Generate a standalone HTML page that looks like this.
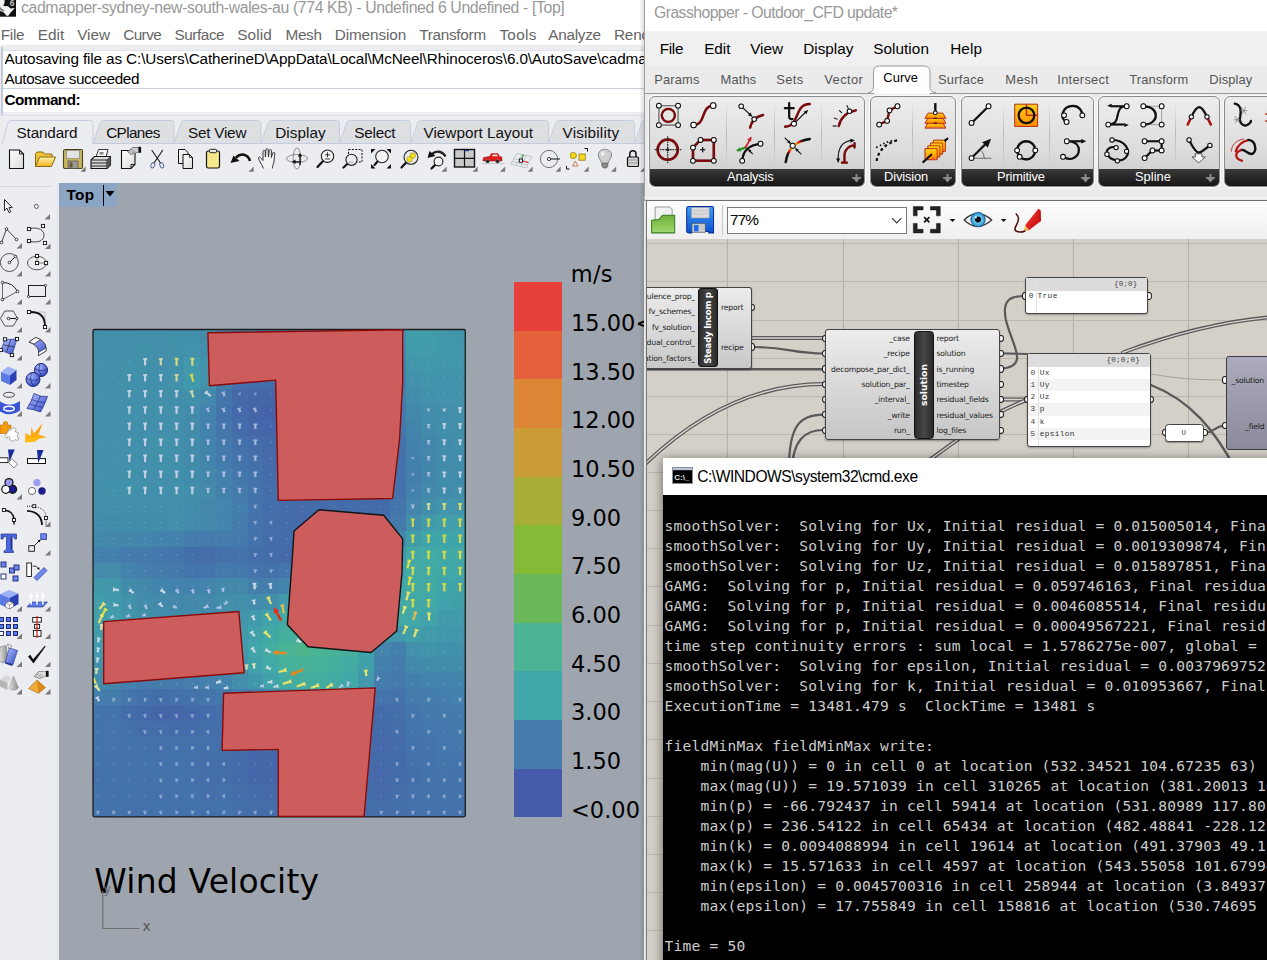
<!DOCTYPE html>
<html><head><meta charset="utf-8"><title>Rhino CFD</title>
<style>
html,body{margin:0;padding:0;}
body{width:1267px;height:960px;overflow:hidden;position:relative;background:#9fa5ae;}
.t{position:absolute;white-space:pre;}
.b{position:absolute;box-sizing:border-box;}
svg{position:absolute;overflow:visible;}
</style></head><body>
<div class="b" style="left:0px;top:0px;width:645px;height:45px;background:#fff;"></div>
<div class="b" style="left:0px;top:45px;width:645px;height:138px;background:#ecedf1;"></div>
<div class="b" style="left:0px;top:183px;width:59px;height:777px;background:#ecedf1;"></div>
<svg width="17" height="17" style="left:0;top:0" viewBox="0 0 17 17"><rect x="0" y="0" width="16" height="16.7" fill="#111"/><path d="M0 0 L4.6 0 Q5.2 3.5 3.2 5.6 L5 6.2 Q8 5.5 10.5 8.4 L14.8 8 L10 13.2 L8.6 15.6 L6.8 15.9 L3.8 12.6 L0 11 Z" fill="#f4f4f4"/><path d="M0 7 L4.5 10.5 L3 12 L0 10 Z" fill="#8a8a8a"/><text x="9.8" y="6.4" font-family="'Liberation Sans',sans-serif" font-size="8.6" font-weight="bold" fill="#bdbdbd">6</text></svg>
<div class="t" style="left:21.00px;top:-0.37px;font:15.8px/1 'Liberation Sans', sans-serif;color:#999;letter-spacing:-0.372px;">cadmapper-sydney-new-south-wales-au (774 KB) - Undefined 6 Undefined - [Top]</div>
<div class="t" style="left:0.70px;top:27.35px;font:15.3px/1 'Liberation Sans', sans-serif;color:#666;letter-spacing:-0.238px;">File</div>
<div class="t" style="left:37.70px;top:27.35px;font:15.3px/1 'Liberation Sans', sans-serif;color:#666;letter-spacing:0.084px;">Edit</div>
<div class="t" style="left:77.20px;top:27.35px;font:15.3px/1 'Liberation Sans', sans-serif;color:#666;letter-spacing:-0.047px;">View</div>
<div class="t" style="left:123.20px;top:27.35px;font:15.3px/1 'Liberation Sans', sans-serif;color:#666;letter-spacing:-0.563px;">Curve</div>
<div class="t" style="left:174.50px;top:27.35px;font:15.3px/1 'Liberation Sans', sans-serif;color:#666;letter-spacing:-0.433px;">Surface</div>
<div class="t" style="left:237.20px;top:27.35px;font:15.3px/1 'Liberation Sans', sans-serif;color:#666;letter-spacing:0.116px;">Solid</div>
<div class="t" style="left:285.50px;top:27.35px;font:15.3px/1 'Liberation Sans', sans-serif;color:#666;letter-spacing:-0.328px;">Mesh</div>
<div class="t" style="left:334.70px;top:27.35px;font:15.3px/1 'Liberation Sans', sans-serif;color:#666;letter-spacing:-0.087px;">Dimension</div>
<div class="t" style="left:419.20px;top:27.35px;font:15.3px/1 'Liberation Sans', sans-serif;color:#666;letter-spacing:-0.271px;">Transform</div>
<div class="t" style="left:499.40px;top:27.35px;font:15.3px/1 'Liberation Sans', sans-serif;color:#666;letter-spacing:0.296px;">Tools</div>
<div class="t" style="left:548.20px;top:27.35px;font:15.3px/1 'Liberation Sans', sans-serif;color:#666;letter-spacing:-0.247px;">Analyze</div>
<div class="t" style="left:613.90px;top:27.35px;font:15.3px/1 'Liberation Sans', sans-serif;color:#666;letter-spacing:-0.114px;">Render</div>
<div class="b" style="left:1px;top:47px;width:2px;height:68px;background:#c3c9dc;"></div>
<div class="b" style="left:3px;top:50px;width:642px;height:62px;background:#fff;border-top:1px solid #dfe2ea;"></div>
<div class="b" style="left:3px;top:88px;width:642px;height:1px;background:#c9cfde;"></div>
<div class="b" style="left:0px;top:115px;width:645px;height:1px;background:#dde0ea;"></div>
<div class="t" style="left:4.50px;top:51.25px;font:15.3px/1 'Liberation Sans', sans-serif;color:#000;letter-spacing:-0.133px;width:640px;overflow:hidden;">Autosaving file as C:\Users\CatherineD\AppData\Local\McNeel\Rhinoceros\6.0\AutoSave\cadmapper</div>
<div class="t" style="left:4.50px;top:71.05px;font:15.3px/1 'Liberation Sans', sans-serif;color:#000;letter-spacing:-0.419px;">Autosave succeeded</div>
<div class="t" style="left:4.50px;top:92.15px;font:15.3px/1 'Liberation Sans', sans-serif;font-weight:bold;color:#000;letter-spacing:-0.550px;">Command:</div>
<svg width="645" height="70" style="left:0;top:116px" viewBox="0 116 645 70"><path d="M2 144 L8 123 Q9 120.5 12 120.5 L90 120.5 Q93 120.5 93 123 L93 144" fill="#ecedf1" stroke="#c4cde0" stroke-width="1"/><path d="M93 143.5 L100 123 Q101 120.5 104 120.5 L171 120.5 Q174 120.5 174 123 L174 143.5 Z" fill="#dedfe2" stroke="#c4cde0" stroke-width="1"/><path d="M174 143.5 L181 123 Q182 120.5 185 120.5 L258 120.5 Q261 120.5 261 123 L261 143.5 Z" fill="#dedfe2" stroke="#c4cde0" stroke-width="1"/><path d="M261 143.5 L268 123 Q269 120.5 272 120.5 L336.5 120.5 Q339.5 120.5 339.5 123 L339.5 143.5 Z" fill="#dedfe2" stroke="#c4cde0" stroke-width="1"/><path d="M339.5 143.5 L346.5 123 Q347.5 120.5 350.5 120.5 L407.6 120.5 Q410.6 120.5 410.6 123 L410.6 143.5 Z" fill="#dedfe2" stroke="#c4cde0" stroke-width="1"/><path d="M410.6 143.5 L417.6 123 Q418.6 120.5 421.6 120.5 L545.6 120.5 Q548.6 120.5 548.6 123 L548.6 143.5 Z" fill="#dedfe2" stroke="#c4cde0" stroke-width="1"/><path d="M548.6 143.5 L555.6 123 Q556.6 120.5 559.6 120.5 L631.6 120.5 Q634.6 120.5 634.6 123 L634.6 143.5 Z" fill="#dedfe2" stroke="#c4cde0" stroke-width="1"/><path d="M634.6 143.5 L641.6 123 Q642.6 120.5 645.6 120.5 L697 120.5 Q700 120.5 700 123 L700 143.5 Z" fill="#dedfe2" stroke="#c4cde0" stroke-width="1"/><path d="M93 143.5 L645 143.5" stroke="#c4cde0" stroke-width="1"/></svg>
<div class="t" style="left:16.50px;top:124.85px;font:15.3px/1 'Liberation Sans', sans-serif;color:#111;letter-spacing:-0.150px;">Standard</div>
<div class="t" style="left:106.20px;top:124.85px;font:15.3px/1 'Liberation Sans', sans-serif;color:#111;letter-spacing:-0.619px;">CPlanes</div>
<div class="t" style="left:188.00px;top:124.85px;font:15.3px/1 'Liberation Sans', sans-serif;color:#111;letter-spacing:-0.238px;">Set View</div>
<div class="t" style="left:275.20px;top:124.85px;font:15.3px/1 'Liberation Sans', sans-serif;color:#111;letter-spacing:0.048px;">Display</div>
<div class="t" style="left:354.20px;top:124.85px;font:15.3px/1 'Liberation Sans', sans-serif;color:#111;letter-spacing:-0.221px;">Select</div>
<div class="t" style="left:423.50px;top:124.85px;font:15.3px/1 'Liberation Sans', sans-serif;color:#111;letter-spacing:0.004px;">Viewport Layout</div>
<div class="t" style="left:562.60px;top:124.85px;font:15.3px/1 'Liberation Sans', sans-serif;color:#111;letter-spacing:0.162px;">Visibility</div>
<div class="b" style="left:0px;top:186px;width:52px;height:1px;background:#d5dae8;"></div>
<div class="b" style="left:59px;top:183px;width:58px;height:24px;background:#8ba5c4;border-radius:0 0 4px 0;"></div>
<div class="t" style="left:66.50px;top:187.25px;font:15.3px/1 'Liberation Sans', sans-serif;font-weight:bold;color:#000;letter-spacing:0.366px;">Top</div>
<div class="b" style="left:103px;top:185px;width:1px;height:21px;background:#000;"></div>
<svg width="12" height="8" style="left:105px;top:190px"><path d="M0.5 1 L9.5 1 L5 6.5 Z" fill="#000"/></svg>
<svg width="645" height="34" style="left:0;top:144px" viewBox="0 144 645 34"><defs><linearGradient id="pgw" x1="0" y1="0" x2="1" y2="1"><stop offset="0" stop-color="#fff"/><stop offset="1" stop-color="#d9d9d9"/></linearGradient><linearGradient id="fy" x1="0" y1="0" x2="0" y2="1"><stop offset="0" stop-color="#fff2a8"/><stop offset="1" stop-color="#f0b521"/></linearGradient></defs><path d="M9.5 150 L19.5 150 L23.5 154 L23.5 168.5 L9.5 168.5 Z" fill="url(#pgw)" stroke="#111" stroke-width="1.1"/><path d="M19.5 150 L19.5 154 L23.5 154" fill="none" stroke="#111" stroke-width="0.9"/><path d="M35.5 166.5 L35.5 153.5 L37 152 L43 152 L44.5 154 L52 154 L52 157" fill="#f3c33a" stroke="#8a6a10" stroke-width="1"/><path d="M35.5 166.5 L39.5 157 L55.5 157 L51.5 166.5 Z" fill="url(#fy)" stroke="#8a6a10" stroke-width="1"/><rect x="63.5" y="149.5" width="19" height="19" rx="1.5" fill="#c8b560" stroke="#4a4420" stroke-width="1.1"/><rect x="66.5" y="150.5" width="13" height="8" fill="#e4e4e4" stroke="#777" stroke-width="0.6"/><rect x="68" y="161" width="10" height="7.5" fill="#9b9b9b" stroke="#444" stroke-width="0.6"/><rect x="69.5" y="162.5" width="3" height="5" fill="#6b5a1e"/><path d="M80.5 171.7 L85.7 166.5 L85.7 171.7 Z" fill="#7a7a7a"/><path d="M96 157 L98.5 149.5 L108 149.5 L106 157 Z" fill="#f6f6f6" stroke="#222" stroke-width="0.9"/><rect x="99.5" y="152" width="4" height="2.6" fill="#888"/><path d="M91 160 L94.5 156.5 L110.5 156.5 L110.5 165 L107 168.5 L91 168.5 Z" fill="#d9d9d9" stroke="#111" stroke-width="1.1"/><path d="M91 160 L107 160 L110.5 156.5 M107 160 L107 168.5 M91 163 L107 163 M91 166 L107 166" fill="none" stroke="#111" stroke-width="0.9"/><path d="M107 160 L110.5 156.5 L110.5 165 L107 168.5 Z" fill="#555"/><path d="M121.5 150.5 L135 150.5 L135 164.5 L131 168.5 L121.5 168.5 Z" fill="url(#pgw)" stroke="#111" stroke-width="1.1"/><path d="M135 164.5 L131 164.5 L131 168.5" fill="none" stroke="#111" stroke-width="0.9"/><path d="M127.5 151.5 L133 147.5 L139 147.5 L139 152 L134 153.5 L130.5 154.5 Z" fill="#cfcfcf" stroke="#555" stroke-width="0.7"/><rect x="138.5" y="146.8" width="2.6" height="6" fill="#111"/><path d="M128.5 152 L132 149 M130 153 L134 150 M132 153.5 L135.5 151" stroke="#777" stroke-width="0.6"/><path d="M152 150.5 L160.5 163 M162.5 150.5 L154 163" stroke="#222" stroke-width="1.2" stroke-linecap="round"/><ellipse cx="152.8" cy="165.2" rx="1.8" ry="2.8" transform="rotate(25 152.8 165.2)" fill="none" stroke="#5a6a9a" stroke-width="0.9"/><ellipse cx="161.7" cy="165.2" rx="1.8" ry="2.8" transform="rotate(-25 161.7 165.2)" fill="none" stroke="#5a6a9a" stroke-width="0.9"/><path d="M178.5 149.5 L185 149.5 L188 152.5 L188 163.5 L178.5 163.5 Z" fill="url(#pgw)" stroke="#111" stroke-width="1"/><path d="M183 154.5 L189.5 154.5 L192.5 157.5 L192.5 168.5 L183 168.5 Z" fill="url(#pgw)" stroke="#111" stroke-width="1"/><path d="M189.5 154.5 L189.5 157.5 L192.5 157.5" fill="none" stroke="#111" stroke-width="0.8"/><rect x="206.5" y="151" width="13" height="17" rx="1.8" fill="#f6e98c" stroke="#111" stroke-width="1.2"/><rect x="209.5" y="149.3" width="7" height="3.4" rx="1" fill="#e8e8e8" stroke="#111" stroke-width="0.9"/><path d="M250 161 C248 154 241 152.5 236 157.5" fill="none" stroke="#111" stroke-width="2.6"/><path d="M230.5 163 L233.5 155.5 L239.5 161 Z" fill="#111"/><path d="M248.5 171.7 L253.7 166.5 L253.7 171.7 Z" fill="#7a7a7a"/><path d="M263.5 168.5 C262 165 259.5 161 258.5 158.5 C258 157 259.5 156.5 260.5 157.5 L263 160.5 L263 151.5 C263 150 265.2 150 265.2 151.5 L265.4 157 L266 149.8 C266 148.3 268.2 148.3 268.2 149.8 L268.4 157 L269.4 150.5 C269.6 149 271.6 149.2 271.5 150.8 L271.3 157.5 L272.8 153 C273.3 151.7 275 152.2 274.8 153.6 C274.2 157.5 274.5 160.5 273.5 163.5 C272.8 165.5 272.3 167 272.3 168.5" fill="#f2f2f2" stroke="#222" stroke-width="0.9" stroke-linejoin="round"/><ellipse cx="297" cy="158.5" rx="10.5" ry="4" fill="none" stroke="#666" stroke-width="0.7"/><ellipse cx="297" cy="158.5" rx="3.8" ry="10.5" fill="none" stroke="#666" stroke-width="0.7"/><path d="M292.5 161.8 L301 161.8 M300 155 L300 165" stroke="#111" stroke-width="1.3"/><path d="M292 161.8 L295.5 159.6 L295.5 164 Z M300 153 L297.8 156.5 L302.2 156.5 Z" fill="#111"/><path d="M323.3 160.7 L317.5 167" stroke="#111" stroke-width="2.2" stroke-linecap="round"/><circle cx="327.5" cy="156.2" r="6.2" fill="#f4f4f4" stroke="#222" stroke-width="1.1"/><path d="M325 154.8 L330 154.8 M327.5 152.3 L327.5 157.3 M325 159 L330 159" stroke="#111" stroke-width="0.8"/><rect x="348.5" y="149.5" width="13.5" height="12.5" fill="none" stroke="#111" stroke-width="1" stroke-dasharray="2 1.4"/><path d="M347.5 163.7 L343.5 167.5" stroke="#111" stroke-width="2.2" stroke-linecap="round"/><circle cx="351.5" cy="159.8" r="5.6" fill="#ececf0" stroke="#222" stroke-width="1.1"/><path d="M349 162.2 L354 162.2" stroke="#555" stroke-width="0.7" stroke-dasharray="1.3 1"/><path d="M377.8 161.2 L374.5 165" stroke="#111" stroke-width="2.2" stroke-linecap="round"/><circle cx="382" cy="156.5" r="6.3" fill="#f4f4f4" stroke="#222" stroke-width="1.1"/><path d="M371 149 L375.5 149 L371 153.5 Z M391 149 L386.5 149 L391 153.5 Z M371 168.5 L375.5 168.5 L371 164 Z M391 168.5 L386.5 168.5 L391 164 Z" fill="#111"/><path d="M406.2 162.4 L401.5 167.5" stroke="#111" stroke-width="2.2" stroke-linecap="round"/><circle cx="411" cy="157.3" r="7" fill="#e9e9e9" stroke="#222" stroke-width="1.1"/><circle cx="412.8" cy="155.5" r="2.7" fill="#f2e21c" stroke="#8a7a00" stroke-width="0.5"/><circle cx="409.5" cy="159.3" r="2.7" fill="#f2e21c" stroke="#8a7a00" stroke-width="0.5"/><path d="M445.5 156.5 C442 150.5 436 150.5 432 154" fill="none" stroke="#222" stroke-width="2.4"/><path d="M427.5 158 L429.5 151 L435.5 156 Z" fill="#111"/><path d="M435.4 164.6 L431.5 168.5" stroke="#111" stroke-width="2.2" stroke-linecap="round"/><circle cx="438.5" cy="161.5" r="4.4" fill="#f4f4f4" stroke="#222" stroke-width="1.1"/><path d="M441.5 171.7 L446.7 166.5 L446.7 171.7 Z" fill="#7a7a7a"/><rect x="454.5" y="149.5" width="20" height="17.5" fill="#c9c9c9" stroke="#111" stroke-width="1.4"/><path d="M464.5 149.5 L464.5 167 M454.5 158.3 L474.5 158.3" stroke="#111" stroke-width="1.2"/><rect x="465.5" y="150" width="3.5" height="1.2" fill="#1a3aa8"/><path d="M472.5 171.7 L477.7 166.5 L477.7 171.7 Z" fill="#7a7a7a"/><path d="M483 160.5 L483.5 157.5 L489.5 156.5 L491.5 153.6 L498 153.6 L499.5 156.5 L501.8 157 L502 161 L483 161 Z" fill="#e01919" stroke="#8a0e0e" stroke-width="0.5"/><path d="M492 156.3 L493 154.5 L497.2 154.5 L498 156.3 Z" fill="#f6dede"/><circle cx="487.6" cy="161.3" r="1.9" fill="#222" stroke="#999" stroke-width="0.5"/><circle cx="497.5" cy="161.3" r="1.9" fill="#222" stroke="#999" stroke-width="0.5"/><path d="M482 163.6 L504 163.6" stroke="#bdbdbd" stroke-width="0.8"/><path d="M500 171.7 L505.2 166.5 L505.2 171.7 Z" fill="#7a7a7a"/><path d="M510.5 164 L517 153.5 L531.5 156.5 L526.5 168 Z M513.8 158.7 L529 162.2 M516 166 L521.5 154.5 M520.5 167 L526 155.5 M512 161.5 L528 165.2" fill="none" stroke="#b5b5b5" stroke-width="0.7"/><path d="M521 160.5 L523.5 154.5" stroke="#1a9a2a" stroke-width="1.1"/><path d="M521 160.5 L528 162.5" stroke="#e02020" stroke-width="1.1"/><rect x="519.3" y="159" width="3.2" height="3.2" fill="#fff" stroke="#111" stroke-width="0.9"/><path d="M527.5 171.7 L532.7 166.5 L532.7 171.7 Z" fill="#7a7a7a"/><circle cx="549" cy="159" r="8.6" fill="none" stroke="#666" stroke-width="0.9"/><path d="M549 159 L560 159" stroke="#111" stroke-width="1"/><circle cx="549" cy="159" r="1.6" fill="#fff" stroke="#111" stroke-width="0.8"/><path d="M555.5 171.7 L560.7 166.5 L560.7 171.7 Z" fill="#7a7a7a"/><circle cx="573.3" cy="155.5" r="3.1" fill="#f5d91c" stroke="#8a6a00" stroke-width="0.7"/><rect x="579" y="154" width="6.2" height="6.2" fill="#f5d91c" stroke="#8a6a00" stroke-width="0.7"/><path d="M572.5 166 L575.3 161.2 L578 166 Z" fill="none" stroke="#b9622a" stroke-width="0.8"/><path d="M584.5 148.5 L587.5 148.5 L587.5 151.5 M566.5 166 L566.5 169 L569.5 169" fill="none" stroke="#111" stroke-width="1"/><path d="M583.5 171.7 L588.7 166.5 L588.7 171.7 Z" fill="#7a7a7a"/><path d="M601.5 163 C601.5 160.5 598.3 158.5 598.3 155 C598.3 151.7 601 149.3 604.9 149.3 C608.8 149.3 611.5 151.7 611.5 155 C611.5 158.5 608.3 160.5 608.3 163 Z" fill="#cfcfcf" stroke="#7d7d7d" stroke-width="0.9"/><path d="M601.8 163.5 L608 163.5 L608 166 L606.5 168 L603.3 168 L601.8 166 Z" fill="#8a8a8a" stroke="#555" stroke-width="0.6"/><ellipse cx="602.6" cy="153.6" rx="1.6" ry="2.4" fill="#f2f2f2"/><path d="M611 171.7 L616.2 166.5 L616.2 171.7 Z" fill="#7a7a7a"/><path d="M629.8 157 L629.8 154 C629.8 149.8 636 149.8 636 154 L636 157" fill="none" stroke="#111" stroke-width="1.5"/><rect x="627.5" y="157" width="11" height="9.5" rx="1" fill="#d2d2d2" stroke="#111" stroke-width="1.2"/><path d="M628.5 160 L637.5 160 M628.5 163 L637.5 163" stroke="#888" stroke-width="0.7"/><path d="M640 171.7 L645.2 166.5 L645.2 171.7 Z" fill="#7a7a7a"/></svg>
<svg width="59" height="520" style="left:0;top:190px" viewBox="0 190 59 520"><defs><linearGradient id="bl1" x1="0" y1="0" x2="1" y2="1"><stop offset="0" stop-color="#b9c6ff"/><stop offset="1" stop-color="#3048c8"/></linearGradient><radialGradient id="sp" cx="0.35" cy="0.3" r="0.8"><stop offset="0" stop-color="#a8b8ff"/><stop offset="1" stop-color="#2a3cb8"/></radialGradient><linearGradient id="org" x1="0" y1="0" x2="0" y2="1"><stop offset="0" stop-color="#ff8a00"/><stop offset="1" stop-color="#ffc21a"/></linearGradient><linearGradient id="gry" x1="0" y1="0" x2="1" y2="0"><stop offset="0" stop-color="#e4e4e4"/><stop offset="1" stop-color="#8a8a8a"/></linearGradient></defs><rect x="57.3" y="183" width="1" height="777" fill="#dfe3ee"/><path d="M4.5 199.5 L4.5 210.5 L7 208.2 L9 212.6 L10.8 211.8 L8.9 207.6 L12.2 207.4 Z" fill="#fff" stroke="#111" stroke-width="0.9" stroke-linejoin="round"/><circle cx="36.4" cy="206.4" r="2" fill="#fff" stroke="#333" stroke-width="0.8"/><path d="M44.5 219.5 L50.0 214 L50.0 219.5 Z" fill="#7a7a7a"/><path d="M1.5 242.5 L6.5 229 L16.5 239.5" fill="none" stroke="#333" stroke-width="0.9"/><circle cx="1.5" cy="242.5" r="1.3" fill="#fff" stroke="#111" stroke-width="0.8"/><circle cx="6.5" cy="229" r="1.3" fill="#fff" stroke="#111" stroke-width="0.8"/><circle cx="16.5" cy="239.5" r="1.3" fill="#fff" stroke="#111" stroke-width="0.8"/><path d="M16.5 248.5 L22.0 243 L22.0 248.5 Z" fill="#7a7a7a"/><path d="M29 229 C48 223 50 247 29 241" fill="none" stroke="#333" stroke-width="0.9"/><rect x="27.4" y="227.4" width="3.2" height="3.2" fill="#fff" stroke="#111" stroke-width="0.9"/><rect x="41.4" y="224.4" width="3.2" height="3.2" fill="#fff" stroke="#111" stroke-width="0.9"/><rect x="27.4" y="239.4" width="3.2" height="3.2" fill="#fff" stroke="#111" stroke-width="0.9"/><rect x="43.4" y="241.4" width="3.2" height="3.2" fill="#fff" stroke="#111" stroke-width="0.9"/><path d="M45 249.0 L50.5 243.5 L50.5 249.0 Z" fill="#7a7a7a"/><circle cx="9.4" cy="262.5" r="9" fill="none" stroke="#444" stroke-width="0.9"/><path d="M9.4 262.5 L15.5 256.5" stroke="#111" stroke-width="1"/><circle cx="9.4" cy="262.5" r="1.3" fill="#fff" stroke="#111" stroke-width="0.8"/><circle cx="15.5" cy="256.5" r="1.3" fill="#fff" stroke="#111" stroke-width="0.8"/><path d="M16.5 276.5 L22.0 271 L22.0 276.5 Z" fill="#7a7a7a"/><ellipse cx="37" cy="263" rx="9.5" ry="6.8" fill="none" stroke="#444" stroke-width="0.9"/><path d="M37 256 L37 263 L46 263" fill="none" stroke="#555" stroke-width="0.7"/><rect x="35.4" y="254.4" width="3.2" height="3.2" fill="#fff" stroke="#111" stroke-width="0.9"/><rect x="35.4" y="261.4" width="3.2" height="3.2" fill="#fff" stroke="#111" stroke-width="0.9"/><rect x="44.4" y="261.4" width="3.2" height="3.2" fill="#fff" stroke="#111" stroke-width="0.9"/><path d="M45 276.5 L50.5 271 L50.5 276.5 Z" fill="#7a7a7a"/><path d="M2.5 282.5 L2.5 299.5 L17.5 291.5" fill="none" stroke="#444" stroke-width="0.8"/><path d="M2.5 282.5 Q13 282.5 17.5 291.5" fill="none" stroke="#222" stroke-width="1"/><circle cx="2.5" cy="282.5" r="1.3" fill="#fff" stroke="#111" stroke-width="0.8"/><circle cx="17.5" cy="291.5" r="1.3" fill="#fff" stroke="#111" stroke-width="0.8"/><circle cx="2.5" cy="299.5" r="1.3" fill="#fff" stroke="#111" stroke-width="0.8"/><path d="M16.5 304.5 L22.0 299 L22.0 304.5 Z" fill="#7a7a7a"/><rect x="28.5" y="285.5" width="17" height="11" fill="none" stroke="#222" stroke-width="1"/><circle cx="45.5" cy="285.5" r="1.1" fill="#fff" stroke="#111" stroke-width="0.8"/><circle cx="28.5" cy="296.5" r="1.1" fill="#fff" stroke="#111" stroke-width="0.8"/><path d="M45 304.5 L50.5 299 L50.5 304.5 Z" fill="#7a7a7a"/><path d="M0.5 318.5 L4.8 311 L13.3 311 L17.6 318.5 L13.3 326 L4.8 326 Z" fill="none" stroke="#444" stroke-width="0.9"/><path d="M8.5 318.5 L16.8 318.5" stroke="#111" stroke-width="1"/><circle cx="8.5" cy="318.5" r="1.3" fill="#fff" stroke="#111" stroke-width="0.8"/><circle cx="16.8" cy="318.5" r="1.1" fill="#fff" stroke="#111" stroke-width="0.8"/><path d="M16.5 332.5 L22.0 327 L22.0 332.5 Z" fill="#7a7a7a"/><path d="M30 312 L45 312 L45 326" fill="none" stroke="#aaa" stroke-width="0.7"/><path d="M30.5 312 Q45 312 45 326" fill="none" stroke="#111" stroke-width="1.8"/><rect x="27.4" y="310.4" width="3.2" height="3.2" fill="#fff" stroke="#111" stroke-width="0.9"/><rect x="43.4" y="325.4" width="3.2" height="3.2" fill="#fff" stroke="#111" stroke-width="0.9"/><path d="M45 332.5 L50.5 327 L50.5 332.5 Z" fill="#7a7a7a"/><path d="M5 339.5 L17 339 L12 355 L1 350 Z" fill="url(#bl1)" stroke="#2a3a9a" stroke-width="0.7"/><path d="M11 339.3 L6.3 352.5 M3 344.8 L14.6 347" stroke="#223" stroke-width="0.7"/><rect x="3.4" y="337.7" width="3.2" height="3.2" fill="#fff" stroke="#111" stroke-width="0.9"/><rect x="15.4" y="337.4" width="3.2" height="3.2" fill="#fff" stroke="#111" stroke-width="0.9"/><rect x="10.4" y="353.4" width="3.2" height="3.2" fill="#fff" stroke="#111" stroke-width="0.9"/><rect x="-0.8" y="348.4" width="3.2" height="3.2" fill="#fff" stroke="#111" stroke-width="0.9"/><path d="M16.5 360.5 L22.0 355 L22.0 360.5 Z" fill="#7a7a7a"/><path d="M29 342 L35.5 337.5 Q45 340.5 46 347 L46 351 L38.5 355.5 L38.5 350.5 Q37 345 29 342 Z" fill="url(#bl1)" stroke="#222" stroke-width="0.8"/><path d="M29 342 L35.5 337.5 Q38.5 338.3 40.5 339.5 L34 344 Q31.5 342.8 29 342 Z" fill="#fff" stroke="#222" stroke-width="0.7"/><path d="M38.5 355.5 L46 351 L46 348 L38.5 352.5 Z" fill="#fff" stroke="#222" stroke-width="0.6"/><path d="M45 360.5 L50.5 355 L50.5 360.5 Z" fill="#7a7a7a"/><path d="M1 372 L8 366.5 L16.5 370 L10 375.5 Z" fill="#9db2f6"/><path d="M1 372 L10 375.5 L10 385 L1 381 Z" fill="#5b7ae6"/><path d="M10 375.5 L16.5 370 L16.5 380 L10 385 Z" fill="#2b3fb2"/><path d="M16.5 388.5 L22.0 383 L22.0 388.5 Z" fill="#7a7a7a"/><circle cx="41" cy="370" r="6.6" fill="url(#sp)" stroke="#1a2470" stroke-width="0.9"/><path d="M35 368.5 Q41 372.5 47.3 369 M39.5 363.8 Q37.5 370 41.5 376.4" fill="none" stroke="#1a2470" stroke-width="0.7"/><circle cx="33" cy="379.5" r="7" fill="url(#sp)" stroke="#1a2470" stroke-width="0.9"/><path d="M26.3 378 Q33 382.5 39.8 378.5 M31.5 372.8 Q29 380 33.5 386.4" fill="none" stroke="#1a2470" stroke-width="0.7"/><path d="M45 388.5 L50.5 383 L50.5 388.5 Z" fill="#7a7a7a"/><ellipse cx="9" cy="394.8" rx="5.6" ry="2.5" fill="none" stroke="#222" stroke-width="0.8"/><path d="M0 401.5 Q10 408 20 401 L20 410.5 Q10 417.5 0 411.5 Z" fill="#3a55d6"/><ellipse cx="9" cy="408.6" rx="5.2" ry="2.4" fill="none" stroke="#fff" stroke-width="1.5"/><path d="M16.5 416.5 L22.0 411 L22.0 416.5 Z" fill="#7a7a7a"/><path d="M34 393.5 Q41 397.5 47.5 396.5 Q45 404 40.5 412 Q33 409 27 408.5 Q32 401 34 393.5 Z" fill="url(#bl1)" stroke="#26328a" stroke-width="0.8"/><path d="M40.5 396 Q37.5 403 33.5 409.5 M31.5 399.5 Q38 402.5 45 402.5 M29.5 404 Q36 406.5 43 407.5" fill="none" stroke="#26328a" stroke-width="0.7"/><path d="M45 416.5 L50.5 411 L50.5 416.5 Z" fill="#7a7a7a"/><path d="M0 425 L3.5 425 Q2.5 421.5 5.5 421.5 Q8.5 421.5 7.5 425 L11 425 L11 428.5 Q8 428 8 430.5 Q8 433 11 432.5 L7.5 433.5 L0 433.5 Z" fill="#f59a0c" stroke="#a86200" stroke-width="0.5"/><path d="M8 431 L11.5 429.5 Q12.5 426.5 15 428 Q17 429.5 15 431.5 L18.5 433 L17 436.5 Q19.5 437 18.5 439.5 Q17 441.5 15 439.5 L13 441.5 L9.5 439.5 Q10.5 437 8.5 436.5 Q6.5 436.5 7 438.5 L5 436.5 Z" fill="#fff" stroke="#777" stroke-width="0.6"/><path d="M25.5 433 L25 442.5 L34.5 442 L39.5 438.5 L47 437.5 L38.5 434.5 L42.5 423.5 L34 433.5 L31.5 427.5 L30.5 436 Z" fill="url(#org)"/><path d="M8 449.5 L14.8 449.5 L9.5 461.5 Z" fill="#1c2c9c"/><rect x="-1" y="457.8" width="9" height="4.8" fill="#fff" stroke="#111" stroke-width="0.9"/><path d="M8.5 462.5 L12 458.8 L17.5 464 L14 468 Z" fill="#fff" stroke="#555" stroke-width="0.7"/><rect x="27.5" y="458.6" width="18" height="4.9" fill="#fff" stroke="#111" stroke-width="1"/><path d="M37 450 L43.6 450 L38.2 463.3 Z" fill="#1c2c9c"/><circle cx="9" cy="482.6" r="4.6" fill="#111"/><circle cx="5.8" cy="489.3" r="4.6" fill="#111"/><circle cx="12.6" cy="489.3" r="4.6" fill="#111"/><circle cx="9" cy="482.6" r="3.4" fill="#9d9df2"/><circle cx="12.6" cy="489.3" r="3.4" fill="#1c1c8c"/><circle cx="5.8" cy="489.3" r="3.4" fill="#fff"/><path d="M16.5 499.5 L22.0 494 L22.0 499.5 Z" fill="#7a7a7a"/><circle cx="37" cy="482.6" r="3.7" fill="#9d9df2"/><circle cx="42" cy="491" r="3.7" fill="#1c1c8c"/><circle cx="32" cy="491" r="3.6" fill="#fff" stroke="#333" stroke-width="0.7"/><path d="M4 510 Q14 511 14 520 L14 524.5" fill="none" stroke="#111" stroke-width="1.5"/><rect x="2.5" y="508.5" width="3.0" height="3.0" fill="#fff" stroke="#111" stroke-width="0.9"/><rect x="12.5" y="518.5" width="3.0" height="3.0" fill="#fff" stroke="#111" stroke-width="0.9"/><path d="M27 510.8 Q41.5 511.5 42 525" fill="none" stroke="#111" stroke-width="1.8"/><path d="M27 506.2 L32.5 506.2 M46 520.5 L46 526" stroke="#111" stroke-width="1" stroke-dasharray="1 1"/><path d="M34 506.5 Q45.5 508 46 516.5" fill="none" stroke="#111" stroke-width="0.8" stroke-dasharray="1 1"/><rect x="32.7" y="504.7" width="3.0" height="3.0" fill="#fff" stroke="#111" stroke-width="0.9"/><rect x="44.5" y="516.5" width="3.0" height="3.0" fill="#fff" stroke="#111" stroke-width="0.9"/><path d="M45 527.0 L50.5 521.5 L50.5 527.0 Z" fill="#7a7a7a"/><path d="M1 534 L16.5 534 L16.5 539 L14.5 539 L13.5 536.5 L11 536.5 L11 549.5 L13.5 551 L13.5 552.5 L4 552.5 L4 551 L6.5 549.5 L6.5 536.5 L4 536.5 L3 539 L1 539 Z" fill="#4a66e0" stroke="#22308a" stroke-width="0.7"/><path d="M11 536.5 L12.5 537.5 L12.5 550 L11 549.5 Z" fill="#22308a"/><rect x="28.8" y="545.7" width="5.6" height="5.6" fill="#eee" stroke="#111" stroke-width="0.9"/><rect x="40.8" y="533.8" width="5.6" height="5.6" fill="#6d86f2" stroke="#22308a" stroke-width="0.8"/><path d="M34.5 545.5 L40 540" stroke="#111" stroke-width="0.9"/><path d="M40.6 539.4 L37.6 540.2 L39.8 542.4 Z" fill="#111"/><path d="M45 555.5 L50.5 550 L50.5 555.5 Z" fill="#7a7a7a"/><rect x="1" y="562" width="5" height="5" fill="#6d86f2" stroke="#1c2470" stroke-width="0.9"/><rect x="1" y="574" width="5" height="5" fill="#fff" stroke="#1c2470" stroke-width="0.9"/><rect x="9.5" y="568" width="5" height="5" fill="#6d86f2" stroke="#1c2470" stroke-width="0.9"/><rect x="14" y="565" width="5" height="5" fill="#6d86f2" stroke="#1c2470" stroke-width="0.9"/><rect x="13" y="576" width="5" height="5" fill="#6d86f2" stroke="#1c2470" stroke-width="0.9"/><rect x="26.8" y="563" width="4.6" height="13.5" fill="#fff" stroke="#111" stroke-width="0.9"/><path d="M32.5 566 Q37 565.5 38.5 568.5" fill="none" stroke="#111" stroke-width="0.8"/><path d="M39.3 570 L36.8 568.6 L39.6 567.2 Z" fill="#111"/><path d="M34 577.5 L44 567.5 L47 570.5 L37 580.5 Z" fill="#6d86f2" stroke="#22308a" stroke-width="0.7"/><path d="M0 594 L9 590 L18.5 593.5 L9.5 598 Z" fill="#9db2f6"/><path d="M0 594 L9.5 598 L9.5 609 L0 604.5 Z" fill="#5b7ae6"/><path d="M9.5 598 L18.5 593.5 L18.5 604 L9.5 609 Z" fill="#2b3fb2"/><path d="M5.5 603 L9.5 601.5 L13.5 603 L13.5 606.6 L9.5 609 L5.5 607 Z" fill="#fff" stroke="#555" stroke-width="0.5"/><path d="M9.5 605 L9.5 609 M5.5 603 L9.5 605 L13.5 603" fill="none" stroke="#555" stroke-width="0.5"/><path d="M16.5 611.5 L22.0 606 L22.0 611.5 Z" fill="#7a7a7a"/><path d="M27 607 L31.5 602 L47.5 602 L43 607 Z" fill="#5b7ae6" stroke="#22308a" stroke-width="0.6"/><path d="M31.2 604.5 L31.2 596" stroke="#fff" stroke-width="1.5"/><path d="M29.0 597 L31.2 592.6 L33.4 597 Z" fill="#fff"/><path d="M37 604.5 L37 596" stroke="#fff" stroke-width="1.5"/><path d="M34.8 597 L37 592.6 L39.2 597 Z" fill="#fff"/><path d="M42.8 604.5 L42.8 596" stroke="#fff" stroke-width="1.5"/><path d="M40.599999999999994 597 L42.8 592.6 L45.0 597 Z" fill="#fff"/><path d="M45 611.5 L50.5 606 L50.5 611.5 Z" fill="#7a7a7a"/><rect x="-0.5" y="617.5" width="4" height="4" fill="#4f7af2" stroke="#141c60" stroke-width="0.9"/><rect x="-0.5" y="624.5" width="4" height="4" fill="#4f7af2" stroke="#141c60" stroke-width="0.9"/><rect x="-0.5" y="631.5" width="4" height="4" fill="#fff" stroke="#141c60" stroke-width="0.9"/><rect x="6.5" y="617.5" width="4" height="4" fill="#4f7af2" stroke="#141c60" stroke-width="0.9"/><rect x="6.5" y="624.5" width="4" height="4" fill="#4f7af2" stroke="#141c60" stroke-width="0.9"/><rect x="6.5" y="631.5" width="4" height="4" fill="#4f7af2" stroke="#141c60" stroke-width="0.9"/><rect x="13.5" y="617.5" width="4" height="4" fill="#4f7af2" stroke="#141c60" stroke-width="0.9"/><rect x="13.5" y="624.5" width="4" height="4" fill="#4f7af2" stroke="#141c60" stroke-width="0.9"/><rect x="13.5" y="631.5" width="4" height="4" fill="#4f7af2" stroke="#141c60" stroke-width="0.9"/><path d="M16.5 639.0 L22.0 633.5 L22.0 639.0 Z" fill="#7a7a7a"/><rect x="32.7" y="617.5" width="8.6" height="4.6" fill="#fff" stroke="#111" stroke-width="0.9"/><rect x="34.6" y="624.5" width="5" height="3.8" fill="#fff" stroke="#111" stroke-width="0.9"/><rect x="33.4" y="630.5" width="7.6" height="5.8" fill="#fff" stroke="#111" stroke-width="0.9"/><path d="M37 616 L37 638" stroke="#d01818" stroke-width="1.2"/><path d="M45 639.0 L50.5 633.5 L50.5 639.0 Z" fill="#7a7a7a"/><path d="M0 647 L6 645.5 L8 657.5 L3 663 L-1 661 Z" fill="url(#gry)" stroke="#666" stroke-width="0.5"/><path d="M7.5 644 L12 646 L9 649 Z" fill="#fff" stroke="#444" stroke-width="0.5"/><path d="M9.5 648 L17.5 650.5 L13 664.5 L5 662 Z" fill="url(#bl1)" stroke="#22308a" stroke-width="0.6"/><path d="M5 662 L13 664.5 L12 666 L4.5 663.3 Z" fill="#22308a"/><path d="M16.5 667.0 L22.0 661.5 L22.0 667.0 Z" fill="#7a7a7a"/><path d="M28 656.5 L30.2 654.8 L33.2 659.3 L44.8 645.8 L45.6 646.4 L33.5 663.5 Z" fill="#111"/><path d="M45 667.0 L50.5 661.5 L50.5 667.0 Z" fill="#7a7a7a"/><path d="M0 679.5 L6 675 L12 677.5 L7.5 683 Z" fill="#d8d8d8"/><path d="M0 679.5 L7.5 683 L7.5 690 L0 686.5 Z" fill="#b5b5b5"/><path d="M13.5 676 L18.5 688 Q14.5 692 9 688.5 Z" fill="url(#gry)" stroke="#777" stroke-width="0.4"/><path d="M16.5 694.5 L22.0 689 L22.0 694.5 Z" fill="#7a7a7a"/><path d="M37 680 L45.5 687.5 L38.5 693.5 L28.5 688.5 Z" fill="#f2aa3c" stroke="#8a5a10" stroke-width="0.5"/><path d="M37 680 L38.5 693.5 L45.5 687.5 Z" fill="#d98a1c"/><path d="M34 676.5 L38.5 671.5 L46 671.5 L46 676 L40 678.5 Z" fill="#ddd" stroke="#666" stroke-width="0.6"/><rect x="46" y="670.8" width="2.6" height="6" fill="#111"/><path d="M35.5 676.5 L39 673 M37.5 677.3 L41 674 M39.5 678 L43 674.8" stroke="#666" stroke-width="0.6"/><path d="M45 694.5 L50.5 689 L50.5 694.5 Z" fill="#7a7a7a"/></svg>
<svg width="400" height="520" style="left:80px;top:310px" viewBox="80 310 400 520"><defs><clipPath id="mc"><rect x="93" y="329.5" width="372.3" height="487.29999999999995"/></clipPath></defs><g clip-path="url(#mc)" shape-rendering="crispEdges"><rect x="93" y="329.5" width="372.3" height="487.29999999999995" fill="#4384ac"/><rect x="89.5" y="325.5" width="16.1" height="16.1" fill="#428fab"/><rect x="89.5" y="341.3" width="16.1" height="16.1" fill="#428fab"/><rect x="89.5" y="357.1" width="16.1" height="16.1" fill="#4290ab"/><rect x="89.5" y="372.9" width="16.1" height="16.1" fill="#428eab"/><rect x="89.5" y="388.7" width="16.1" height="16.1" fill="#4290ab"/><rect x="89.5" y="404.5" width="16.1" height="16.1" fill="#428fab"/><rect x="89.5" y="420.3" width="16.1" height="16.1" fill="#428eab"/><rect x="89.5" y="436.1" width="16.1" height="16.1" fill="#4290ab"/><rect x="89.5" y="451.9" width="16.1" height="16.1" fill="#428eab"/><rect x="89.5" y="467.7" width="16.1" height="16.1" fill="#4290ab"/><rect x="89.5" y="483.5" width="16.1" height="16.1" fill="#428eab"/><rect x="89.5" y="499.3" width="16.1" height="16.1" fill="#428eab"/><rect x="89.5" y="515.1" width="16.1" height="16.1" fill="#428dab"/><rect x="89.5" y="530.9" width="16.1" height="16.1" fill="#4389ab"/><rect x="89.5" y="546.7" width="16.1" height="16.1" fill="#4480ac"/><rect x="89.5" y="562.5" width="16.1" height="16.1" fill="#438aab"/><rect x="89.5" y="578.3" width="16.1" height="16.1" fill="#4198ab"/><rect x="89.5" y="594.1" width="16.1" height="16.1" fill="#419eaa"/><rect x="89.5" y="609.9" width="16.1" height="16.1" fill="#41a0aa"/><rect x="89.5" y="625.7" width="16.1" height="16.1" fill="#419caa"/><rect x="89.5" y="641.5" width="16.1" height="16.1" fill="#419bab"/><rect x="89.5" y="657.3" width="16.1" height="16.1" fill="#4291ab"/><rect x="89.5" y="673.1" width="16.1" height="16.1" fill="#428dab"/><rect x="89.5" y="688.9" width="16.1" height="16.1" fill="#447eac"/><rect x="89.5" y="704.7" width="16.1" height="16.1" fill="#4474ab"/><rect x="89.5" y="720.5" width="16.1" height="16.1" fill="#4473ab"/><rect x="89.5" y="736.3" width="16.1" height="16.1" fill="#4473ab"/><rect x="89.5" y="752.1" width="16.1" height="16.1" fill="#4473ab"/><rect x="89.5" y="767.9" width="16.1" height="16.1" fill="#4471ab"/><rect x="89.5" y="783.7" width="16.1" height="16.1" fill="#4472ab"/><rect x="89.5" y="799.5" width="16.1" height="16.1" fill="#4472ab"/><rect x="89.5" y="815.3" width="16.1" height="16.1" fill="#4471ab"/><rect x="105.3" y="325.5" width="16.1" height="16.1" fill="#4290ab"/><rect x="105.3" y="341.3" width="16.1" height="16.1" fill="#428eab"/><rect x="105.3" y="357.1" width="16.1" height="16.1" fill="#428eab"/><rect x="105.3" y="372.9" width="16.1" height="16.1" fill="#428fab"/><rect x="105.3" y="388.7" width="16.1" height="16.1" fill="#4290ab"/><rect x="105.3" y="404.5" width="16.1" height="16.1" fill="#4290ab"/><rect x="105.3" y="420.3" width="16.1" height="16.1" fill="#428fab"/><rect x="105.3" y="436.1" width="16.1" height="16.1" fill="#4290ab"/><rect x="105.3" y="451.9" width="16.1" height="16.1" fill="#4290ab"/><rect x="105.3" y="467.7" width="16.1" height="16.1" fill="#428fab"/><rect x="105.3" y="483.5" width="16.1" height="16.1" fill="#4291ab"/><rect x="105.3" y="499.3" width="16.1" height="16.1" fill="#428fab"/><rect x="105.3" y="515.1" width="16.1" height="16.1" fill="#428cab"/><rect x="105.3" y="530.9" width="16.1" height="16.1" fill="#4388ab"/><rect x="105.3" y="546.7" width="16.1" height="16.1" fill="#4480ac"/><rect x="105.3" y="562.5" width="16.1" height="16.1" fill="#438aab"/><rect x="105.3" y="578.3" width="16.1" height="16.1" fill="#4296ab"/><rect x="105.3" y="594.1" width="16.1" height="16.1" fill="#4199ab"/><rect x="105.3" y="609.9" width="16.1" height="16.1" fill="#419faa"/><rect x="105.3" y="625.7" width="16.1" height="16.1" fill="#4199ab"/><rect x="105.3" y="641.5" width="16.1" height="16.1" fill="#4197ab"/><rect x="105.3" y="657.3" width="16.1" height="16.1" fill="#4291ab"/><rect x="105.3" y="673.1" width="16.1" height="16.1" fill="#4388ab"/><rect x="105.3" y="688.9" width="16.1" height="16.1" fill="#447cac"/><rect x="105.3" y="704.7" width="16.1" height="16.1" fill="#4472ab"/><rect x="105.3" y="720.5" width="16.1" height="16.1" fill="#4474ab"/><rect x="105.3" y="736.3" width="16.1" height="16.1" fill="#4474ab"/><rect x="105.3" y="752.1" width="16.1" height="16.1" fill="#4473ab"/><rect x="105.3" y="767.9" width="16.1" height="16.1" fill="#4473ab"/><rect x="105.3" y="783.7" width="16.1" height="16.1" fill="#4471ab"/><rect x="105.3" y="799.5" width="16.1" height="16.1" fill="#4472ab"/><rect x="105.3" y="815.3" width="16.1" height="16.1" fill="#4472ab"/><rect x="121.1" y="325.5" width="16.1" height="16.1" fill="#4290ab"/><rect x="121.1" y="341.3" width="16.1" height="16.1" fill="#4290ab"/><rect x="121.1" y="357.1" width="16.1" height="16.1" fill="#4291ab"/><rect x="121.1" y="372.9" width="16.1" height="16.1" fill="#4291ab"/><rect x="121.1" y="388.7" width="16.1" height="16.1" fill="#4290ab"/><rect x="121.1" y="404.5" width="16.1" height="16.1" fill="#4290ab"/><rect x="121.1" y="420.3" width="16.1" height="16.1" fill="#428eab"/><rect x="121.1" y="436.1" width="16.1" height="16.1" fill="#4290ab"/><rect x="121.1" y="451.9" width="16.1" height="16.1" fill="#4290ab"/><rect x="121.1" y="467.7" width="16.1" height="16.1" fill="#4291ab"/><rect x="121.1" y="483.5" width="16.1" height="16.1" fill="#4291ab"/><rect x="121.1" y="499.3" width="16.1" height="16.1" fill="#428fab"/><rect x="121.1" y="515.1" width="16.1" height="16.1" fill="#428dab"/><rect x="121.1" y="530.9" width="16.1" height="16.1" fill="#4386ac"/><rect x="121.1" y="546.7" width="16.1" height="16.1" fill="#447bac"/><rect x="121.1" y="562.5" width="16.1" height="16.1" fill="#4383ac"/><rect x="121.1" y="578.3" width="16.1" height="16.1" fill="#428cab"/><rect x="121.1" y="594.1" width="16.1" height="16.1" fill="#4291ab"/><rect x="121.1" y="609.9" width="16.1" height="16.1" fill="#4294ab"/><rect x="121.1" y="625.7" width="16.1" height="16.1" fill="#4294ab"/><rect x="121.1" y="641.5" width="16.1" height="16.1" fill="#4290ab"/><rect x="121.1" y="657.3" width="16.1" height="16.1" fill="#4388ab"/><rect x="121.1" y="673.1" width="16.1" height="16.1" fill="#4480ac"/><rect x="121.1" y="688.9" width="16.1" height="16.1" fill="#4476ab"/><rect x="121.1" y="704.7" width="16.1" height="16.1" fill="#446caa"/><rect x="121.1" y="720.5" width="16.1" height="16.1" fill="#4470ab"/><rect x="121.1" y="736.3" width="16.1" height="16.1" fill="#4472ab"/><rect x="121.1" y="752.1" width="16.1" height="16.1" fill="#4473ab"/><rect x="121.1" y="767.9" width="16.1" height="16.1" fill="#4473ab"/><rect x="121.1" y="783.7" width="16.1" height="16.1" fill="#4473ab"/><rect x="121.1" y="799.5" width="16.1" height="16.1" fill="#4471ab"/><rect x="121.1" y="815.3" width="16.1" height="16.1" fill="#4472ab"/><rect x="136.9" y="325.5" width="16.1" height="16.1" fill="#428fab"/><rect x="136.9" y="341.3" width="16.1" height="16.1" fill="#4291ab"/><rect x="136.9" y="357.1" width="16.1" height="16.1" fill="#4291ab"/><rect x="136.9" y="372.9" width="16.1" height="16.1" fill="#428fab"/><rect x="136.9" y="388.7" width="16.1" height="16.1" fill="#428fab"/><rect x="136.9" y="404.5" width="16.1" height="16.1" fill="#428fab"/><rect x="136.9" y="420.3" width="16.1" height="16.1" fill="#428fab"/><rect x="136.9" y="436.1" width="16.1" height="16.1" fill="#4290ab"/><rect x="136.9" y="451.9" width="16.1" height="16.1" fill="#4290ab"/><rect x="136.9" y="467.7" width="16.1" height="16.1" fill="#4290ab"/><rect x="136.9" y="483.5" width="16.1" height="16.1" fill="#428fab"/><rect x="136.9" y="499.3" width="16.1" height="16.1" fill="#428fab"/><rect x="136.9" y="515.1" width="16.1" height="16.1" fill="#428dab"/><rect x="136.9" y="530.9" width="16.1" height="16.1" fill="#4385ac"/><rect x="136.9" y="546.7" width="16.1" height="16.1" fill="#447bac"/><rect x="136.9" y="562.5" width="16.1" height="16.1" fill="#447eac"/><rect x="136.9" y="578.3" width="16.1" height="16.1" fill="#4387ab"/><rect x="136.9" y="594.1" width="16.1" height="16.1" fill="#428cab"/><rect x="136.9" y="609.9" width="16.1" height="16.1" fill="#4291ab"/><rect x="136.9" y="625.7" width="16.1" height="16.1" fill="#428dab"/><rect x="136.9" y="641.5" width="16.1" height="16.1" fill="#428dab"/><rect x="136.9" y="657.3" width="16.1" height="16.1" fill="#4384ac"/><rect x="136.9" y="673.1" width="16.1" height="16.1" fill="#447cac"/><rect x="136.9" y="688.9" width="16.1" height="16.1" fill="#4471ab"/><rect x="136.9" y="704.7" width="16.1" height="16.1" fill="#4568aa"/><rect x="136.9" y="720.5" width="16.1" height="16.1" fill="#446daa"/><rect x="136.9" y="736.3" width="16.1" height="16.1" fill="#4471ab"/><rect x="136.9" y="752.1" width="16.1" height="16.1" fill="#4472ab"/><rect x="136.9" y="767.9" width="16.1" height="16.1" fill="#4471ab"/><rect x="136.9" y="783.7" width="16.1" height="16.1" fill="#4471ab"/><rect x="136.9" y="799.5" width="16.1" height="16.1" fill="#4471ab"/><rect x="136.9" y="815.3" width="16.1" height="16.1" fill="#4471ab"/><rect x="152.7" y="325.5" width="16.1" height="16.1" fill="#428fab"/><rect x="152.7" y="341.3" width="16.1" height="16.1" fill="#428eab"/><rect x="152.7" y="357.1" width="16.1" height="16.1" fill="#428eab"/><rect x="152.7" y="372.9" width="16.1" height="16.1" fill="#428fab"/><rect x="152.7" y="388.7" width="16.1" height="16.1" fill="#428fab"/><rect x="152.7" y="404.5" width="16.1" height="16.1" fill="#4290ab"/><rect x="152.7" y="420.3" width="16.1" height="16.1" fill="#428fab"/><rect x="152.7" y="436.1" width="16.1" height="16.1" fill="#4292ab"/><rect x="152.7" y="451.9" width="16.1" height="16.1" fill="#4291ab"/><rect x="152.7" y="467.7" width="16.1" height="16.1" fill="#4290ab"/><rect x="152.7" y="483.5" width="16.1" height="16.1" fill="#4290ab"/><rect x="152.7" y="499.3" width="16.1" height="16.1" fill="#428fab"/><rect x="152.7" y="515.1" width="16.1" height="16.1" fill="#428dab"/><rect x="152.7" y="530.9" width="16.1" height="16.1" fill="#4382ac"/><rect x="152.7" y="546.7" width="16.1" height="16.1" fill="#4478ac"/><rect x="152.7" y="562.5" width="16.1" height="16.1" fill="#447dac"/><rect x="152.7" y="578.3" width="16.1" height="16.1" fill="#4384ac"/><rect x="152.7" y="594.1" width="16.1" height="16.1" fill="#4389ab"/><rect x="152.7" y="609.9" width="16.1" height="16.1" fill="#428dab"/><rect x="152.7" y="625.7" width="16.1" height="16.1" fill="#438bab"/><rect x="152.7" y="641.5" width="16.1" height="16.1" fill="#4389ab"/><rect x="152.7" y="657.3" width="16.1" height="16.1" fill="#4382ac"/><rect x="152.7" y="673.1" width="16.1" height="16.1" fill="#447cac"/><rect x="152.7" y="688.9" width="16.1" height="16.1" fill="#446eaa"/><rect x="152.7" y="704.7" width="16.1" height="16.1" fill="#4565a9"/><rect x="152.7" y="720.5" width="16.1" height="16.1" fill="#446daa"/><rect x="152.7" y="736.3" width="16.1" height="16.1" fill="#4471ab"/><rect x="152.7" y="752.1" width="16.1" height="16.1" fill="#4471ab"/><rect x="152.7" y="767.9" width="16.1" height="16.1" fill="#4472ab"/><rect x="152.7" y="783.7" width="16.1" height="16.1" fill="#4471ab"/><rect x="152.7" y="799.5" width="16.1" height="16.1" fill="#4472ab"/><rect x="152.7" y="815.3" width="16.1" height="16.1" fill="#4473ab"/><rect x="168.5" y="325.5" width="16.1" height="16.1" fill="#4291ab"/><rect x="168.5" y="341.3" width="16.1" height="16.1" fill="#4291ab"/><rect x="168.5" y="357.1" width="16.1" height="16.1" fill="#4291ab"/><rect x="168.5" y="372.9" width="16.1" height="16.1" fill="#4292ab"/><rect x="168.5" y="388.7" width="16.1" height="16.1" fill="#428fab"/><rect x="168.5" y="404.5" width="16.1" height="16.1" fill="#4290ab"/><rect x="168.5" y="420.3" width="16.1" height="16.1" fill="#428fab"/><rect x="168.5" y="436.1" width="16.1" height="16.1" fill="#4290ab"/><rect x="168.5" y="451.9" width="16.1" height="16.1" fill="#428fab"/><rect x="168.5" y="467.7" width="16.1" height="16.1" fill="#428fab"/><rect x="168.5" y="483.5" width="16.1" height="16.1" fill="#4291ab"/><rect x="168.5" y="499.3" width="16.1" height="16.1" fill="#4290ab"/><rect x="168.5" y="515.1" width="16.1" height="16.1" fill="#428eab"/><rect x="168.5" y="530.9" width="16.1" height="16.1" fill="#4382ac"/><rect x="168.5" y="546.7" width="16.1" height="16.1" fill="#4475ab"/><rect x="168.5" y="562.5" width="16.1" height="16.1" fill="#4479ac"/><rect x="168.5" y="578.3" width="16.1" height="16.1" fill="#4382ac"/><rect x="168.5" y="594.1" width="16.1" height="16.1" fill="#4388ab"/><rect x="168.5" y="609.9" width="16.1" height="16.1" fill="#428cab"/><rect x="168.5" y="625.7" width="16.1" height="16.1" fill="#4389ab"/><rect x="168.5" y="641.5" width="16.1" height="16.1" fill="#4387ab"/><rect x="168.5" y="657.3" width="16.1" height="16.1" fill="#4382ac"/><rect x="168.5" y="673.1" width="16.1" height="16.1" fill="#447bac"/><rect x="168.5" y="688.9" width="16.1" height="16.1" fill="#4470ab"/><rect x="168.5" y="704.7" width="16.1" height="16.1" fill="#4567aa"/><rect x="168.5" y="720.5" width="16.1" height="16.1" fill="#446caa"/><rect x="168.5" y="736.3" width="16.1" height="16.1" fill="#4471ab"/><rect x="168.5" y="752.1" width="16.1" height="16.1" fill="#4472ab"/><rect x="168.5" y="767.9" width="16.1" height="16.1" fill="#4473ab"/><rect x="168.5" y="783.7" width="16.1" height="16.1" fill="#4471ab"/><rect x="168.5" y="799.5" width="16.1" height="16.1" fill="#4471ab"/><rect x="168.5" y="815.3" width="16.1" height="16.1" fill="#4471ab"/><rect x="184.3" y="325.5" width="16.1" height="16.1" fill="#4290ab"/><rect x="184.3" y="341.3" width="16.1" height="16.1" fill="#4292ab"/><rect x="184.3" y="357.1" width="16.1" height="16.1" fill="#4199ab"/><rect x="184.3" y="372.9" width="16.1" height="16.1" fill="#419aab"/><rect x="184.3" y="388.7" width="16.1" height="16.1" fill="#4291ab"/><rect x="184.3" y="404.5" width="16.1" height="16.1" fill="#438bab"/><rect x="184.3" y="420.3" width="16.1" height="16.1" fill="#438aab"/><rect x="184.3" y="436.1" width="16.1" height="16.1" fill="#438bab"/><rect x="184.3" y="451.9" width="16.1" height="16.1" fill="#438aab"/><rect x="184.3" y="467.7" width="16.1" height="16.1" fill="#428cab"/><rect x="184.3" y="483.5" width="16.1" height="16.1" fill="#428fab"/><rect x="184.3" y="499.3" width="16.1" height="16.1" fill="#428dab"/><rect x="184.3" y="515.1" width="16.1" height="16.1" fill="#438bab"/><rect x="184.3" y="530.9" width="16.1" height="16.1" fill="#447dac"/><rect x="184.3" y="546.7" width="16.1" height="16.1" fill="#446eaa"/><rect x="184.3" y="562.5" width="16.1" height="16.1" fill="#4476ab"/><rect x="184.3" y="578.3" width="16.1" height="16.1" fill="#4382ac"/><rect x="184.3" y="594.1" width="16.1" height="16.1" fill="#4389ab"/><rect x="184.3" y="609.9" width="16.1" height="16.1" fill="#428eab"/><rect x="184.3" y="625.7" width="16.1" height="16.1" fill="#438aab"/><rect x="184.3" y="641.5" width="16.1" height="16.1" fill="#4388ab"/><rect x="184.3" y="657.3" width="16.1" height="16.1" fill="#4385ac"/><rect x="184.3" y="673.1" width="16.1" height="16.1" fill="#447fac"/><rect x="184.3" y="688.9" width="16.1" height="16.1" fill="#4472ab"/><rect x="184.3" y="704.7" width="16.1" height="16.1" fill="#4569aa"/><rect x="184.3" y="720.5" width="16.1" height="16.1" fill="#446caa"/><rect x="184.3" y="736.3" width="16.1" height="16.1" fill="#4471ab"/><rect x="184.3" y="752.1" width="16.1" height="16.1" fill="#4471ab"/><rect x="184.3" y="767.9" width="16.1" height="16.1" fill="#4470ab"/><rect x="184.3" y="783.7" width="16.1" height="16.1" fill="#4472ab"/><rect x="184.3" y="799.5" width="16.1" height="16.1" fill="#4473ab"/><rect x="184.3" y="815.3" width="16.1" height="16.1" fill="#4472ab"/><rect x="200.1" y="325.5" width="16.1" height="16.1" fill="#428cab"/><rect x="200.1" y="341.3" width="16.1" height="16.1" fill="#428fab"/><rect x="200.1" y="357.1" width="16.1" height="16.1" fill="#4293ab"/><rect x="200.1" y="372.9" width="16.1" height="16.1" fill="#4292ab"/><rect x="200.1" y="388.7" width="16.1" height="16.1" fill="#4389ab"/><rect x="200.1" y="404.5" width="16.1" height="16.1" fill="#4382ac"/><rect x="200.1" y="420.3" width="16.1" height="16.1" fill="#4382ac"/><rect x="200.1" y="436.1" width="16.1" height="16.1" fill="#4384ac"/><rect x="200.1" y="451.9" width="16.1" height="16.1" fill="#4384ac"/><rect x="200.1" y="467.7" width="16.1" height="16.1" fill="#4388ab"/><rect x="200.1" y="483.5" width="16.1" height="16.1" fill="#438aab"/><rect x="200.1" y="499.3" width="16.1" height="16.1" fill="#4388ab"/><rect x="200.1" y="515.1" width="16.1" height="16.1" fill="#4387ab"/><rect x="200.1" y="530.9" width="16.1" height="16.1" fill="#447bac"/><rect x="200.1" y="546.7" width="16.1" height="16.1" fill="#446daa"/><rect x="200.1" y="562.5" width="16.1" height="16.1" fill="#4476ab"/><rect x="200.1" y="578.3" width="16.1" height="16.1" fill="#4383ac"/><rect x="200.1" y="594.1" width="16.1" height="16.1" fill="#4389ab"/><rect x="200.1" y="609.9" width="16.1" height="16.1" fill="#428cab"/><rect x="200.1" y="625.7" width="16.1" height="16.1" fill="#428eab"/><rect x="200.1" y="641.5" width="16.1" height="16.1" fill="#438bab"/><rect x="200.1" y="657.3" width="16.1" height="16.1" fill="#4386ac"/><rect x="200.1" y="673.1" width="16.1" height="16.1" fill="#4481ac"/><rect x="200.1" y="688.9" width="16.1" height="16.1" fill="#4476ab"/><rect x="200.1" y="704.7" width="16.1" height="16.1" fill="#446caa"/><rect x="200.1" y="720.5" width="16.1" height="16.1" fill="#446fab"/><rect x="200.1" y="736.3" width="16.1" height="16.1" fill="#4470ab"/><rect x="200.1" y="752.1" width="16.1" height="16.1" fill="#446fab"/><rect x="200.1" y="767.9" width="16.1" height="16.1" fill="#446fab"/><rect x="200.1" y="783.7" width="16.1" height="16.1" fill="#446fab"/><rect x="200.1" y="799.5" width="16.1" height="16.1" fill="#4471ab"/><rect x="200.1" y="815.3" width="16.1" height="16.1" fill="#4471ab"/><rect x="215.9" y="325.5" width="16.1" height="16.1" fill="#4480ac"/><rect x="215.9" y="341.3" width="16.1" height="16.1" fill="#4383ac"/><rect x="215.9" y="357.1" width="16.1" height="16.1" fill="#4480ac"/><rect x="215.9" y="372.9" width="16.1" height="16.1" fill="#447dac"/><rect x="215.9" y="388.7" width="16.1" height="16.1" fill="#4476ab"/><rect x="215.9" y="404.5" width="16.1" height="16.1" fill="#4473ab"/><rect x="215.9" y="420.3" width="16.1" height="16.1" fill="#4475ab"/><rect x="215.9" y="436.1" width="16.1" height="16.1" fill="#4479ac"/><rect x="215.9" y="451.9" width="16.1" height="16.1" fill="#447bac"/><rect x="215.9" y="467.7" width="16.1" height="16.1" fill="#4480ac"/><rect x="215.9" y="483.5" width="16.1" height="16.1" fill="#4381ac"/><rect x="215.9" y="499.3" width="16.1" height="16.1" fill="#4385ac"/><rect x="215.9" y="515.1" width="16.1" height="16.1" fill="#4385ac"/><rect x="215.9" y="530.9" width="16.1" height="16.1" fill="#447cac"/><rect x="215.9" y="546.7" width="16.1" height="16.1" fill="#4472ab"/><rect x="215.9" y="562.5" width="16.1" height="16.1" fill="#447aac"/><rect x="215.9" y="578.3" width="16.1" height="16.1" fill="#4389ab"/><rect x="215.9" y="594.1" width="16.1" height="16.1" fill="#428eab"/><rect x="215.9" y="609.9" width="16.1" height="16.1" fill="#4291ab"/><rect x="215.9" y="625.7" width="16.1" height="16.1" fill="#4291ab"/><rect x="215.9" y="641.5" width="16.1" height="16.1" fill="#4292ab"/><rect x="215.9" y="657.3" width="16.1" height="16.1" fill="#438cab"/><rect x="215.9" y="673.1" width="16.1" height="16.1" fill="#4385ac"/><rect x="215.9" y="688.9" width="16.1" height="16.1" fill="#4479ac"/><rect x="215.9" y="704.7" width="16.1" height="16.1" fill="#4470ab"/><rect x="215.9" y="720.5" width="16.1" height="16.1" fill="#446fab"/><rect x="215.9" y="736.3" width="16.1" height="16.1" fill="#446faa"/><rect x="215.9" y="752.1" width="16.1" height="16.1" fill="#446eaa"/><rect x="215.9" y="767.9" width="16.1" height="16.1" fill="#446eaa"/><rect x="215.9" y="783.7" width="16.1" height="16.1" fill="#4470ab"/><rect x="215.9" y="799.5" width="16.1" height="16.1" fill="#4472ab"/><rect x="215.9" y="815.3" width="16.1" height="16.1" fill="#4470ab"/><rect x="231.7" y="325.5" width="16.1" height="16.1" fill="#447cac"/><rect x="231.7" y="341.3" width="16.1" height="16.1" fill="#447cac"/><rect x="231.7" y="357.1" width="16.1" height="16.1" fill="#4477ab"/><rect x="231.7" y="372.9" width="16.1" height="16.1" fill="#4470ab"/><rect x="231.7" y="388.7" width="16.1" height="16.1" fill="#456aaa"/><rect x="231.7" y="404.5" width="16.1" height="16.1" fill="#4569aa"/><rect x="231.7" y="420.3" width="16.1" height="16.1" fill="#446caa"/><rect x="231.7" y="436.1" width="16.1" height="16.1" fill="#4471ab"/><rect x="231.7" y="451.9" width="16.1" height="16.1" fill="#4474ab"/><rect x="231.7" y="467.7" width="16.1" height="16.1" fill="#4478ac"/><rect x="231.7" y="483.5" width="16.1" height="16.1" fill="#447cac"/><rect x="231.7" y="499.3" width="16.1" height="16.1" fill="#447eac"/><rect x="231.7" y="515.1" width="16.1" height="16.1" fill="#447dac"/><rect x="231.7" y="530.9" width="16.1" height="16.1" fill="#447aac"/><rect x="231.7" y="546.7" width="16.1" height="16.1" fill="#4472ab"/><rect x="231.7" y="562.5" width="16.1" height="16.1" fill="#4479ac"/><rect x="231.7" y="578.3" width="16.1" height="16.1" fill="#4388ab"/><rect x="231.7" y="594.1" width="16.1" height="16.1" fill="#428fab"/><rect x="231.7" y="609.9" width="16.1" height="16.1" fill="#4293ab"/><rect x="231.7" y="625.7" width="16.1" height="16.1" fill="#4199ab"/><rect x="231.7" y="641.5" width="16.1" height="16.1" fill="#419bab"/><rect x="231.7" y="657.3" width="16.1" height="16.1" fill="#4294ab"/><rect x="231.7" y="673.1" width="16.1" height="16.1" fill="#428eab"/><rect x="231.7" y="688.9" width="16.1" height="16.1" fill="#447eac"/><rect x="231.7" y="704.7" width="16.1" height="16.1" fill="#4471ab"/><rect x="231.7" y="720.5" width="16.1" height="16.1" fill="#446faa"/><rect x="231.7" y="736.3" width="16.1" height="16.1" fill="#446daa"/><rect x="231.7" y="752.1" width="16.1" height="16.1" fill="#456baa"/><rect x="231.7" y="767.9" width="16.1" height="16.1" fill="#456aaa"/><rect x="231.7" y="783.7" width="16.1" height="16.1" fill="#446daa"/><rect x="231.7" y="799.5" width="16.1" height="16.1" fill="#446fab"/><rect x="231.7" y="815.3" width="16.1" height="16.1" fill="#446eaa"/><rect x="247.5" y="325.5" width="16.1" height="16.1" fill="#447cac"/><rect x="247.5" y="341.3" width="16.1" height="16.1" fill="#447aac"/><rect x="247.5" y="357.1" width="16.1" height="16.1" fill="#4473ab"/><rect x="247.5" y="372.9" width="16.1" height="16.1" fill="#446daa"/><rect x="247.5" y="388.7" width="16.1" height="16.1" fill="#4567aa"/><rect x="247.5" y="404.5" width="16.1" height="16.1" fill="#4565a9"/><rect x="247.5" y="420.3" width="16.1" height="16.1" fill="#4567aa"/><rect x="247.5" y="436.1" width="16.1" height="16.1" fill="#446daa"/><rect x="247.5" y="451.9" width="16.1" height="16.1" fill="#446fab"/><rect x="247.5" y="467.7" width="16.1" height="16.1" fill="#4473ab"/><rect x="247.5" y="483.5" width="16.1" height="16.1" fill="#4473ab"/><rect x="247.5" y="499.3" width="16.1" height="16.1" fill="#4474ab"/><rect x="247.5" y="515.1" width="16.1" height="16.1" fill="#4473ab"/><rect x="247.5" y="530.9" width="16.1" height="16.1" fill="#4472ab"/><rect x="247.5" y="546.7" width="16.1" height="16.1" fill="#446eaa"/><rect x="247.5" y="562.5" width="16.1" height="16.1" fill="#4474ab"/><rect x="247.5" y="578.3" width="16.1" height="16.1" fill="#447fac"/><rect x="247.5" y="594.1" width="16.1" height="16.1" fill="#428dab"/><rect x="247.5" y="609.9" width="16.1" height="16.1" fill="#419aab"/><rect x="247.5" y="625.7" width="16.1" height="16.1" fill="#41a0aa"/><rect x="247.5" y="641.5" width="16.1" height="16.1" fill="#40a6aa"/><rect x="247.5" y="657.3" width="16.1" height="16.1" fill="#40a1aa"/><rect x="247.5" y="673.1" width="16.1" height="16.1" fill="#4197ab"/><rect x="247.5" y="688.9" width="16.1" height="16.1" fill="#4382ac"/><rect x="247.5" y="704.7" width="16.1" height="16.1" fill="#4470ab"/><rect x="247.5" y="720.5" width="16.1" height="16.1" fill="#446daa"/><rect x="247.5" y="736.3" width="16.1" height="16.1" fill="#446caa"/><rect x="247.5" y="752.1" width="16.1" height="16.1" fill="#4568aa"/><rect x="247.5" y="767.9" width="16.1" height="16.1" fill="#4566a9"/><rect x="247.5" y="783.7" width="16.1" height="16.1" fill="#446baa"/><rect x="247.5" y="799.5" width="16.1" height="16.1" fill="#446daa"/><rect x="247.5" y="815.3" width="16.1" height="16.1" fill="#446daa"/><rect x="263.3" y="325.5" width="16.1" height="16.1" fill="#447bac"/><rect x="263.3" y="341.3" width="16.1" height="16.1" fill="#447bac"/><rect x="263.3" y="357.1" width="16.1" height="16.1" fill="#4472ab"/><rect x="263.3" y="372.9" width="16.1" height="16.1" fill="#446daa"/><rect x="263.3" y="388.7" width="16.1" height="16.1" fill="#4566a9"/><rect x="263.3" y="404.5" width="16.1" height="16.1" fill="#4563a9"/><rect x="263.3" y="420.3" width="16.1" height="16.1" fill="#4566a9"/><rect x="263.3" y="436.1" width="16.1" height="16.1" fill="#456aaa"/><rect x="263.3" y="451.9" width="16.1" height="16.1" fill="#456baa"/><rect x="263.3" y="467.7" width="16.1" height="16.1" fill="#446caa"/><rect x="263.3" y="483.5" width="16.1" height="16.1" fill="#446faa"/><rect x="263.3" y="499.3" width="16.1" height="16.1" fill="#446eaa"/><rect x="263.3" y="515.1" width="16.1" height="16.1" fill="#446daa"/><rect x="263.3" y="530.9" width="16.1" height="16.1" fill="#446caa"/><rect x="263.3" y="546.7" width="16.1" height="16.1" fill="#446baa"/><rect x="263.3" y="562.5" width="16.1" height="16.1" fill="#4473ab"/><rect x="263.3" y="578.3" width="16.1" height="16.1" fill="#447eac"/><rect x="263.3" y="594.1" width="16.1" height="16.1" fill="#4290ab"/><rect x="263.3" y="609.9" width="16.1" height="16.1" fill="#40a4aa"/><rect x="263.3" y="625.7" width="16.1" height="16.1" fill="#42a8a6"/><rect x="263.3" y="641.5" width="16.1" height="16.1" fill="#44aca0"/><rect x="263.3" y="657.3" width="16.1" height="16.1" fill="#42a9a6"/><rect x="263.3" y="673.1" width="16.1" height="16.1" fill="#40a3aa"/><rect x="263.3" y="688.9" width="16.1" height="16.1" fill="#4386ac"/><rect x="263.3" y="704.7" width="16.1" height="16.1" fill="#4471ab"/><rect x="263.3" y="720.5" width="16.1" height="16.1" fill="#446daa"/><rect x="263.3" y="736.3" width="16.1" height="16.1" fill="#446caa"/><rect x="263.3" y="752.1" width="16.1" height="16.1" fill="#4568aa"/><rect x="263.3" y="767.9" width="16.1" height="16.1" fill="#4566a9"/><rect x="263.3" y="783.7" width="16.1" height="16.1" fill="#456aaa"/><rect x="263.3" y="799.5" width="16.1" height="16.1" fill="#446daa"/><rect x="263.3" y="815.3" width="16.1" height="16.1" fill="#456baa"/><rect x="279.1" y="325.5" width="16.1" height="16.1" fill="#447dac"/><rect x="279.1" y="341.3" width="16.1" height="16.1" fill="#447aac"/><rect x="279.1" y="357.1" width="16.1" height="16.1" fill="#4473ab"/><rect x="279.1" y="372.9" width="16.1" height="16.1" fill="#446eaa"/><rect x="279.1" y="388.7" width="16.1" height="16.1" fill="#4568aa"/><rect x="279.1" y="404.5" width="16.1" height="16.1" fill="#4566a9"/><rect x="279.1" y="420.3" width="16.1" height="16.1" fill="#4568aa"/><rect x="279.1" y="436.1" width="16.1" height="16.1" fill="#456aaa"/><rect x="279.1" y="451.9" width="16.1" height="16.1" fill="#456aaa"/><rect x="279.1" y="467.7" width="16.1" height="16.1" fill="#446caa"/><rect x="279.1" y="483.5" width="16.1" height="16.1" fill="#446caa"/><rect x="279.1" y="499.3" width="16.1" height="16.1" fill="#446caa"/><rect x="279.1" y="515.1" width="16.1" height="16.1" fill="#446caa"/><rect x="279.1" y="530.9" width="16.1" height="16.1" fill="#446baa"/><rect x="279.1" y="546.7" width="16.1" height="16.1" fill="#456aaa"/><rect x="279.1" y="562.5" width="16.1" height="16.1" fill="#4476ab"/><rect x="279.1" y="578.3" width="16.1" height="16.1" fill="#4385ac"/><rect x="279.1" y="594.1" width="16.1" height="16.1" fill="#419bab"/><rect x="279.1" y="609.9" width="16.1" height="16.1" fill="#42a9a5"/><rect x="279.1" y="625.7" width="16.1" height="16.1" fill="#46ae9d"/><rect x="279.1" y="641.5" width="16.1" height="16.1" fill="#49b396"/><rect x="279.1" y="657.3" width="16.1" height="16.1" fill="#47b09b"/><rect x="279.1" y="673.1" width="16.1" height="16.1" fill="#44aba2"/><rect x="279.1" y="688.9" width="16.1" height="16.1" fill="#4290ab"/><rect x="279.1" y="704.7" width="16.1" height="16.1" fill="#4471ab"/><rect x="279.1" y="720.5" width="16.1" height="16.1" fill="#446faa"/><rect x="279.1" y="736.3" width="16.1" height="16.1" fill="#446daa"/><rect x="279.1" y="752.1" width="16.1" height="16.1" fill="#456baa"/><rect x="279.1" y="767.9" width="16.1" height="16.1" fill="#4569aa"/><rect x="279.1" y="783.7" width="16.1" height="16.1" fill="#446caa"/><rect x="279.1" y="799.5" width="16.1" height="16.1" fill="#446daa"/><rect x="279.1" y="815.3" width="16.1" height="16.1" fill="#446faa"/><rect x="294.9" y="325.5" width="16.1" height="16.1" fill="#447dac"/><rect x="294.9" y="341.3" width="16.1" height="16.1" fill="#447aac"/><rect x="294.9" y="357.1" width="16.1" height="16.1" fill="#4472ab"/><rect x="294.9" y="372.9" width="16.1" height="16.1" fill="#446faa"/><rect x="294.9" y="388.7" width="16.1" height="16.1" fill="#456aaa"/><rect x="294.9" y="404.5" width="16.1" height="16.1" fill="#4569aa"/><rect x="294.9" y="420.3" width="16.1" height="16.1" fill="#4568aa"/><rect x="294.9" y="436.1" width="16.1" height="16.1" fill="#456aaa"/><rect x="294.9" y="451.9" width="16.1" height="16.1" fill="#446baa"/><rect x="294.9" y="467.7" width="16.1" height="16.1" fill="#446baa"/><rect x="294.9" y="483.5" width="16.1" height="16.1" fill="#4569aa"/><rect x="294.9" y="499.3" width="16.1" height="16.1" fill="#456baa"/><rect x="294.9" y="515.1" width="16.1" height="16.1" fill="#456aaa"/><rect x="294.9" y="530.9" width="16.1" height="16.1" fill="#446caa"/><rect x="294.9" y="546.7" width="16.1" height="16.1" fill="#446daa"/><rect x="294.9" y="562.5" width="16.1" height="16.1" fill="#4479ac"/><rect x="294.9" y="578.3" width="16.1" height="16.1" fill="#438aab"/><rect x="294.9" y="594.1" width="16.1" height="16.1" fill="#419faa"/><rect x="294.9" y="609.9" width="16.1" height="16.1" fill="#44aba2"/><rect x="294.9" y="625.7" width="16.1" height="16.1" fill="#47b09a"/><rect x="294.9" y="641.5" width="16.1" height="16.1" fill="#4eb48d"/><rect x="294.9" y="657.3" width="16.1" height="16.1" fill="#48b298"/><rect x="294.9" y="673.1" width="16.1" height="16.1" fill="#45ad9f"/><rect x="294.9" y="688.9" width="16.1" height="16.1" fill="#4293ab"/><rect x="294.9" y="704.7" width="16.1" height="16.1" fill="#4472ab"/><rect x="294.9" y="720.5" width="16.1" height="16.1" fill="#4471ab"/><rect x="294.9" y="736.3" width="16.1" height="16.1" fill="#446eaa"/><rect x="294.9" y="752.1" width="16.1" height="16.1" fill="#446caa"/><rect x="294.9" y="767.9" width="16.1" height="16.1" fill="#446daa"/><rect x="294.9" y="783.7" width="16.1" height="16.1" fill="#446caa"/><rect x="294.9" y="799.5" width="16.1" height="16.1" fill="#446faa"/><rect x="294.9" y="815.3" width="16.1" height="16.1" fill="#446faa"/><rect x="310.7" y="325.5" width="16.1" height="16.1" fill="#447bac"/><rect x="310.7" y="341.3" width="16.1" height="16.1" fill="#447bac"/><rect x="310.7" y="357.1" width="16.1" height="16.1" fill="#4474ab"/><rect x="310.7" y="372.9" width="16.1" height="16.1" fill="#446eaa"/><rect x="310.7" y="388.7" width="16.1" height="16.1" fill="#446eaa"/><rect x="310.7" y="404.5" width="16.1" height="16.1" fill="#446eaa"/><rect x="310.7" y="420.3" width="16.1" height="16.1" fill="#446caa"/><rect x="310.7" y="436.1" width="16.1" height="16.1" fill="#446daa"/><rect x="310.7" y="451.9" width="16.1" height="16.1" fill="#446daa"/><rect x="310.7" y="467.7" width="16.1" height="16.1" fill="#446eaa"/><rect x="310.7" y="483.5" width="16.1" height="16.1" fill="#446caa"/><rect x="310.7" y="499.3" width="16.1" height="16.1" fill="#446caa"/><rect x="310.7" y="515.1" width="16.1" height="16.1" fill="#446daa"/><rect x="310.7" y="530.9" width="16.1" height="16.1" fill="#4471ab"/><rect x="310.7" y="546.7" width="16.1" height="16.1" fill="#4473ab"/><rect x="310.7" y="562.5" width="16.1" height="16.1" fill="#447eac"/><rect x="310.7" y="578.3" width="16.1" height="16.1" fill="#428dab"/><rect x="310.7" y="594.1" width="16.1" height="16.1" fill="#40a2aa"/><rect x="310.7" y="609.9" width="16.1" height="16.1" fill="#44aca1"/><rect x="310.7" y="625.7" width="16.1" height="16.1" fill="#47b09a"/><rect x="310.7" y="641.5" width="16.1" height="16.1" fill="#49b395"/><rect x="310.7" y="657.3" width="16.1" height="16.1" fill="#48b199"/><rect x="310.7" y="673.1" width="16.1" height="16.1" fill="#45aca0"/><rect x="310.7" y="688.9" width="16.1" height="16.1" fill="#4292ab"/><rect x="310.7" y="704.7" width="16.1" height="16.1" fill="#4472ab"/><rect x="310.7" y="720.5" width="16.1" height="16.1" fill="#4470ab"/><rect x="310.7" y="736.3" width="16.1" height="16.1" fill="#446eaa"/><rect x="310.7" y="752.1" width="16.1" height="16.1" fill="#446baa"/><rect x="310.7" y="767.9" width="16.1" height="16.1" fill="#446caa"/><rect x="310.7" y="783.7" width="16.1" height="16.1" fill="#446eaa"/><rect x="310.7" y="799.5" width="16.1" height="16.1" fill="#446eaa"/><rect x="310.7" y="815.3" width="16.1" height="16.1" fill="#446eaa"/><rect x="326.5" y="325.5" width="16.1" height="16.1" fill="#447cac"/><rect x="326.5" y="341.3" width="16.1" height="16.1" fill="#4479ac"/><rect x="326.5" y="357.1" width="16.1" height="16.1" fill="#4473ab"/><rect x="326.5" y="372.9" width="16.1" height="16.1" fill="#446eaa"/><rect x="326.5" y="388.7" width="16.1" height="16.1" fill="#446daa"/><rect x="326.5" y="404.5" width="16.1" height="16.1" fill="#446eaa"/><rect x="326.5" y="420.3" width="16.1" height="16.1" fill="#446faa"/><rect x="326.5" y="436.1" width="16.1" height="16.1" fill="#446eaa"/><rect x="326.5" y="451.9" width="16.1" height="16.1" fill="#446faa"/><rect x="326.5" y="467.7" width="16.1" height="16.1" fill="#446eaa"/><rect x="326.5" y="483.5" width="16.1" height="16.1" fill="#446caa"/><rect x="326.5" y="499.3" width="16.1" height="16.1" fill="#446caa"/><rect x="326.5" y="515.1" width="16.1" height="16.1" fill="#446eaa"/><rect x="326.5" y="530.9" width="16.1" height="16.1" fill="#4472ab"/><rect x="326.5" y="546.7" width="16.1" height="16.1" fill="#4477ab"/><rect x="326.5" y="562.5" width="16.1" height="16.1" fill="#4382ac"/><rect x="326.5" y="578.3" width="16.1" height="16.1" fill="#4290ab"/><rect x="326.5" y="594.1" width="16.1" height="16.1" fill="#40a2aa"/><rect x="326.5" y="609.9" width="16.1" height="16.1" fill="#44aba1"/><rect x="326.5" y="625.7" width="16.1" height="16.1" fill="#46ae9d"/><rect x="326.5" y="641.5" width="16.1" height="16.1" fill="#48b198"/><rect x="326.5" y="657.3" width="16.1" height="16.1" fill="#46ae9e"/><rect x="326.5" y="673.1" width="16.1" height="16.1" fill="#43aaa3"/><rect x="326.5" y="688.9" width="16.1" height="16.1" fill="#428dab"/><rect x="326.5" y="704.7" width="16.1" height="16.1" fill="#4470ab"/><rect x="326.5" y="720.5" width="16.1" height="16.1" fill="#446faa"/><rect x="326.5" y="736.3" width="16.1" height="16.1" fill="#446eaa"/><rect x="326.5" y="752.1" width="16.1" height="16.1" fill="#446daa"/><rect x="326.5" y="767.9" width="16.1" height="16.1" fill="#446caa"/><rect x="326.5" y="783.7" width="16.1" height="16.1" fill="#446daa"/><rect x="326.5" y="799.5" width="16.1" height="16.1" fill="#446eaa"/><rect x="326.5" y="815.3" width="16.1" height="16.1" fill="#446eaa"/><rect x="342.3" y="325.5" width="16.1" height="16.1" fill="#447cac"/><rect x="342.3" y="341.3" width="16.1" height="16.1" fill="#4479ac"/><rect x="342.3" y="357.1" width="16.1" height="16.1" fill="#4474ab"/><rect x="342.3" y="372.9" width="16.1" height="16.1" fill="#446eaa"/><rect x="342.3" y="388.7" width="16.1" height="16.1" fill="#4470ab"/><rect x="342.3" y="404.5" width="16.1" height="16.1" fill="#446fab"/><rect x="342.3" y="420.3" width="16.1" height="16.1" fill="#446daa"/><rect x="342.3" y="436.1" width="16.1" height="16.1" fill="#446eaa"/><rect x="342.3" y="451.9" width="16.1" height="16.1" fill="#446faa"/><rect x="342.3" y="467.7" width="16.1" height="16.1" fill="#446eaa"/><rect x="342.3" y="483.5" width="16.1" height="16.1" fill="#446baa"/><rect x="342.3" y="499.3" width="16.1" height="16.1" fill="#446caa"/><rect x="342.3" y="515.1" width="16.1" height="16.1" fill="#446daa"/><rect x="342.3" y="530.9" width="16.1" height="16.1" fill="#4474ab"/><rect x="342.3" y="546.7" width="16.1" height="16.1" fill="#4479ac"/><rect x="342.3" y="562.5" width="16.1" height="16.1" fill="#4384ac"/><rect x="342.3" y="578.3" width="16.1" height="16.1" fill="#428eab"/><rect x="342.3" y="594.1" width="16.1" height="16.1" fill="#40a1aa"/><rect x="342.3" y="609.9" width="16.1" height="16.1" fill="#43aba2"/><rect x="342.3" y="625.7" width="16.1" height="16.1" fill="#44aca0"/><rect x="342.3" y="641.5" width="16.1" height="16.1" fill="#46ae9d"/><rect x="342.3" y="657.3" width="16.1" height="16.1" fill="#44aba2"/><rect x="342.3" y="673.1" width="16.1" height="16.1" fill="#41a8a7"/><rect x="342.3" y="688.9" width="16.1" height="16.1" fill="#438bab"/><rect x="342.3" y="704.7" width="16.1" height="16.1" fill="#4471ab"/><rect x="342.3" y="720.5" width="16.1" height="16.1" fill="#4471ab"/><rect x="342.3" y="736.3" width="16.1" height="16.1" fill="#446eaa"/><rect x="342.3" y="752.1" width="16.1" height="16.1" fill="#446baa"/><rect x="342.3" y="767.9" width="16.1" height="16.1" fill="#456aaa"/><rect x="342.3" y="783.7" width="16.1" height="16.1" fill="#446daa"/><rect x="342.3" y="799.5" width="16.1" height="16.1" fill="#446eaa"/><rect x="342.3" y="815.3" width="16.1" height="16.1" fill="#446eaa"/><rect x="358.1" y="325.5" width="16.1" height="16.1" fill="#447eac"/><rect x="358.1" y="341.3" width="16.1" height="16.1" fill="#447cac"/><rect x="358.1" y="357.1" width="16.1" height="16.1" fill="#4476ab"/><rect x="358.1" y="372.9" width="16.1" height="16.1" fill="#4473ab"/><rect x="358.1" y="388.7" width="16.1" height="16.1" fill="#4470ab"/><rect x="358.1" y="404.5" width="16.1" height="16.1" fill="#4471ab"/><rect x="358.1" y="420.3" width="16.1" height="16.1" fill="#4470ab"/><rect x="358.1" y="436.1" width="16.1" height="16.1" fill="#446daa"/><rect x="358.1" y="451.9" width="16.1" height="16.1" fill="#446faa"/><rect x="358.1" y="467.7" width="16.1" height="16.1" fill="#446daa"/><rect x="358.1" y="483.5" width="16.1" height="16.1" fill="#446caa"/><rect x="358.1" y="499.3" width="16.1" height="16.1" fill="#446caa"/><rect x="358.1" y="515.1" width="16.1" height="16.1" fill="#446eaa"/><rect x="358.1" y="530.9" width="16.1" height="16.1" fill="#4475ab"/><rect x="358.1" y="546.7" width="16.1" height="16.1" fill="#4382ac"/><rect x="358.1" y="562.5" width="16.1" height="16.1" fill="#438bab"/><rect x="358.1" y="578.3" width="16.1" height="16.1" fill="#4296ab"/><rect x="358.1" y="594.1" width="16.1" height="16.1" fill="#40a3aa"/><rect x="358.1" y="609.9" width="16.1" height="16.1" fill="#42a9a5"/><rect x="358.1" y="625.7" width="16.1" height="16.1" fill="#41a8a8"/><rect x="358.1" y="641.5" width="16.1" height="16.1" fill="#40a5aa"/><rect x="358.1" y="657.3" width="16.1" height="16.1" fill="#41a1aa"/><rect x="358.1" y="673.1" width="16.1" height="16.1" fill="#4197ab"/><rect x="358.1" y="688.9" width="16.1" height="16.1" fill="#4382ac"/><rect x="358.1" y="704.7" width="16.1" height="16.1" fill="#446faa"/><rect x="358.1" y="720.5" width="16.1" height="16.1" fill="#446daa"/><rect x="358.1" y="736.3" width="16.1" height="16.1" fill="#446daa"/><rect x="358.1" y="752.1" width="16.1" height="16.1" fill="#456aaa"/><rect x="358.1" y="767.9" width="16.1" height="16.1" fill="#456aaa"/><rect x="358.1" y="783.7" width="16.1" height="16.1" fill="#446daa"/><rect x="358.1" y="799.5" width="16.1" height="16.1" fill="#446eaa"/><rect x="358.1" y="815.3" width="16.1" height="16.1" fill="#446eaa"/><rect x="373.9" y="325.5" width="16.1" height="16.1" fill="#4383ac"/><rect x="373.9" y="341.3" width="16.1" height="16.1" fill="#4382ac"/><rect x="373.9" y="357.1" width="16.1" height="16.1" fill="#447dac"/><rect x="373.9" y="372.9" width="16.1" height="16.1" fill="#4479ac"/><rect x="373.9" y="388.7" width="16.1" height="16.1" fill="#4476ab"/><rect x="373.9" y="404.5" width="16.1" height="16.1" fill="#4472ab"/><rect x="373.9" y="420.3" width="16.1" height="16.1" fill="#4470ab"/><rect x="373.9" y="436.1" width="16.1" height="16.1" fill="#446eaa"/><rect x="373.9" y="451.9" width="16.1" height="16.1" fill="#446daa"/><rect x="373.9" y="467.7" width="16.1" height="16.1" fill="#446caa"/><rect x="373.9" y="483.5" width="16.1" height="16.1" fill="#456baa"/><rect x="373.9" y="499.3" width="16.1" height="16.1" fill="#446baa"/><rect x="373.9" y="515.1" width="16.1" height="16.1" fill="#446faa"/><rect x="373.9" y="530.9" width="16.1" height="16.1" fill="#4478ac"/><rect x="373.9" y="546.7" width="16.1" height="16.1" fill="#438aab"/><rect x="373.9" y="562.5" width="16.1" height="16.1" fill="#4295ab"/><rect x="373.9" y="578.3" width="16.1" height="16.1" fill="#41a0aa"/><rect x="373.9" y="594.1" width="16.1" height="16.1" fill="#41a7a9"/><rect x="373.9" y="609.9" width="16.1" height="16.1" fill="#42a9a5"/><rect x="373.9" y="625.7" width="16.1" height="16.1" fill="#419aab"/><rect x="373.9" y="641.5" width="16.1" height="16.1" fill="#4385ac"/><rect x="373.9" y="657.3" width="16.1" height="16.1" fill="#4480ac"/><rect x="373.9" y="673.1" width="16.1" height="16.1" fill="#447dac"/><rect x="373.9" y="688.9" width="16.1" height="16.1" fill="#4474ab"/><rect x="373.9" y="704.7" width="16.1" height="16.1" fill="#446baa"/><rect x="373.9" y="720.5" width="16.1" height="16.1" fill="#456aaa"/><rect x="373.9" y="736.3" width="16.1" height="16.1" fill="#4569aa"/><rect x="373.9" y="752.1" width="16.1" height="16.1" fill="#456aaa"/><rect x="373.9" y="767.9" width="16.1" height="16.1" fill="#4569aa"/><rect x="373.9" y="783.7" width="16.1" height="16.1" fill="#456aaa"/><rect x="373.9" y="799.5" width="16.1" height="16.1" fill="#446daa"/><rect x="373.9" y="815.3" width="16.1" height="16.1" fill="#446daa"/><rect x="389.7" y="325.5" width="16.1" height="16.1" fill="#428eab"/><rect x="389.7" y="341.3" width="16.1" height="16.1" fill="#438bab"/><rect x="389.7" y="357.1" width="16.1" height="16.1" fill="#4386ac"/><rect x="389.7" y="372.9" width="16.1" height="16.1" fill="#4381ac"/><rect x="389.7" y="388.7" width="16.1" height="16.1" fill="#447eac"/><rect x="389.7" y="404.5" width="16.1" height="16.1" fill="#447aac"/><rect x="389.7" y="420.3" width="16.1" height="16.1" fill="#4477ab"/><rect x="389.7" y="436.1" width="16.1" height="16.1" fill="#4474ab"/><rect x="389.7" y="451.9" width="16.1" height="16.1" fill="#4473ab"/><rect x="389.7" y="467.7" width="16.1" height="16.1" fill="#4473ab"/><rect x="389.7" y="483.5" width="16.1" height="16.1" fill="#4473ab"/><rect x="389.7" y="499.3" width="16.1" height="16.1" fill="#4475ab"/><rect x="389.7" y="515.1" width="16.1" height="16.1" fill="#4479ac"/><rect x="389.7" y="530.9" width="16.1" height="16.1" fill="#4388ab"/><rect x="389.7" y="546.7" width="16.1" height="16.1" fill="#4199ab"/><rect x="389.7" y="562.5" width="16.1" height="16.1" fill="#40a2aa"/><rect x="389.7" y="578.3" width="16.1" height="16.1" fill="#40a7a9"/><rect x="389.7" y="594.1" width="16.1" height="16.1" fill="#41a8a8"/><rect x="389.7" y="609.9" width="16.1" height="16.1" fill="#42a9a6"/><rect x="389.7" y="625.7" width="16.1" height="16.1" fill="#4197ab"/><rect x="389.7" y="641.5" width="16.1" height="16.1" fill="#4381ac"/><rect x="389.7" y="657.3" width="16.1" height="16.1" fill="#447dac"/><rect x="389.7" y="673.1" width="16.1" height="16.1" fill="#447aac"/><rect x="389.7" y="688.9" width="16.1" height="16.1" fill="#4473ab"/><rect x="389.7" y="704.7" width="16.1" height="16.1" fill="#446faa"/><rect x="389.7" y="720.5" width="16.1" height="16.1" fill="#446daa"/><rect x="389.7" y="736.3" width="16.1" height="16.1" fill="#446caa"/><rect x="389.7" y="752.1" width="16.1" height="16.1" fill="#446baa"/><rect x="389.7" y="767.9" width="16.1" height="16.1" fill="#446caa"/><rect x="389.7" y="783.7" width="16.1" height="16.1" fill="#446daa"/><rect x="389.7" y="799.5" width="16.1" height="16.1" fill="#446eaa"/><rect x="389.7" y="815.3" width="16.1" height="16.1" fill="#446caa"/><rect x="405.5" y="325.5" width="16.1" height="16.1" fill="#419caa"/><rect x="405.5" y="341.3" width="16.1" height="16.1" fill="#419caa"/><rect x="405.5" y="357.1" width="16.1" height="16.1" fill="#4296ab"/><rect x="405.5" y="372.9" width="16.1" height="16.1" fill="#4290ab"/><rect x="405.5" y="388.7" width="16.1" height="16.1" fill="#428dab"/><rect x="405.5" y="404.5" width="16.1" height="16.1" fill="#4387ab"/><rect x="405.5" y="420.3" width="16.1" height="16.1" fill="#4384ac"/><rect x="405.5" y="436.1" width="16.1" height="16.1" fill="#4382ac"/><rect x="405.5" y="451.9" width="16.1" height="16.1" fill="#4480ac"/><rect x="405.5" y="467.7" width="16.1" height="16.1" fill="#447fac"/><rect x="405.5" y="483.5" width="16.1" height="16.1" fill="#4481ac"/><rect x="405.5" y="499.3" width="16.1" height="16.1" fill="#4385ac"/><rect x="405.5" y="515.1" width="16.1" height="16.1" fill="#428eab"/><rect x="405.5" y="530.9" width="16.1" height="16.1" fill="#419caa"/><rect x="405.5" y="546.7" width="16.1" height="16.1" fill="#42a8a6"/><rect x="405.5" y="562.5" width="16.1" height="16.1" fill="#43aaa4"/><rect x="405.5" y="578.3" width="16.1" height="16.1" fill="#43aaa4"/><rect x="405.5" y="594.1" width="16.1" height="16.1" fill="#42a9a5"/><rect x="405.5" y="609.9" width="16.1" height="16.1" fill="#41a8a7"/><rect x="405.5" y="625.7" width="16.1" height="16.1" fill="#419faa"/><rect x="405.5" y="641.5" width="16.1" height="16.1" fill="#4290ab"/><rect x="405.5" y="657.3" width="16.1" height="16.1" fill="#4389ab"/><rect x="405.5" y="673.1" width="16.1" height="16.1" fill="#4480ac"/><rect x="405.5" y="688.9" width="16.1" height="16.1" fill="#447cac"/><rect x="405.5" y="704.7" width="16.1" height="16.1" fill="#4475ab"/><rect x="405.5" y="720.5" width="16.1" height="16.1" fill="#4475ab"/><rect x="405.5" y="736.3" width="16.1" height="16.1" fill="#4472ab"/><rect x="405.5" y="752.1" width="16.1" height="16.1" fill="#4470ab"/><rect x="405.5" y="767.9" width="16.1" height="16.1" fill="#446fab"/><rect x="405.5" y="783.7" width="16.1" height="16.1" fill="#4470ab"/><rect x="405.5" y="799.5" width="16.1" height="16.1" fill="#4471ab"/><rect x="405.5" y="815.3" width="16.1" height="16.1" fill="#4471ab"/><rect x="421.3" y="325.5" width="16.1" height="16.1" fill="#419caa"/><rect x="421.3" y="341.3" width="16.1" height="16.1" fill="#419bab"/><rect x="421.3" y="357.1" width="16.1" height="16.1" fill="#4198ab"/><rect x="421.3" y="372.9" width="16.1" height="16.1" fill="#4294ab"/><rect x="421.3" y="388.7" width="16.1" height="16.1" fill="#4291ab"/><rect x="421.3" y="404.5" width="16.1" height="16.1" fill="#428dab"/><rect x="421.3" y="420.3" width="16.1" height="16.1" fill="#438bab"/><rect x="421.3" y="436.1" width="16.1" height="16.1" fill="#4387ab"/><rect x="421.3" y="451.9" width="16.1" height="16.1" fill="#4386ac"/><rect x="421.3" y="467.7" width="16.1" height="16.1" fill="#4386ac"/><rect x="421.3" y="483.5" width="16.1" height="16.1" fill="#4389ab"/><rect x="421.3" y="499.3" width="16.1" height="16.1" fill="#428fab"/><rect x="421.3" y="515.1" width="16.1" height="16.1" fill="#419bab"/><rect x="421.3" y="530.9" width="16.1" height="16.1" fill="#40a5aa"/><rect x="421.3" y="546.7" width="16.1" height="16.1" fill="#43aaa4"/><rect x="421.3" y="562.5" width="16.1" height="16.1" fill="#42a9a5"/><rect x="421.3" y="578.3" width="16.1" height="16.1" fill="#42a9a5"/><rect x="421.3" y="594.1" width="16.1" height="16.1" fill="#41a7a8"/><rect x="421.3" y="609.9" width="16.1" height="16.1" fill="#40a4aa"/><rect x="421.3" y="625.7" width="16.1" height="16.1" fill="#419bab"/><rect x="421.3" y="641.5" width="16.1" height="16.1" fill="#4294ab"/><rect x="421.3" y="657.3" width="16.1" height="16.1" fill="#428cab"/><rect x="421.3" y="673.1" width="16.1" height="16.1" fill="#4384ac"/><rect x="421.3" y="688.9" width="16.1" height="16.1" fill="#447dac"/><rect x="421.3" y="704.7" width="16.1" height="16.1" fill="#447aac"/><rect x="421.3" y="720.5" width="16.1" height="16.1" fill="#4478ac"/><rect x="421.3" y="736.3" width="16.1" height="16.1" fill="#4474ab"/><rect x="421.3" y="752.1" width="16.1" height="16.1" fill="#4472ab"/><rect x="421.3" y="767.9" width="16.1" height="16.1" fill="#4472ab"/><rect x="421.3" y="783.7" width="16.1" height="16.1" fill="#4472ab"/><rect x="421.3" y="799.5" width="16.1" height="16.1" fill="#4472ab"/><rect x="421.3" y="815.3" width="16.1" height="16.1" fill="#4471ab"/><rect x="437.1" y="325.5" width="16.1" height="16.1" fill="#4198ab"/><rect x="437.1" y="341.3" width="16.1" height="16.1" fill="#4197ab"/><rect x="437.1" y="357.1" width="16.1" height="16.1" fill="#4296ab"/><rect x="437.1" y="372.9" width="16.1" height="16.1" fill="#4293ab"/><rect x="437.1" y="388.7" width="16.1" height="16.1" fill="#4293ab"/><rect x="437.1" y="404.5" width="16.1" height="16.1" fill="#428fab"/><rect x="437.1" y="420.3" width="16.1" height="16.1" fill="#428fab"/><rect x="437.1" y="436.1" width="16.1" height="16.1" fill="#428cab"/><rect x="437.1" y="451.9" width="16.1" height="16.1" fill="#438bab"/><rect x="437.1" y="467.7" width="16.1" height="16.1" fill="#428dab"/><rect x="437.1" y="483.5" width="16.1" height="16.1" fill="#428cab"/><rect x="437.1" y="499.3" width="16.1" height="16.1" fill="#4295ab"/><rect x="437.1" y="515.1" width="16.1" height="16.1" fill="#419eaa"/><rect x="437.1" y="530.9" width="16.1" height="16.1" fill="#40a5aa"/><rect x="437.1" y="546.7" width="16.1" height="16.1" fill="#42a8a6"/><rect x="437.1" y="562.5" width="16.1" height="16.1" fill="#41a8a8"/><rect x="437.1" y="578.3" width="16.1" height="16.1" fill="#40a5aa"/><rect x="437.1" y="594.1" width="16.1" height="16.1" fill="#40a2aa"/><rect x="437.1" y="609.9" width="16.1" height="16.1" fill="#419bab"/><rect x="437.1" y="625.7" width="16.1" height="16.1" fill="#4197ab"/><rect x="437.1" y="641.5" width="16.1" height="16.1" fill="#4291ab"/><rect x="437.1" y="657.3" width="16.1" height="16.1" fill="#428cab"/><rect x="437.1" y="673.1" width="16.1" height="16.1" fill="#4383ac"/><rect x="437.1" y="688.9" width="16.1" height="16.1" fill="#447eac"/><rect x="437.1" y="704.7" width="16.1" height="16.1" fill="#447aac"/><rect x="437.1" y="720.5" width="16.1" height="16.1" fill="#4478ac"/><rect x="437.1" y="736.3" width="16.1" height="16.1" fill="#4477ab"/><rect x="437.1" y="752.1" width="16.1" height="16.1" fill="#4475ab"/><rect x="437.1" y="767.9" width="16.1" height="16.1" fill="#4474ab"/><rect x="437.1" y="783.7" width="16.1" height="16.1" fill="#4473ab"/><rect x="437.1" y="799.5" width="16.1" height="16.1" fill="#4473ab"/><rect x="437.1" y="815.3" width="16.1" height="16.1" fill="#4471ab"/><rect x="452.9" y="325.5" width="16.1" height="16.1" fill="#4294ab"/><rect x="452.9" y="341.3" width="16.1" height="16.1" fill="#4196ab"/><rect x="452.9" y="357.1" width="16.1" height="16.1" fill="#4296ab"/><rect x="452.9" y="372.9" width="16.1" height="16.1" fill="#4293ab"/><rect x="452.9" y="388.7" width="16.1" height="16.1" fill="#4293ab"/><rect x="452.9" y="404.5" width="16.1" height="16.1" fill="#4290ab"/><rect x="452.9" y="420.3" width="16.1" height="16.1" fill="#428fab"/><rect x="452.9" y="436.1" width="16.1" height="16.1" fill="#428eab"/><rect x="452.9" y="451.9" width="16.1" height="16.1" fill="#428cab"/><rect x="452.9" y="467.7" width="16.1" height="16.1" fill="#428cab"/><rect x="452.9" y="483.5" width="16.1" height="16.1" fill="#428eab"/><rect x="452.9" y="499.3" width="16.1" height="16.1" fill="#4295ab"/><rect x="452.9" y="515.1" width="16.1" height="16.1" fill="#41a0aa"/><rect x="452.9" y="530.9" width="16.1" height="16.1" fill="#40a5aa"/><rect x="452.9" y="546.7" width="16.1" height="16.1" fill="#42a9a6"/><rect x="452.9" y="562.5" width="16.1" height="16.1" fill="#41a7a9"/><rect x="452.9" y="578.3" width="16.1" height="16.1" fill="#40a2aa"/><rect x="452.9" y="594.1" width="16.1" height="16.1" fill="#419faa"/><rect x="452.9" y="609.9" width="16.1" height="16.1" fill="#419bab"/><rect x="452.9" y="625.7" width="16.1" height="16.1" fill="#4295ab"/><rect x="452.9" y="641.5" width="16.1" height="16.1" fill="#4290ab"/><rect x="452.9" y="657.3" width="16.1" height="16.1" fill="#438aab"/><rect x="452.9" y="673.1" width="16.1" height="16.1" fill="#4384ac"/><rect x="452.9" y="688.9" width="16.1" height="16.1" fill="#4481ac"/><rect x="452.9" y="704.7" width="16.1" height="16.1" fill="#447bac"/><rect x="452.9" y="720.5" width="16.1" height="16.1" fill="#4479ac"/><rect x="452.9" y="736.3" width="16.1" height="16.1" fill="#4477ab"/><rect x="452.9" y="752.1" width="16.1" height="16.1" fill="#4474ab"/><rect x="452.9" y="767.9" width="16.1" height="16.1" fill="#4473ab"/><rect x="452.9" y="783.7" width="16.1" height="16.1" fill="#4473ab"/><rect x="452.9" y="799.5" width="16.1" height="16.1" fill="#4472ab"/><rect x="452.9" y="815.3" width="16.1" height="16.1" fill="#4471ab"/></g><g clip-path="url(#mc)"><rect x="97.1" y="361.0" width="1.4" height="1.4" fill="#b4c6e6" fill-opacity="0.3"/><rect x="97.1" y="377.1" width="1.4" height="1.4" fill="#b4c6e6" fill-opacity="0.3"/><rect x="97.1" y="393.2" width="1.4" height="1.4" fill="#b4c6e6" fill-opacity="0.3"/><rect x="97.1" y="409.3" width="1.4" height="1.4" fill="#b4c6e6" fill-opacity="0.3"/><rect x="97.1" y="425.4" width="1.4" height="1.4" fill="#b4c6e6" fill-opacity="0.3"/><rect x="97.1" y="441.5" width="1.4" height="1.4" fill="#b4c6e6" fill-opacity="0.3"/><rect x="97.1" y="457.6" width="1.4" height="1.4" fill="#b4c6e6" fill-opacity="0.3"/><rect x="97.1" y="473.7" width="1.4" height="1.4" fill="#b4c6e6" fill-opacity="0.3"/><rect x="97.1" y="489.8" width="1.4" height="1.4" fill="#b4c6e6" fill-opacity="0.3"/><rect x="97.1" y="505.9" width="1.4" height="1.4" fill="#b4c6e6" fill-opacity="0.3"/><rect x="97.1" y="522.0" width="1.4" height="1.4" fill="#b4c6e6" fill-opacity="0.3"/><rect x="97.1" y="538.1" width="1.4" height="1.4" fill="#b4c6e6" fill-opacity="0.3"/><rect x="97.1" y="554.2" width="1.4" height="1.4" fill="#b4c6e6" fill-opacity="0.3"/><rect x="97.1" y="570.3" width="1.4" height="1.4" fill="#b4c6e6" fill-opacity="0.3"/><rect x="97.1" y="586.4" width="1.4" height="1.4" fill="#b4c6e6" fill-opacity="0.3"/><rect x="97.1" y="602.5" width="1.4" height="1.4" fill="#b4c6e6" fill-opacity="0.3"/><rect x="97.1" y="618.6" width="1.4" height="1.4" fill="#b4c6e6" fill-opacity="0.3"/><rect x="97.1" y="634.7" width="1.4" height="1.4" fill="#b4c6e6" fill-opacity="0.3"/><rect x="97.1" y="650.8" width="1.4" height="1.4" fill="#b4c6e6" fill-opacity="0.3"/><rect x="97.1" y="666.9" width="1.4" height="1.4" fill="#b4c6e6" fill-opacity="0.3"/><rect x="97.1" y="683.0" width="1.4" height="1.4" fill="#b4c6e6" fill-opacity="0.3"/><rect x="97.1" y="699.1" width="1.4" height="1.4" fill="#b4c6e6" fill-opacity="0.3"/><rect x="97.1" y="715.2" width="1.4" height="1.4" fill="#b4c6e6" fill-opacity="0.3"/><rect x="97.1" y="731.3" width="1.4" height="1.4" fill="#b4c6e6" fill-opacity="0.3"/><rect x="97.1" y="747.4" width="1.4" height="1.4" fill="#b4c6e6" fill-opacity="0.3"/><rect x="97.1" y="763.5" width="1.4" height="1.4" fill="#b4c6e6" fill-opacity="0.3"/><rect x="97.1" y="779.6" width="1.4" height="1.4" fill="#b4c6e6" fill-opacity="0.3"/><rect x="97.1" y="795.7" width="1.4" height="1.4" fill="#b4c6e6" fill-opacity="0.3"/><polygon points="96.4,814.1 96.9,811.5 96.1,811.4 96.2,810.4 100.0,811.1 99.8,812.0 99.0,811.9 98.6,814.5" fill="#b9cbea" fill-opacity="0.6"/><rect x="112.8" y="361.0" width="1.4" height="1.4" fill="#b4c6e6" fill-opacity="0.3"/><rect x="112.8" y="377.1" width="1.4" height="1.4" fill="#b4c6e6" fill-opacity="0.3"/><rect x="112.8" y="393.2" width="1.4" height="1.4" fill="#b4c6e6" fill-opacity="0.3"/><rect x="112.8" y="409.3" width="1.4" height="1.4" fill="#b4c6e6" fill-opacity="0.3"/><rect x="112.8" y="425.4" width="1.4" height="1.4" fill="#b4c6e6" fill-opacity="0.3"/><rect x="112.8" y="441.5" width="1.4" height="1.4" fill="#b4c6e6" fill-opacity="0.3"/><rect x="112.8" y="457.6" width="1.4" height="1.4" fill="#b4c6e6" fill-opacity="0.3"/><rect x="112.8" y="473.7" width="1.4" height="1.4" fill="#b4c6e6" fill-opacity="0.3"/><rect x="112.8" y="489.8" width="1.4" height="1.4" fill="#b4c6e6" fill-opacity="0.3"/><rect x="112.8" y="505.9" width="1.4" height="1.4" fill="#b4c6e6" fill-opacity="0.3"/><rect x="112.8" y="522.0" width="1.4" height="1.4" fill="#b4c6e6" fill-opacity="0.3"/><rect x="112.8" y="538.1" width="1.4" height="1.4" fill="#b4c6e6" fill-opacity="0.3"/><rect x="112.8" y="554.2" width="1.4" height="1.4" fill="#b4c6e6" fill-opacity="0.3"/><rect x="112.8" y="570.3" width="1.4" height="1.4" fill="#b4c6e6" fill-opacity="0.3"/><rect x="112.8" y="586.4" width="1.4" height="1.4" fill="#b4c6e6" fill-opacity="0.3"/><rect x="112.8" y="602.5" width="1.4" height="1.4" fill="#b4c6e6" fill-opacity="0.3"/><polygon points="111.9,701.1 112.8,698.7 112.0,698.4 112.4,697.5 116.0,698.8 115.6,699.7 114.9,699.4 114.0,701.9" fill="#b9cbea" fill-opacity="0.6"/><rect x="112.8" y="715.2" width="1.4" height="1.4" fill="#b4c6e6" fill-opacity="0.3"/><rect x="112.8" y="731.3" width="1.4" height="1.4" fill="#b4c6e6" fill-opacity="0.3"/><rect x="112.8" y="747.4" width="1.4" height="1.4" fill="#b4c6e6" fill-opacity="0.3"/><rect x="112.8" y="763.5" width="1.4" height="1.4" fill="#b4c6e6" fill-opacity="0.3"/><rect x="112.8" y="779.6" width="1.4" height="1.4" fill="#b4c6e6" fill-opacity="0.3"/><rect x="112.8" y="795.7" width="1.4" height="1.4" fill="#b4c6e6" fill-opacity="0.3"/><polygon points="112.2,814.1 112.6,811.5 111.8,811.4 112.0,810.4 115.7,811.1 115.6,812.0 114.8,811.9 114.3,814.5" fill="#b9cbea" fill-opacity="0.6"/><rect x="128.6" y="361.0" width="1.4" height="1.4" fill="#b4c6e6" fill-opacity="0.3"/><polygon points="128.2,381.6 128.2,376.1 127.4,376.1 127.4,374.1 131.2,374.1 131.2,376.1 130.4,376.1 130.4,381.6" fill="#d5dde9" fill-opacity="0.85"/><polygon points="128.2,397.6 128.2,392.1 127.4,392.1 127.4,390.1 131.2,390.1 131.2,392.1 130.4,392.1 130.4,397.6" fill="#d5dde9" fill-opacity="0.85"/><polygon points="128.2,413.8 128.2,408.2 127.4,408.2 127.4,406.2 131.2,406.2 131.2,408.2 130.4,408.2 130.4,413.8" fill="#d5dde9" fill-opacity="0.85"/><polygon points="128.2,429.9 128.2,424.4 127.4,424.4 127.4,422.4 131.2,422.4 131.2,424.4 130.4,424.4 130.4,429.9" fill="#d5dde9" fill-opacity="0.85"/><polygon points="128.2,446.0 128.2,440.5 127.4,440.5 127.4,438.5 131.2,438.5 131.2,440.5 130.4,440.5 130.4,446.0" fill="#d5dde9" fill-opacity="0.85"/><polygon points="128.2,462.1 128.2,456.6 127.4,456.6 127.4,454.6 131.2,454.6 131.2,456.6 130.4,456.6 130.4,462.1" fill="#d5dde9" fill-opacity="0.85"/><polygon points="128.2,478.1 128.2,472.6 127.4,472.6 127.4,470.6 131.2,470.6 131.2,472.6 130.4,472.6 130.4,478.1" fill="#d5dde9" fill-opacity="0.85"/><polygon points="128.2,494.2 128.2,488.8 127.4,488.8 127.4,486.8 131.2,486.8 131.2,488.8 130.4,488.8 130.4,494.2" fill="#d5dde9" fill-opacity="0.85"/><rect x="128.6" y="505.9" width="1.4" height="1.4" fill="#b4c6e6" fill-opacity="0.3"/><rect x="128.6" y="522.0" width="1.4" height="1.4" fill="#b4c6e6" fill-opacity="0.3"/><rect x="128.6" y="538.1" width="1.4" height="1.4" fill="#b4c6e6" fill-opacity="0.3"/><rect x="128.6" y="554.2" width="1.4" height="1.4" fill="#b4c6e6" fill-opacity="0.3"/><rect x="128.6" y="570.3" width="1.4" height="1.4" fill="#b4c6e6" fill-opacity="0.3"/><rect x="128.6" y="586.4" width="1.4" height="1.4" fill="#b4c6e6" fill-opacity="0.3"/><rect x="128.6" y="602.5" width="1.4" height="1.4" fill="#b4c6e6" fill-opacity="0.3"/><polygon points="127.9,701.4 128.4,698.8 127.6,698.7 127.7,697.7 131.5,698.4 131.3,699.3 130.5,699.2 130.1,701.8" fill="#b9cbea" fill-opacity="0.6"/><polygon points="128.5,717.9 128.1,715.3 127.3,715.4 127.1,714.5 130.9,713.8 131.0,714.8 130.2,714.9 130.7,717.5" fill="#b9cbea" fill-opacity="0.6"/><rect x="128.6" y="731.3" width="1.4" height="1.4" fill="#b4c6e6" fill-opacity="0.3"/><rect x="128.6" y="747.4" width="1.4" height="1.4" fill="#b4c6e6" fill-opacity="0.3"/><rect x="128.6" y="763.5" width="1.4" height="1.4" fill="#b4c6e6" fill-opacity="0.3"/><rect x="128.6" y="779.6" width="1.4" height="1.4" fill="#b4c6e6" fill-opacity="0.3"/><rect x="128.6" y="795.7" width="1.4" height="1.4" fill="#b4c6e6" fill-opacity="0.3"/><polygon points="128.2,814.3 128.2,811.7 127.4,811.7 127.4,810.7 131.2,810.7 131.2,811.7 130.4,811.7 130.4,814.3" fill="#b9cbea" fill-opacity="0.6"/><polygon points="144.0,365.4 144.0,359.9 143.2,359.9 143.2,357.9 147.0,357.9 147.0,359.9 146.2,359.9 146.2,365.4" fill="#d5dde9" fill-opacity="0.85"/><polygon points="144.0,381.6 144.0,376.1 143.2,376.1 143.2,374.1 147.0,374.1 147.0,376.1 146.2,376.1 146.2,381.6" fill="#d5dde9" fill-opacity="0.85"/><polygon points="144.0,397.6 144.0,392.1 143.2,392.1 143.2,390.1 147.0,390.1 147.0,392.1 146.2,392.1 146.2,397.6" fill="#d5dde9" fill-opacity="0.85"/><polygon points="144.0,413.8 144.0,408.2 143.2,408.2 143.2,406.2 147.0,406.2 147.0,408.2 146.2,408.2 146.2,413.8" fill="#d5dde9" fill-opacity="0.85"/><polygon points="144.0,429.9 144.0,424.4 143.2,424.4 143.2,422.4 147.0,422.4 147.0,424.4 146.2,424.4 146.2,429.9" fill="#d5dde9" fill-opacity="0.85"/><polygon points="144.0,446.0 144.0,440.5 143.2,440.5 143.2,438.5 147.0,438.5 147.0,440.5 146.2,440.5 146.2,446.0" fill="#d5dde9" fill-opacity="0.85"/><polygon points="144.0,462.1 144.0,456.6 143.2,456.6 143.2,454.6 147.0,454.6 147.0,456.6 146.2,456.6 146.2,462.1" fill="#d5dde9" fill-opacity="0.85"/><polygon points="144.0,478.1 144.0,472.6 143.2,472.6 143.2,470.6 147.0,470.6 147.0,472.6 146.2,472.6 146.2,478.1" fill="#d5dde9" fill-opacity="0.85"/><polygon points="144.0,494.2 144.0,488.8 143.2,488.8 143.2,486.8 147.0,486.8 147.0,488.8 146.2,488.8 146.2,494.2" fill="#d5dde9" fill-opacity="0.85"/><rect x="144.4" y="505.9" width="1.4" height="1.4" fill="#b4c6e6" fill-opacity="0.3"/><rect x="144.4" y="522.0" width="1.4" height="1.4" fill="#b4c6e6" fill-opacity="0.3"/><rect x="144.4" y="538.1" width="1.4" height="1.4" fill="#b4c6e6" fill-opacity="0.3"/><rect x="144.4" y="554.2" width="1.4" height="1.4" fill="#b4c6e6" fill-opacity="0.3"/><rect x="144.4" y="570.3" width="1.4" height="1.4" fill="#b4c6e6" fill-opacity="0.3"/><rect x="144.4" y="586.4" width="1.4" height="1.4" fill="#b4c6e6" fill-opacity="0.3"/><rect x="144.4" y="602.5" width="1.4" height="1.4" fill="#b4c6e6" fill-opacity="0.3"/><polygon points="143.7,701.4 144.1,698.8 143.3,698.7 143.5,697.7 147.2,698.4 147.1,699.3 146.3,699.2 145.8,701.8" fill="#b9cbea" fill-opacity="0.6"/><polygon points="144.6,718.0 143.7,715.5 143.0,715.8 142.6,714.9 146.2,713.6 146.6,714.5 145.8,714.8 146.7,717.2" fill="#b9cbea" fill-opacity="0.6"/><polygon points="144.3,734.0 143.8,731.4 143.0,731.5 142.9,730.6 146.6,729.9 146.8,730.9 146.0,731.0 146.4,733.6" fill="#b9cbea" fill-opacity="0.6"/><rect x="144.4" y="747.4" width="1.4" height="1.4" fill="#b4c6e6" fill-opacity="0.3"/><rect x="144.4" y="763.5" width="1.4" height="1.4" fill="#b4c6e6" fill-opacity="0.3"/><rect x="144.4" y="779.6" width="1.4" height="1.4" fill="#b4c6e6" fill-opacity="0.3"/><rect x="144.4" y="795.7" width="1.4" height="1.4" fill="#b4c6e6" fill-opacity="0.3"/><polygon points="144.3,814.5 143.8,811.9 143.0,812.0 142.9,811.1 146.6,810.4 146.8,811.4 146.0,811.5 146.4,814.1" fill="#b9cbea" fill-opacity="0.6"/><polygon points="159.7,365.4 159.7,359.9 158.9,359.9 158.9,357.9 162.7,357.9 162.7,359.9 161.9,359.9 161.9,365.4" fill="#e3e3a0" fill-opacity="0.85"/><polygon points="159.7,381.6 159.7,376.1 158.9,376.1 158.9,374.1 162.7,374.1 162.7,376.1 161.9,376.1 161.9,381.6" fill="#d5dde9" fill-opacity="0.85"/><polygon points="159.7,397.6 159.7,392.1 158.9,392.1 158.9,390.1 162.7,390.1 162.7,392.1 161.9,392.1 161.9,397.6" fill="#d5dde9" fill-opacity="0.85"/><polygon points="159.7,413.8 159.7,408.2 158.9,408.2 158.9,406.2 162.7,406.2 162.7,408.2 161.9,408.2 161.9,413.8" fill="#d5dde9" fill-opacity="0.85"/><polygon points="159.7,429.9 159.7,424.4 158.9,424.4 158.9,422.4 162.7,422.4 162.7,424.4 161.9,424.4 161.9,429.9" fill="#d5dde9" fill-opacity="0.85"/><polygon points="159.7,446.0 159.7,440.5 158.9,440.5 158.9,438.5 162.7,438.5 162.7,440.5 161.9,440.5 161.9,446.0" fill="#d5dde9" fill-opacity="0.85"/><polygon points="159.7,462.1 159.7,456.6 158.9,456.6 158.9,454.6 162.7,454.6 162.7,456.6 161.9,456.6 161.9,462.1" fill="#d5dde9" fill-opacity="0.85"/><polygon points="159.7,478.1 159.7,472.6 158.9,472.6 158.9,470.6 162.7,470.6 162.7,472.6 161.9,472.6 161.9,478.1" fill="#d5dde9" fill-opacity="0.85"/><polygon points="159.7,494.2 159.7,488.8 158.9,488.8 158.9,486.8 162.7,486.8 162.7,488.8 161.9,488.8 161.9,494.2" fill="#d5dde9" fill-opacity="0.85"/><rect x="160.1" y="505.9" width="1.4" height="1.4" fill="#b4c6e6" fill-opacity="0.3"/><rect x="160.1" y="522.0" width="1.4" height="1.4" fill="#b4c6e6" fill-opacity="0.3"/><rect x="160.1" y="538.1" width="1.4" height="1.4" fill="#b4c6e6" fill-opacity="0.3"/><rect x="160.1" y="554.2" width="1.4" height="1.4" fill="#b4c6e6" fill-opacity="0.3"/><rect x="160.1" y="570.3" width="1.4" height="1.4" fill="#b4c6e6" fill-opacity="0.3"/><rect x="160.1" y="586.4" width="1.4" height="1.4" fill="#b4c6e6" fill-opacity="0.3"/><rect x="160.1" y="602.5" width="1.4" height="1.4" fill="#b4c6e6" fill-opacity="0.3"/><rect x="160.1" y="683.0" width="1.4" height="1.4" fill="#b4c6e6" fill-opacity="0.3"/><polygon points="160.0,701.8 159.6,699.2 158.8,699.3 158.6,698.4 162.4,697.7 162.5,698.7 161.7,698.8 162.2,701.4" fill="#b9cbea" fill-opacity="0.6"/><polygon points="160.0,717.9 159.6,715.3 158.8,715.4 158.6,714.5 162.4,713.8 162.5,714.8 161.7,714.9 162.2,717.5" fill="#b9cbea" fill-opacity="0.6"/><polygon points="160.4,734.1 159.5,731.6 158.7,731.9 158.4,731.0 162.0,729.7 162.3,730.6 161.6,730.9 162.4,733.3" fill="#b9cbea" fill-opacity="0.6"/><polygon points="159.4,749.7 159.9,747.1 159.1,747.0 159.2,746.0 163.0,746.7 162.8,747.6 162.0,747.5 161.6,750.1" fill="#b9cbea" fill-opacity="0.6"/><polygon points="160.0,766.2 159.6,763.6 158.8,763.7 158.6,762.8 162.4,762.1 162.5,763.1 161.7,763.2 162.2,765.8" fill="#b9cbea" fill-opacity="0.6"/><polygon points="160.0,782.3 159.6,779.7 158.8,779.8 158.6,778.9 162.4,778.2 162.5,779.2 161.7,779.3 162.2,781.9" fill="#b9cbea" fill-opacity="0.6"/><polygon points="160.0,798.4 159.6,795.8 158.8,795.9 158.6,795.0 162.4,794.3 162.5,795.3 161.7,795.4 162.2,798.0" fill="#b9cbea" fill-opacity="0.6"/><polygon points="160.0,814.5 159.6,811.9 158.8,812.0 158.6,811.1 162.4,810.4 162.5,811.4 161.7,811.5 162.2,814.1" fill="#b9cbea" fill-opacity="0.6"/><polygon points="175.5,365.7 175.5,359.7 174.7,359.7 174.7,357.7 178.5,357.7 178.5,359.7 177.7,359.7 177.7,365.7" fill="#efe56a" fill-opacity="0.85"/><polygon points="175.5,381.6 175.5,376.1 174.7,376.1 174.7,374.1 178.5,374.1 178.5,376.1 177.7,376.1 177.7,381.6" fill="#e6e49a" fill-opacity="0.85"/><polygon points="175.5,397.6 175.5,392.1 174.7,392.1 174.7,390.1 178.5,390.1 178.5,392.1 177.7,392.1 177.7,397.6" fill="#d5dde9" fill-opacity="0.85"/><polygon points="175.5,413.8 175.5,408.2 174.7,408.2 174.7,406.2 178.5,406.2 178.5,408.2 177.7,408.2 177.7,413.8" fill="#d5dde9" fill-opacity="0.85"/><polygon points="175.5,429.9 175.5,424.4 174.7,424.4 174.7,422.4 178.5,422.4 178.5,424.4 177.7,424.4 177.7,429.9" fill="#d5dde9" fill-opacity="0.85"/><polygon points="175.5,446.0 175.5,440.5 174.7,440.5 174.7,438.5 178.5,438.5 178.5,440.5 177.7,440.5 177.7,446.0" fill="#d5dde9" fill-opacity="0.85"/><polygon points="175.5,462.1 175.5,456.6 174.7,456.6 174.7,454.6 178.5,454.6 178.5,456.6 177.7,456.6 177.7,462.1" fill="#d5dde9" fill-opacity="0.85"/><polygon points="175.5,478.1 175.5,472.6 174.7,472.6 174.7,470.6 178.5,470.6 178.5,472.6 177.7,472.6 177.7,478.1" fill="#d5dde9" fill-opacity="0.85"/><polygon points="175.5,494.2 175.5,488.8 174.7,488.8 174.7,486.8 178.5,486.8 178.5,488.8 177.7,488.8 177.7,494.2" fill="#d5dde9" fill-opacity="0.85"/><rect x="175.9" y="505.9" width="1.4" height="1.4" fill="#b4c6e6" fill-opacity="0.3"/><rect x="175.9" y="522.0" width="1.4" height="1.4" fill="#b4c6e6" fill-opacity="0.3"/><rect x="175.9" y="538.1" width="1.4" height="1.4" fill="#b4c6e6" fill-opacity="0.3"/><rect x="175.9" y="554.2" width="1.4" height="1.4" fill="#b4c6e6" fill-opacity="0.3"/><rect x="175.9" y="570.3" width="1.4" height="1.4" fill="#b4c6e6" fill-opacity="0.3"/><rect x="175.9" y="586.4" width="1.4" height="1.4" fill="#b4c6e6" fill-opacity="0.3"/><rect x="175.9" y="602.5" width="1.4" height="1.4" fill="#b4c6e6" fill-opacity="0.3"/><rect x="175.9" y="683.0" width="1.4" height="1.4" fill="#b4c6e6" fill-opacity="0.3"/><polygon points="175.2,701.4 175.6,698.8 174.8,698.7 175.0,697.7 178.7,698.4 178.6,699.3 177.8,699.2 177.3,701.8" fill="#b9cbea" fill-opacity="0.6"/><polygon points="176.1,718.0 175.2,715.5 174.5,715.8 174.1,714.9 177.7,713.6 178.1,714.5 177.3,714.8 178.2,717.2" fill="#b9cbea" fill-opacity="0.6"/><polygon points="175.2,733.6 175.6,731.0 174.8,730.9 175.0,729.9 178.7,730.6 178.6,731.5 177.8,731.4 177.3,734.0" fill="#b9cbea" fill-opacity="0.6"/><polygon points="175.2,749.7 175.6,747.1 174.8,747.0 175.0,746.0 178.7,746.7 178.6,747.6 177.8,747.5 177.3,750.1" fill="#b9cbea" fill-opacity="0.6"/><polygon points="175.5,766.0 175.5,763.4 174.7,763.4 174.7,762.4 178.5,762.4 178.5,763.4 177.7,763.4 177.7,766.0" fill="#b9cbea" fill-opacity="0.6"/><polygon points="175.2,781.9 175.6,779.3 174.8,779.2 175.0,778.2 178.7,778.9 178.6,779.8 177.8,779.7 177.3,782.3" fill="#b9cbea" fill-opacity="0.6"/><polygon points="174.9,797.7 175.8,795.3 175.0,795.0 175.4,794.1 179.0,795.4 178.6,796.3 177.9,796.0 177.0,798.5" fill="#b9cbea" fill-opacity="0.6"/><polygon points="174.9,813.8 175.8,811.4 175.0,811.1 175.4,810.2 179.0,811.5 178.6,812.4 177.9,812.1 177.0,814.6" fill="#b9cbea" fill-opacity="0.6"/><polygon points="191.2,365.7 191.2,359.7 190.4,359.7 190.4,357.7 194.2,357.7 194.2,359.7 193.4,359.7 193.4,365.7" fill="#efe56a" fill-opacity="0.85"/><polygon points="192.3,381.9 190.7,376.2 189.9,376.4 189.4,374.4 193.1,373.4 193.6,375.4 192.8,375.6 194.4,381.4" fill="#e9e23f" fill-opacity="0.85"/><polygon points="192.4,397.8 190.7,392.6 190.0,392.8 189.3,390.9 192.9,389.7 193.6,391.6 192.8,391.9 194.5,397.1" fill="#dfe2a8" fill-opacity="0.85"/><polygon points="191.2,413.8 191.2,408.2 190.4,408.2 190.4,406.2 194.2,406.2 194.2,408.2 193.4,408.2 193.4,413.8" fill="#d5dde9" fill-opacity="0.85"/><polygon points="191.2,429.9 191.2,424.4 190.4,424.4 190.4,422.4 194.2,422.4 194.2,424.4 193.4,424.4 193.4,429.9" fill="#d5dde9" fill-opacity="0.85"/><polygon points="191.2,446.0 191.2,440.5 190.4,440.5 190.4,438.5 194.2,438.5 194.2,440.5 193.4,440.5 193.4,446.0" fill="#d5dde9" fill-opacity="0.85"/><polygon points="191.2,462.1 191.2,456.6 190.4,456.6 190.4,454.6 194.2,454.6 194.2,456.6 193.4,456.6 193.4,462.1" fill="#d5dde9" fill-opacity="0.85"/><polygon points="191.2,478.1 191.2,472.6 190.4,472.6 190.4,470.6 194.2,470.6 194.2,472.6 193.4,472.6 193.4,478.1" fill="#d5dde9" fill-opacity="0.85"/><polygon points="191.2,494.2 191.2,488.8 190.4,488.8 190.4,486.8 194.2,486.8 194.2,488.8 193.4,488.8 193.4,494.2" fill="#d5dde9" fill-opacity="0.85"/><rect x="191.6" y="505.9" width="1.4" height="1.4" fill="#b4c6e6" fill-opacity="0.3"/><rect x="191.6" y="522.0" width="1.4" height="1.4" fill="#b4c6e6" fill-opacity="0.3"/><rect x="191.6" y="538.1" width="1.4" height="1.4" fill="#b4c6e6" fill-opacity="0.3"/><rect x="191.6" y="554.2" width="1.4" height="1.4" fill="#b4c6e6" fill-opacity="0.3"/><rect x="191.6" y="570.3" width="1.4" height="1.4" fill="#b4c6e6" fill-opacity="0.3"/><rect x="191.6" y="586.4" width="1.4" height="1.4" fill="#b4c6e6" fill-opacity="0.3"/><rect x="191.6" y="602.5" width="1.4" height="1.4" fill="#b4c6e6" fill-opacity="0.3"/><rect x="191.6" y="683.0" width="1.4" height="1.4" fill="#b4c6e6" fill-opacity="0.3"/><polygon points="190.7,701.1 191.5,698.7 190.8,698.4 191.1,697.5 194.7,698.8 194.4,699.7 193.6,699.4 192.7,701.9" fill="#b9cbea" fill-opacity="0.6"/><polygon points="191.5,717.9 191.1,715.3 190.3,715.4 190.1,714.5 193.9,713.8 194.0,714.8 193.2,714.9 193.7,717.5" fill="#b9cbea" fill-opacity="0.6"/><polygon points="190.7,733.3 191.5,730.9 190.8,730.6 191.1,729.7 194.7,731.0 194.4,731.9 193.6,731.6 192.7,734.1" fill="#b9cbea" fill-opacity="0.6"/><polygon points="190.7,749.4 191.5,747.0 190.8,746.7 191.1,745.8 194.7,747.1 194.4,748.0 193.6,747.7 192.7,750.2" fill="#b9cbea" fill-opacity="0.6"/><polygon points="191.2,766.0 191.2,763.4 190.4,763.4 190.4,762.4 194.2,762.4 194.2,763.4 193.4,763.4 193.4,766.0" fill="#b9cbea" fill-opacity="0.6"/><polygon points="190.7,781.6 191.5,779.2 190.8,778.9 191.1,778.0 194.7,779.3 194.4,780.2 193.6,779.9 192.7,782.4" fill="#b9cbea" fill-opacity="0.6"/><polygon points="191.2,798.2 191.2,795.6 190.4,795.6 190.4,794.6 194.2,794.6 194.2,795.6 193.4,795.6 193.4,798.2" fill="#b9cbea" fill-opacity="0.6"/><polygon points="190.9,814.1 191.4,811.5 190.6,811.4 190.7,810.4 194.5,811.1 194.3,812.0 193.5,811.9 193.1,814.5" fill="#b9cbea" fill-opacity="0.6"/><polygon points="210.0,397.0 206.2,393.8 205.6,394.4 204.1,393.1 206.6,390.2 208.1,391.5 207.6,392.1 211.4,395.3" fill="#d5dde9" fill-opacity="0.85"/><polygon points="207.8,412.5 206.7,409.4 205.9,409.7 205.5,408.5 209.1,407.2 209.5,408.4 208.7,408.7 209.9,411.7" fill="#b4c6e6" fill-opacity="0.85"/><polygon points="207.0,428.9 207.0,424.9 206.2,424.9 206.2,423.4 210.0,423.4 210.0,424.9 209.2,424.9 209.2,428.9" fill="#b4c6e6" fill-opacity="0.85"/><polygon points="207.0,445.0 207.0,441.0 206.2,441.0 206.2,439.5 210.0,439.5 210.0,441.0 209.2,441.0 209.2,445.0" fill="#b4c6e6" fill-opacity="0.85"/><polygon points="207.0,461.1 207.0,457.1 206.2,457.1 206.2,455.6 210.0,455.6 210.0,457.1 209.2,457.1 209.2,461.1" fill="#b4c6e6" fill-opacity="0.85"/><polygon points="207.0,477.1 207.0,473.2 206.2,473.2 206.2,471.6 210.0,471.6 210.0,473.2 209.2,473.2 209.2,477.1" fill="#b4c6e6" fill-opacity="0.85"/><polygon points="207.0,493.2 207.0,489.3 206.2,489.3 206.2,487.8 210.0,487.8 210.0,489.3 209.2,489.3 209.2,493.2" fill="#b4c6e6" fill-opacity="0.85"/><rect x="207.4" y="505.9" width="1.4" height="1.4" fill="#b4c6e6" fill-opacity="0.3"/><rect x="207.4" y="522.0" width="1.4" height="1.4" fill="#b4c6e6" fill-opacity="0.3"/><rect x="207.4" y="538.1" width="1.4" height="1.4" fill="#b4c6e6" fill-opacity="0.3"/><rect x="207.4" y="554.2" width="1.4" height="1.4" fill="#b4c6e6" fill-opacity="0.3"/><rect x="207.4" y="570.3" width="1.4" height="1.4" fill="#b4c6e6" fill-opacity="0.3"/><rect x="207.4" y="586.4" width="1.4" height="1.4" fill="#b4c6e6" fill-opacity="0.3"/><rect x="207.4" y="602.5" width="1.4" height="1.4" fill="#b4c6e6" fill-opacity="0.3"/><rect x="207.4" y="683.0" width="1.4" height="1.4" fill="#b4c6e6" fill-opacity="0.3"/><polygon points="207.3,701.8 206.8,699.2 206.0,699.3 205.9,698.4 209.6,697.7 209.8,698.7 209.0,698.8 209.4,701.4" fill="#b9cbea" fill-opacity="0.6"/><polygon points="207.0,717.7 207.0,715.1 206.2,715.1 206.2,714.1 210.0,714.1 210.0,715.1 209.2,715.1 209.2,717.7" fill="#b9cbea" fill-opacity="0.6"/><polygon points="207.6,734.1 206.7,731.6 206.0,731.9 205.6,731.0 209.2,729.7 209.6,730.6 208.8,730.9 209.7,733.3" fill="#b9cbea" fill-opacity="0.6"/><polygon points="207.0,749.9 207.0,747.3 206.2,747.3 206.2,746.3 210.0,746.3 210.0,747.3 209.2,747.3 209.2,749.9" fill="#b9cbea" fill-opacity="0.6"/><polygon points="207.3,766.2 206.8,763.6 206.0,763.7 205.9,762.8 209.6,762.1 209.8,763.1 209.0,763.2 209.4,765.8" fill="#b9cbea" fill-opacity="0.6"/><polygon points="207.3,782.3 206.8,779.7 206.0,779.8 205.9,778.9 209.6,778.2 209.8,779.2 209.0,779.3 209.4,781.9" fill="#b9cbea" fill-opacity="0.6"/><polygon points="206.4,797.7 207.3,795.3 206.5,795.0 206.9,794.1 210.5,795.4 210.1,796.3 209.4,796.0 208.5,798.5" fill="#b9cbea" fill-opacity="0.6"/><polygon points="207.3,814.5 206.8,811.9 206.0,812.0 205.9,811.1 209.6,810.4 209.8,811.4 209.0,811.5 209.4,814.1" fill="#b9cbea" fill-opacity="0.6"/><polygon points="223.5,396.4 222.4,393.3 221.7,393.6 221.2,392.4 224.8,391.1 225.2,392.3 224.5,392.6 225.6,395.6" fill="#b4c6e6" fill-opacity="0.85"/><polygon points="223.5,412.5 222.4,409.4 221.7,409.7 221.2,408.5 224.8,407.2 225.2,408.4 224.5,408.7 225.6,411.7" fill="#b4c6e6" fill-opacity="0.85"/><polygon points="222.7,428.9 222.7,424.9 221.9,424.9 221.9,423.4 225.7,423.4 225.7,424.9 224.9,424.9 224.9,428.9" fill="#b4c6e6" fill-opacity="0.85"/><polygon points="222.7,445.0 222.7,441.0 221.9,441.0 221.9,439.5 225.7,439.5 225.7,441.0 224.9,441.0 224.9,445.0" fill="#b4c6e6" fill-opacity="0.85"/><polygon points="222.7,461.1 222.7,457.1 221.9,457.1 221.9,455.6 225.7,455.6 225.7,457.1 224.9,457.1 224.9,461.1" fill="#b4c6e6" fill-opacity="0.85"/><polygon points="222.7,477.1 222.7,473.2 221.9,473.2 221.9,471.6 225.7,471.6 225.7,473.2 224.9,473.2 224.9,477.1" fill="#b4c6e6" fill-opacity="0.85"/><polygon points="222.7,493.2 222.7,489.3 221.9,489.3 221.9,487.8 225.7,487.8 225.7,489.3 224.9,489.3 224.9,493.2" fill="#b4c6e6" fill-opacity="0.85"/><rect x="223.1" y="505.9" width="1.4" height="1.4" fill="#b4c6e6" fill-opacity="0.3"/><rect x="223.1" y="522.0" width="1.4" height="1.4" fill="#b4c6e6" fill-opacity="0.3"/><rect x="223.1" y="538.1" width="1.4" height="1.4" fill="#b4c6e6" fill-opacity="0.3"/><rect x="223.1" y="554.2" width="1.4" height="1.4" fill="#b4c6e6" fill-opacity="0.3"/><rect x="223.1" y="570.3" width="1.4" height="1.4" fill="#b4c6e6" fill-opacity="0.3"/><rect x="223.1" y="586.4" width="1.4" height="1.4" fill="#b4c6e6" fill-opacity="0.3"/><rect x="223.1" y="602.5" width="1.4" height="1.4" fill="#b4c6e6" fill-opacity="0.3"/><rect x="223.1" y="683.0" width="1.4" height="1.4" fill="#b4c6e6" fill-opacity="0.3"/><polygon points="223.4,766.3 222.5,763.8 221.7,764.1 221.4,763.2 225.0,761.9 225.3,762.8 224.6,763.1 225.4,765.5" fill="#b9cbea" fill-opacity="0.6"/><polygon points="222.4,781.9 222.9,779.3 222.1,779.2 222.2,778.2 226.0,778.9 225.8,779.8 225.0,779.7 224.6,782.3" fill="#b9cbea" fill-opacity="0.6"/><polygon points="223.4,798.5 222.5,796.0 221.7,796.3 221.4,795.4 225.0,794.1 225.3,795.0 224.6,795.3 225.4,797.7" fill="#b9cbea" fill-opacity="0.6"/><polygon points="222.7,814.3 222.7,811.7 221.9,811.7 221.9,810.7 225.7,810.7 225.7,811.7 224.9,811.7 224.9,814.3" fill="#b9cbea" fill-opacity="0.6"/><polygon points="238.9,395.5 238.3,393.8 237.6,394.0 237.3,393.4 240.9,392.1 241.1,392.7 240.4,393.0 241.0,394.7" fill="#b4c6e6" fill-opacity="0.5"/><polygon points="239.3,412.5 238.2,409.4 237.4,409.7 237.0,408.5 240.6,407.2 241.0,408.4 240.2,408.7 241.4,411.7" fill="#b4c6e6" fill-opacity="0.85"/><polygon points="238.5,428.9 238.5,424.9 237.7,424.9 237.7,423.4 241.5,423.4 241.5,424.9 240.7,424.9 240.7,428.9" fill="#b4c6e6" fill-opacity="0.85"/><polygon points="238.5,445.0 238.5,441.0 237.7,441.0 237.7,439.5 241.5,439.5 241.5,441.0 240.7,441.0 240.7,445.0" fill="#b4c6e6" fill-opacity="0.85"/><polygon points="238.5,461.1 238.5,457.1 237.7,457.1 237.7,455.6 241.5,455.6 241.5,457.1 240.7,457.1 240.7,461.1" fill="#b4c6e6" fill-opacity="0.85"/><polygon points="238.5,477.1 238.5,473.2 237.7,473.2 237.7,471.6 241.5,471.6 241.5,473.2 240.7,473.2 240.7,477.1" fill="#b4c6e6" fill-opacity="0.85"/><polygon points="238.5,493.2 238.5,489.3 237.7,489.3 237.7,487.8 241.5,487.8 241.5,489.3 240.7,489.3 240.7,493.2" fill="#b4c6e6" fill-opacity="0.85"/><rect x="238.9" y="505.9" width="1.4" height="1.4" fill="#b4c6e6" fill-opacity="0.3"/><rect x="238.9" y="522.0" width="1.4" height="1.4" fill="#b4c6e6" fill-opacity="0.3"/><rect x="238.9" y="538.1" width="1.4" height="1.4" fill="#b4c6e6" fill-opacity="0.3"/><rect x="238.9" y="554.2" width="1.4" height="1.4" fill="#b4c6e6" fill-opacity="0.3"/><rect x="238.9" y="570.3" width="1.4" height="1.4" fill="#b4c6e6" fill-opacity="0.3"/><rect x="238.9" y="586.4" width="1.4" height="1.4" fill="#b4c6e6" fill-opacity="0.3"/><rect x="238.9" y="602.5" width="1.4" height="1.4" fill="#b4c6e6" fill-opacity="0.3"/><rect x="238.9" y="683.0" width="1.4" height="1.4" fill="#b4c6e6" fill-opacity="0.3"/><rect x="238.9" y="763.5" width="1.4" height="1.4" fill="#b4c6e6" fill-opacity="0.3"/><rect x="238.9" y="779.6" width="1.4" height="1.4" fill="#b4c6e6" fill-opacity="0.3"/><rect x="238.9" y="795.7" width="1.4" height="1.4" fill="#b4c6e6" fill-opacity="0.3"/><polygon points="237.9,813.8 238.8,811.4 238.0,811.1 238.4,810.2 242.0,811.5 241.6,812.4 240.9,812.1 240.0,814.6" fill="#b9cbea" fill-opacity="0.6"/><polygon points="254.7,395.5 254.1,393.8 253.3,394.0 253.1,393.4 256.7,392.1 256.9,392.7 256.1,393.0 256.8,394.7" fill="#b4c6e6" fill-opacity="0.5"/><polygon points="255.0,412.5 253.9,409.4 253.2,409.7 252.7,408.5 256.3,407.2 256.7,408.4 256.0,408.7 257.1,411.7" fill="#b4c6e6" fill-opacity="0.85"/><polygon points="254.2,428.9 254.2,424.9 253.4,424.9 253.4,423.4 257.2,423.4 257.2,424.9 256.4,424.9 256.4,428.9" fill="#b4c6e6" fill-opacity="0.85"/><polygon points="254.2,445.0 254.2,441.0 253.4,441.0 253.4,439.5 257.2,439.5 257.2,441.0 256.4,441.0 256.4,445.0" fill="#b4c6e6" fill-opacity="0.85"/><polygon points="254.2,461.1 254.2,457.1 253.4,457.1 253.4,455.6 257.2,455.6 257.2,457.1 256.4,457.1 256.4,461.1" fill="#b4c6e6" fill-opacity="0.85"/><polygon points="254.2,477.1 254.2,473.2 253.4,473.2 253.4,471.6 257.2,471.6 257.2,473.2 256.4,473.2 256.4,477.1" fill="#b4c6e6" fill-opacity="0.85"/><polygon points="254.2,493.2 254.2,489.3 253.4,489.3 253.4,487.8 257.2,487.8 257.2,489.3 256.4,489.3 256.4,493.2" fill="#b4c6e6" fill-opacity="0.85"/><polygon points="254.2,508.4 254.2,505.8 253.4,505.8 253.4,504.8 257.2,504.8 257.2,505.8 256.4,505.8 256.4,508.4" fill="#b9cbea" fill-opacity="0.6"/><polygon points="254.2,524.5 254.2,521.9 253.4,521.9 253.4,520.9 257.2,520.9 257.2,521.9 256.4,521.9 256.4,524.5" fill="#b9cbea" fill-opacity="0.6"/><polygon points="253.7,540.1 254.5,537.7 253.8,537.4 254.1,536.5 257.7,537.8 257.4,538.7 256.6,538.4 255.7,540.9" fill="#b9cbea" fill-opacity="0.6"/><polygon points="253.9,556.5 254.4,553.9 253.6,553.8 253.7,552.8 257.5,553.5 257.3,554.4 256.5,554.3 256.1,556.9" fill="#b9cbea" fill-opacity="0.6"/><polygon points="253.9,572.6 254.4,570.0 253.6,569.9 253.7,568.9 257.5,569.6 257.3,570.5 256.5,570.4 256.1,573.0" fill="#b9cbea" fill-opacity="0.6"/><polygon points="253.7,588.4 254.5,586.0 253.8,585.7 254.1,584.8 257.7,586.1 257.4,587.0 256.6,586.7 255.7,589.2" fill="#b9cbea" fill-opacity="0.6"/><rect x="254.6" y="602.5" width="1.4" height="1.4" fill="#b4c6e6" fill-opacity="0.3"/><rect x="254.6" y="618.6" width="1.4" height="1.4" fill="#b4c6e6" fill-opacity="0.3"/><rect x="254.6" y="634.7" width="1.4" height="1.4" fill="#b4c6e6" fill-opacity="0.3"/><rect x="254.6" y="650.8" width="1.4" height="1.4" fill="#b4c6e6" fill-opacity="0.3"/><rect x="254.6" y="666.9" width="1.4" height="1.4" fill="#b4c6e6" fill-opacity="0.3"/><rect x="254.6" y="683.0" width="1.4" height="1.4" fill="#b4c6e6" fill-opacity="0.3"/><rect x="254.6" y="763.5" width="1.4" height="1.4" fill="#b4c6e6" fill-opacity="0.3"/><rect x="254.6" y="779.6" width="1.4" height="1.4" fill="#b4c6e6" fill-opacity="0.3"/><rect x="254.6" y="795.7" width="1.4" height="1.4" fill="#b4c6e6" fill-opacity="0.3"/><polygon points="254.9,814.6 254.0,812.1 253.2,812.4 252.9,811.5 256.5,810.2 256.8,811.1 256.1,811.4 256.9,813.8" fill="#b9cbea" fill-opacity="0.6"/><rect x="270.4" y="393.2" width="1.4" height="1.4" fill="#b4c6e6" fill-opacity="0.3"/><rect x="270.4" y="409.3" width="1.4" height="1.4" fill="#b4c6e6" fill-opacity="0.3"/><rect x="270.4" y="425.4" width="1.4" height="1.4" fill="#b4c6e6" fill-opacity="0.3"/><rect x="270.4" y="441.5" width="1.4" height="1.4" fill="#b4c6e6" fill-opacity="0.3"/><rect x="270.4" y="457.6" width="1.4" height="1.4" fill="#b4c6e6" fill-opacity="0.3"/><rect x="270.4" y="473.7" width="1.4" height="1.4" fill="#b4c6e6" fill-opacity="0.3"/><rect x="270.4" y="489.8" width="1.4" height="1.4" fill="#b4c6e6" fill-opacity="0.3"/><rect x="270.4" y="505.9" width="1.4" height="1.4" fill="#b4c6e6" fill-opacity="0.3"/><polygon points="270.6,524.8 269.7,522.3 269.0,522.6 268.6,521.7 272.2,520.4 272.6,521.3 271.8,521.6 272.7,524.0" fill="#b9cbea" fill-opacity="0.6"/><polygon points="270.3,540.8 269.8,538.2 269.0,538.3 268.9,537.4 272.6,536.7 272.8,537.7 272.0,537.8 272.4,540.4" fill="#b9cbea" fill-opacity="0.6"/><polygon points="269.9,556.7 269.9,554.1 269.2,554.1 269.2,553.1 272.9,553.1 272.9,554.1 272.2,554.1 272.2,556.7" fill="#b9cbea" fill-opacity="0.6"/><polygon points="269.4,572.3 270.3,569.9 269.5,569.6 269.9,568.7 273.5,570.0 273.1,570.9 272.4,570.6 271.5,573.1" fill="#b9cbea" fill-opacity="0.6"/><rect x="270.4" y="586.4" width="1.4" height="1.4" fill="#b4c6e6" fill-opacity="0.3"/><rect x="270.4" y="602.5" width="1.4" height="1.4" fill="#b4c6e6" fill-opacity="0.3"/><rect x="270.4" y="618.6" width="1.4" height="1.4" fill="#b4c6e6" fill-opacity="0.3"/><rect x="270.4" y="634.7" width="1.4" height="1.4" fill="#b4c6e6" fill-opacity="0.3"/><rect x="270.4" y="650.8" width="1.4" height="1.4" fill="#b4c6e6" fill-opacity="0.3"/><rect x="270.4" y="666.9" width="1.4" height="1.4" fill="#b4c6e6" fill-opacity="0.3"/><rect x="270.4" y="683.0" width="1.4" height="1.4" fill="#b4c6e6" fill-opacity="0.3"/><rect x="270.4" y="763.5" width="1.4" height="1.4" fill="#b4c6e6" fill-opacity="0.3"/><rect x="270.4" y="779.6" width="1.4" height="1.4" fill="#b4c6e6" fill-opacity="0.3"/><rect x="270.4" y="795.7" width="1.4" height="1.4" fill="#b4c6e6" fill-opacity="0.3"/><polygon points="269.7,814.1 270.1,811.5 269.3,811.4 269.5,810.4 273.2,811.1 273.1,812.0 272.3,811.9 271.8,814.5" fill="#b9cbea" fill-opacity="0.6"/><rect x="286.1" y="505.9" width="1.4" height="1.4" fill="#b4c6e6" fill-opacity="0.3"/><rect x="286.1" y="522.0" width="1.4" height="1.4" fill="#b4c6e6" fill-opacity="0.3"/><rect x="286.1" y="538.1" width="1.4" height="1.4" fill="#b4c6e6" fill-opacity="0.3"/><rect x="286.1" y="554.2" width="1.4" height="1.4" fill="#b4c6e6" fill-opacity="0.3"/><rect x="286.1" y="570.3" width="1.4" height="1.4" fill="#b4c6e6" fill-opacity="0.3"/><rect x="286.1" y="634.7" width="1.4" height="1.4" fill="#b4c6e6" fill-opacity="0.3"/><rect x="286.1" y="650.8" width="1.4" height="1.4" fill="#b4c6e6" fill-opacity="0.3"/><rect x="286.1" y="666.9" width="1.4" height="1.4" fill="#b4c6e6" fill-opacity="0.3"/><rect x="286.1" y="683.0" width="1.4" height="1.4" fill="#b4c6e6" fill-opacity="0.3"/><rect x="301.9" y="505.9" width="1.4" height="1.4" fill="#b4c6e6" fill-opacity="0.3"/><rect x="301.9" y="650.8" width="1.4" height="1.4" fill="#b4c6e6" fill-opacity="0.3"/><rect x="301.9" y="666.9" width="1.4" height="1.4" fill="#b4c6e6" fill-opacity="0.3"/><rect x="301.9" y="683.0" width="1.4" height="1.4" fill="#b4c6e6" fill-opacity="0.3"/><rect x="317.6" y="666.9" width="1.4" height="1.4" fill="#b4c6e6" fill-opacity="0.3"/><rect x="317.6" y="683.0" width="1.4" height="1.4" fill="#b4c6e6" fill-opacity="0.3"/><rect x="333.4" y="505.9" width="1.4" height="1.4" fill="#b4c6e6" fill-opacity="0.3"/><rect x="333.4" y="666.9" width="1.4" height="1.4" fill="#b4c6e6" fill-opacity="0.3"/><rect x="333.4" y="683.0" width="1.4" height="1.4" fill="#b4c6e6" fill-opacity="0.3"/><rect x="349.1" y="505.9" width="1.4" height="1.4" fill="#b4c6e6" fill-opacity="0.3"/><rect x="349.1" y="666.9" width="1.4" height="1.4" fill="#b4c6e6" fill-opacity="0.3"/><rect x="349.1" y="683.0" width="1.4" height="1.4" fill="#b4c6e6" fill-opacity="0.3"/><rect x="364.9" y="505.9" width="1.4" height="1.4" fill="#b4c6e6" fill-opacity="0.3"/><rect x="364.9" y="666.9" width="1.4" height="1.4" fill="#b4c6e6" fill-opacity="0.3"/><rect x="364.9" y="683.0" width="1.4" height="1.4" fill="#b4c6e6" fill-opacity="0.3"/><rect x="380.6" y="505.9" width="1.4" height="1.4" fill="#b4c6e6" fill-opacity="0.3"/><rect x="380.6" y="650.8" width="1.4" height="1.4" fill="#b4c6e6" fill-opacity="0.3"/><rect x="380.6" y="666.9" width="1.4" height="1.4" fill="#b4c6e6" fill-opacity="0.3"/><rect x="380.6" y="683.0" width="1.4" height="1.4" fill="#b4c6e6" fill-opacity="0.3"/><rect x="380.6" y="699.1" width="1.4" height="1.4" fill="#b4c6e6" fill-opacity="0.3"/><rect x="380.6" y="715.2" width="1.4" height="1.4" fill="#b4c6e6" fill-opacity="0.3"/><rect x="380.6" y="731.3" width="1.4" height="1.4" fill="#b4c6e6" fill-opacity="0.3"/><rect x="380.6" y="747.4" width="1.4" height="1.4" fill="#b4c6e6" fill-opacity="0.3"/><rect x="380.6" y="763.5" width="1.4" height="1.4" fill="#b4c6e6" fill-opacity="0.3"/><rect x="380.6" y="779.6" width="1.4" height="1.4" fill="#b4c6e6" fill-opacity="0.3"/><rect x="380.6" y="795.7" width="1.4" height="1.4" fill="#b4c6e6" fill-opacity="0.3"/><polygon points="379.9,814.1 380.4,811.5 379.6,811.4 379.7,810.4 383.5,811.1 383.3,812.0 382.5,811.9 382.1,814.5" fill="#b9cbea" fill-opacity="0.6"/><rect x="396.4" y="505.9" width="1.4" height="1.4" fill="#b4c6e6" fill-opacity="0.3"/><rect x="396.4" y="522.0" width="1.4" height="1.4" fill="#b4c6e6" fill-opacity="0.3"/><rect x="396.4" y="634.7" width="1.4" height="1.4" fill="#b4c6e6" fill-opacity="0.3"/><rect x="396.4" y="650.8" width="1.4" height="1.4" fill="#b4c6e6" fill-opacity="0.3"/><rect x="396.4" y="666.9" width="1.4" height="1.4" fill="#b4c6e6" fill-opacity="0.3"/><rect x="396.4" y="683.0" width="1.4" height="1.4" fill="#b4c6e6" fill-opacity="0.3"/><polygon points="396.3,701.8 395.8,699.2 395.0,699.3 394.9,698.4 398.6,697.7 398.8,698.7 398.0,698.8 398.4,701.4" fill="#b9cbea" fill-opacity="0.6"/><rect x="396.4" y="715.2" width="1.4" height="1.4" fill="#b4c6e6" fill-opacity="0.3"/><polygon points="396.6,734.1 395.7,731.6 395.0,731.9 394.6,731.0 398.2,729.7 398.6,730.6 397.8,730.9 398.7,733.3" fill="#b9cbea" fill-opacity="0.6"/><rect x="396.4" y="747.4" width="1.4" height="1.4" fill="#b4c6e6" fill-opacity="0.3"/><polygon points="395.7,765.8 396.1,763.2 395.3,763.1 395.5,762.1 399.2,762.8 399.1,763.7 398.3,763.6 397.8,766.2" fill="#b9cbea" fill-opacity="0.6"/><polygon points="395.9,782.1 395.9,779.5 395.2,779.5 395.2,778.5 398.9,778.5 398.9,779.5 398.2,779.5 398.2,782.1" fill="#b9cbea" fill-opacity="0.6"/><polygon points="395.7,798.0 396.1,795.4 395.3,795.3 395.5,794.3 399.2,795.0 399.1,795.9 398.3,795.8 397.8,798.4" fill="#b9cbea" fill-opacity="0.6"/><polygon points="395.4,813.8 396.3,811.4 395.5,811.1 395.9,810.2 399.5,811.5 399.1,812.4 398.4,812.1 397.5,814.6" fill="#b9cbea" fill-opacity="0.6"/><rect x="412.1" y="361.0" width="1.4" height="1.4" fill="#b4c6e6" fill-opacity="0.3"/><rect x="412.1" y="377.1" width="1.4" height="1.4" fill="#b4c6e6" fill-opacity="0.3"/><rect x="412.1" y="393.2" width="1.4" height="1.4" fill="#b4c6e6" fill-opacity="0.3"/><polygon points="411.7,459.6 411.7,457.7 410.9,457.7 410.9,457.0 414.7,457.0 414.7,457.7 413.9,457.7 413.9,459.6" fill="#b4c6e6" fill-opacity="0.5"/><polygon points="411.7,475.7 411.7,473.8 410.9,473.8 410.9,473.1 414.7,473.1 414.7,473.8 413.9,473.8 413.9,475.7" fill="#b4c6e6" fill-opacity="0.5"/><polygon points="411.7,491.8 411.7,489.9 410.9,489.9 410.9,489.2 414.7,489.2 414.7,489.9 413.9,489.9 413.9,491.8" fill="#b4c6e6" fill-opacity="0.5"/><polygon points="411.7,508.6 411.7,505.7 410.9,505.7 410.9,504.6 414.7,504.6 414.7,505.7 413.9,505.7 413.9,508.6" fill="#b4c6e6" fill-opacity="0.85"/><polygon points="411.7,527.0 411.7,520.5 410.9,520.5 410.9,518.5 414.7,518.5 414.7,520.5 413.9,520.5 413.9,527.0" fill="#e9e23f" fill-opacity="0.85"/><polygon points="411.7,543.0 411.7,536.5 410.9,536.5 410.9,534.5 414.7,534.5 414.7,536.5 413.9,536.5 413.9,543.0" fill="#e9e23f" fill-opacity="0.85"/><polygon points="411.7,559.2 411.7,552.7 410.9,552.7 410.9,550.7 414.7,550.7 414.7,552.7 413.9,552.7 413.9,559.2" fill="#e9e23f" fill-opacity="0.85"/><polygon points="411.7,575.2 411.7,568.8 410.9,568.8 410.9,566.8 414.7,566.8 414.7,568.8 413.9,568.8 413.9,575.2" fill="#e9e23f" fill-opacity="0.85"/><polygon points="411.7,591.4 411.7,584.9 410.9,584.9 410.9,582.9 414.7,582.9 414.7,584.9 413.9,584.9 413.9,591.4" fill="#e9e23f" fill-opacity="0.85"/><polygon points="411.7,607.5 411.7,601.0 410.9,601.0 410.9,599.0 414.7,599.0 414.7,601.0 413.9,601.0 413.9,607.5" fill="#e9e23f" fill-opacity="0.85"/><rect x="412.1" y="618.6" width="1.4" height="1.4" fill="#b4c6e6" fill-opacity="0.3"/><rect x="412.1" y="634.7" width="1.4" height="1.4" fill="#b4c6e6" fill-opacity="0.3"/><rect x="412.1" y="650.8" width="1.4" height="1.4" fill="#b4c6e6" fill-opacity="0.3"/><rect x="412.1" y="666.9" width="1.4" height="1.4" fill="#b4c6e6" fill-opacity="0.3"/><rect x="412.1" y="683.0" width="1.4" height="1.4" fill="#b4c6e6" fill-opacity="0.3"/><rect x="412.1" y="699.1" width="1.4" height="1.4" fill="#b4c6e6" fill-opacity="0.3"/><polygon points="411.2,717.2 412.0,714.8 411.3,714.5 411.6,713.6 415.2,714.9 414.9,715.8 414.1,715.5 413.2,718.0" fill="#b9cbea" fill-opacity="0.6"/><rect x="412.1" y="731.3" width="1.4" height="1.4" fill="#b4c6e6" fill-opacity="0.3"/><polygon points="411.2,749.4 412.0,747.0 411.3,746.7 411.6,745.8 415.2,747.1 414.9,748.0 414.1,747.7 413.2,750.2" fill="#b9cbea" fill-opacity="0.6"/><rect x="412.1" y="763.5" width="1.4" height="1.4" fill="#b4c6e6" fill-opacity="0.3"/><polygon points="411.7,782.1 411.7,779.5 410.9,779.5 410.9,778.5 414.7,778.5 414.7,779.5 413.9,779.5 413.9,782.1" fill="#b9cbea" fill-opacity="0.6"/><polygon points="411.7,798.2 411.7,795.6 410.9,795.6 410.9,794.6 414.7,794.6 414.7,795.6 413.9,795.6 413.9,798.2" fill="#b9cbea" fill-opacity="0.6"/><polygon points="411.7,814.3 411.7,811.7 410.9,811.7 410.9,810.7 414.7,810.7 414.7,811.7 413.9,811.7 413.9,814.3" fill="#b9cbea" fill-opacity="0.6"/><rect x="427.9" y="361.0" width="1.4" height="1.4" fill="#b4c6e6" fill-opacity="0.3"/><rect x="427.9" y="377.1" width="1.4" height="1.4" fill="#b4c6e6" fill-opacity="0.3"/><rect x="427.9" y="393.2" width="1.4" height="1.4" fill="#b4c6e6" fill-opacity="0.3"/><polygon points="427.4,411.5 427.4,409.3 426.7,409.3 426.7,408.5 430.4,408.5 430.4,409.3 429.7,409.3 429.7,411.5" fill="#b4c6e6" fill-opacity="0.85"/><polygon points="427.4,428.4 427.4,425.1 426.7,425.1 426.7,423.9 430.4,423.9 430.4,425.1 429.7,425.1 429.7,428.4" fill="#b4c6e6" fill-opacity="0.85"/><polygon points="427.4,444.5 427.4,441.2 426.7,441.2 426.7,440.0 430.4,440.0 430.4,441.2 429.7,441.2 429.7,444.5" fill="#b4c6e6" fill-opacity="0.85"/><polygon points="427.4,460.6 427.4,457.3 426.7,457.3 426.7,456.1 430.4,456.1 430.4,457.3 429.7,457.3 429.7,460.6" fill="#b4c6e6" fill-opacity="0.85"/><polygon points="427.4,476.6 427.4,473.4 426.7,473.4 426.7,472.1 430.4,472.1 430.4,473.4 429.7,473.4 429.7,476.6" fill="#b4c6e6" fill-opacity="0.85"/><polygon points="427.4,492.8 427.4,489.5 426.7,489.5 426.7,488.2 430.4,488.2 430.4,489.5 429.7,489.5 429.7,492.8" fill="#b4c6e6" fill-opacity="0.85"/><polygon points="427.4,510.1 427.4,505.1 426.7,505.1 426.7,503.1 430.4,503.1 430.4,505.1 429.7,505.1 429.7,510.1" fill="#e8e6a0" fill-opacity="0.85"/><polygon points="427.4,527.0 427.4,520.5 426.7,520.5 426.7,518.5 430.4,518.5 430.4,520.5 429.7,520.5 429.7,527.0" fill="#e9e23f" fill-opacity="0.85"/><polygon points="427.4,543.0 427.4,536.5 426.7,536.5 426.7,534.5 430.4,534.5 430.4,536.5 429.7,536.5 429.7,543.0" fill="#e9e23f" fill-opacity="0.85"/><polygon points="427.4,559.2 427.4,552.7 426.7,552.7 426.7,550.7 430.4,550.7 430.4,552.7 429.7,552.7 429.7,559.2" fill="#e9e23f" fill-opacity="0.85"/><polygon points="427.4,575.2 427.4,568.8 426.7,568.8 426.7,566.8 430.4,566.8 430.4,568.8 429.7,568.8 429.7,575.2" fill="#e9e23f" fill-opacity="0.85"/><polygon points="427.4,591.4 427.4,584.9 426.7,584.9 426.7,582.9 430.4,582.9 430.4,584.9 429.7,584.9 429.7,591.4" fill="#e9e23f" fill-opacity="0.85"/><polygon points="427.4,607.5 427.4,601.0 426.7,601.0 426.7,599.0 430.4,599.0 430.4,601.0 429.7,601.0 429.7,607.5" fill="#e9e23f" fill-opacity="0.85"/><rect x="427.9" y="618.6" width="1.4" height="1.4" fill="#b4c6e6" fill-opacity="0.3"/><rect x="427.9" y="634.7" width="1.4" height="1.4" fill="#b4c6e6" fill-opacity="0.3"/><rect x="427.9" y="650.8" width="1.4" height="1.4" fill="#b4c6e6" fill-opacity="0.3"/><rect x="427.9" y="666.9" width="1.4" height="1.4" fill="#b4c6e6" fill-opacity="0.3"/><rect x="427.9" y="683.0" width="1.4" height="1.4" fill="#b4c6e6" fill-opacity="0.3"/><polygon points="426.9,701.1 427.8,698.7 427.0,698.4 427.4,697.5 431.0,698.8 430.6,699.7 429.9,699.4 429.0,701.9" fill="#b9cbea" fill-opacity="0.6"/><rect x="427.9" y="715.2" width="1.4" height="1.4" fill="#b4c6e6" fill-opacity="0.3"/><polygon points="426.9,733.3 427.8,730.9 427.0,730.6 427.4,729.7 431.0,731.0 430.6,731.9 429.9,731.6 429.0,734.1" fill="#b9cbea" fill-opacity="0.6"/><rect x="427.9" y="747.4" width="1.4" height="1.4" fill="#b4c6e6" fill-opacity="0.3"/><polygon points="428.1,766.3 427.2,763.8 426.5,764.1 426.1,763.2 429.7,761.9 430.1,762.8 429.3,763.1 430.2,765.5" fill="#b9cbea" fill-opacity="0.6"/><polygon points="427.4,782.1 427.4,779.5 426.7,779.5 426.7,778.5 430.4,778.5 430.4,779.5 429.7,779.5 429.7,782.1" fill="#b9cbea" fill-opacity="0.6"/><polygon points="428.1,798.5 427.2,796.0 426.5,796.3 426.1,795.4 429.7,794.1 430.1,795.0 429.3,795.3 430.2,797.7" fill="#b9cbea" fill-opacity="0.6"/><polygon points="427.2,814.1 427.6,811.5 426.8,811.4 427.0,810.4 430.7,811.1 430.6,812.0 429.8,811.9 429.3,814.5" fill="#b9cbea" fill-opacity="0.6"/><rect x="443.6" y="361.0" width="1.4" height="1.4" fill="#b4c6e6" fill-opacity="0.3"/><rect x="443.6" y="377.1" width="1.4" height="1.4" fill="#b4c6e6" fill-opacity="0.3"/><rect x="443.6" y="393.2" width="1.4" height="1.4" fill="#b4c6e6" fill-opacity="0.3"/><polygon points="443.2,411.5 443.2,409.3 442.4,409.3 442.4,408.5 446.2,408.5 446.2,409.3 445.4,409.3 445.4,411.5" fill="#d5dde9" fill-opacity="0.85"/><polygon points="443.2,429.1 443.2,424.8 442.4,424.8 442.4,423.1 446.2,423.1 446.2,424.8 445.4,424.8 445.4,429.1" fill="#d5dde9" fill-opacity="0.85"/><polygon points="443.2,445.2 443.2,440.9 442.4,440.9 442.4,439.2 446.2,439.2 446.2,440.9 445.4,440.9 445.4,445.2" fill="#d5dde9" fill-opacity="0.85"/><polygon points="443.2,461.3 443.2,457.0 442.4,457.0 442.4,455.3 446.2,455.3 446.2,457.0 445.4,457.0 445.4,461.3" fill="#d5dde9" fill-opacity="0.85"/><polygon points="443.2,477.4 443.2,473.1 442.4,473.1 442.4,471.4 446.2,471.4 446.2,473.1 445.4,473.1 445.4,477.4" fill="#d5dde9" fill-opacity="0.85"/><polygon points="443.2,493.5 443.2,489.2 442.4,489.2 442.4,487.5 446.2,487.5 446.2,489.2 445.4,489.2 445.4,493.5" fill="#d5dde9" fill-opacity="0.85"/><polygon points="443.2,510.1 443.2,505.1 442.4,505.1 442.4,503.1 446.2,503.1 446.2,505.1 445.4,505.1 445.4,510.1" fill="#efe56a" fill-opacity="0.85"/><polygon points="443.2,527.0 443.2,520.5 442.4,520.5 442.4,518.5 446.2,518.5 446.2,520.5 445.4,520.5 445.4,527.0" fill="#e9e23f" fill-opacity="0.85"/><polygon points="443.2,543.0 443.2,536.5 442.4,536.5 442.4,534.5 446.2,534.5 446.2,536.5 445.4,536.5 445.4,543.0" fill="#e9e23f" fill-opacity="0.85"/><polygon points="443.2,559.2 443.2,552.7 442.4,552.7 442.4,550.7 446.2,550.7 446.2,552.7 445.4,552.7 445.4,559.2" fill="#e9e23f" fill-opacity="0.85"/><polygon points="443.2,575.2 443.2,568.8 442.4,568.8 442.4,566.8 446.2,566.8 446.2,568.8 445.4,568.8 445.4,575.2" fill="#e9e23f" fill-opacity="0.85"/><polygon points="443.2,591.4 443.2,584.9 442.4,584.9 442.4,582.9 446.2,582.9 446.2,584.9 445.4,584.9 445.4,591.4" fill="#e9e23f" fill-opacity="0.85"/><rect x="443.6" y="618.6" width="1.4" height="1.4" fill="#b4c6e6" fill-opacity="0.3"/><rect x="443.6" y="634.7" width="1.4" height="1.4" fill="#b4c6e6" fill-opacity="0.3"/><rect x="443.6" y="650.8" width="1.4" height="1.4" fill="#b4c6e6" fill-opacity="0.3"/><rect x="443.6" y="666.9" width="1.4" height="1.4" fill="#b4c6e6" fill-opacity="0.3"/><rect x="443.6" y="683.0" width="1.4" height="1.4" fill="#b4c6e6" fill-opacity="0.3"/><rect x="443.6" y="699.1" width="1.4" height="1.4" fill="#b4c6e6" fill-opacity="0.3"/><polygon points="443.5,717.9 443.1,715.3 442.3,715.4 442.1,714.5 445.9,713.8 446.0,714.8 445.2,714.9 445.7,717.5" fill="#b9cbea" fill-opacity="0.6"/><rect x="443.6" y="731.3" width="1.4" height="1.4" fill="#b4c6e6" fill-opacity="0.3"/><polygon points="443.5,750.1 443.1,747.5 442.3,747.6 442.1,746.7 445.9,746.0 446.0,747.0 445.2,747.1 445.7,749.7" fill="#b9cbea" fill-opacity="0.6"/><rect x="443.6" y="763.5" width="1.4" height="1.4" fill="#b4c6e6" fill-opacity="0.3"/><polygon points="443.5,782.3 443.1,779.7 442.3,779.8 442.1,778.9 445.9,778.2 446.0,779.2 445.2,779.3 445.7,781.9" fill="#b9cbea" fill-opacity="0.6"/><polygon points="443.9,798.5 443.0,796.0 442.2,796.3 441.9,795.4 445.5,794.1 445.8,795.0 445.1,795.3 445.9,797.7" fill="#b9cbea" fill-opacity="0.6"/><polygon points="443.5,814.5 443.1,811.9 442.3,812.0 442.1,811.1 445.9,810.4 446.0,811.4 445.2,811.5 445.7,814.1" fill="#b9cbea" fill-opacity="0.6"/><rect x="459.4" y="361.0" width="1.4" height="1.4" fill="#b4c6e6" fill-opacity="0.3"/><rect x="459.4" y="377.1" width="1.4" height="1.4" fill="#b4c6e6" fill-opacity="0.3"/><rect x="459.4" y="393.2" width="1.4" height="1.4" fill="#b4c6e6" fill-opacity="0.3"/><polygon points="458.9,413.0 458.9,408.7 458.2,408.7 458.2,407.0 461.9,407.0 461.9,408.7 461.2,408.7 461.2,413.0" fill="#d5dde9" fill-opacity="0.85"/><polygon points="458.9,429.1 458.9,424.8 458.2,424.8 458.2,423.1 461.9,423.1 461.9,424.8 461.2,424.8 461.2,429.1" fill="#d5dde9" fill-opacity="0.85"/><polygon points="458.9,445.2 458.9,440.9 458.2,440.9 458.2,439.2 461.9,439.2 461.9,440.9 461.2,440.9 461.2,445.2" fill="#d5dde9" fill-opacity="0.85"/><polygon points="458.9,461.3 458.9,457.0 458.2,457.0 458.2,455.3 461.9,455.3 461.9,457.0 461.2,457.0 461.2,461.3" fill="#d5dde9" fill-opacity="0.85"/><polygon points="458.9,477.4 458.9,473.1 458.2,473.1 458.2,471.4 461.9,471.4 461.9,473.1 461.2,473.1 461.2,477.4" fill="#d5dde9" fill-opacity="0.85"/><polygon points="458.9,493.5 458.9,489.2 458.2,489.2 458.2,487.5 461.9,487.5 461.9,489.2 461.2,489.2 461.2,493.5" fill="#d5dde9" fill-opacity="0.85"/><polygon points="458.9,510.1 458.9,505.1 458.2,505.1 458.2,503.1 461.9,503.1 461.9,505.1 461.2,505.1 461.2,510.1" fill="#efe56a" fill-opacity="0.85"/><polygon points="458.9,527.0 458.9,520.5 458.2,520.5 458.2,518.5 461.9,518.5 461.9,520.5 461.2,520.5 461.2,527.0" fill="#e9e23f" fill-opacity="0.85"/><polygon points="458.9,543.0 458.9,536.5 458.2,536.5 458.2,534.5 461.9,534.5 461.9,536.5 461.2,536.5 461.2,543.0" fill="#e9e23f" fill-opacity="0.85"/><polygon points="458.9,559.2 458.9,552.7 458.2,552.7 458.2,550.7 461.9,550.7 461.9,552.7 461.2,552.7 461.2,559.2" fill="#e9e23f" fill-opacity="0.85"/><polygon points="458.9,575.2 458.9,568.8 458.2,568.8 458.2,566.8 461.9,566.8 461.9,568.8 461.2,568.8 461.2,575.2" fill="#e9e23f" fill-opacity="0.85"/><polygon points="458.9,591.4 458.9,584.9 458.2,584.9 458.2,582.9 461.9,582.9 461.9,584.9 461.2,584.9 461.2,591.4" fill="#e9e23f" fill-opacity="0.85"/><rect x="459.4" y="618.6" width="1.4" height="1.4" fill="#b4c6e6" fill-opacity="0.3"/><rect x="459.4" y="634.7" width="1.4" height="1.4" fill="#b4c6e6" fill-opacity="0.3"/><rect x="459.4" y="650.8" width="1.4" height="1.4" fill="#b4c6e6" fill-opacity="0.3"/><rect x="459.4" y="666.9" width="1.4" height="1.4" fill="#b4c6e6" fill-opacity="0.3"/><rect x="459.4" y="683.0" width="1.4" height="1.4" fill="#b4c6e6" fill-opacity="0.3"/><polygon points="459.3,701.8 458.8,699.2 458.0,699.3 457.9,698.4 461.6,697.7 461.8,698.7 461.0,698.8 461.4,701.4" fill="#b9cbea" fill-opacity="0.6"/><rect x="459.4" y="715.2" width="1.4" height="1.4" fill="#b4c6e6" fill-opacity="0.3"/><polygon points="459.3,734.0 458.8,731.4 458.0,731.5 457.9,730.6 461.6,729.9 461.8,730.9 461.0,731.0 461.4,733.6" fill="#b9cbea" fill-opacity="0.6"/><rect x="459.4" y="747.4" width="1.4" height="1.4" fill="#b4c6e6" fill-opacity="0.3"/><polygon points="459.3,766.2 458.8,763.6 458.0,763.7 457.9,762.8 461.6,762.1 461.8,763.1 461.0,763.2 461.4,765.8" fill="#b9cbea" fill-opacity="0.6"/><polygon points="458.9,782.1 458.9,779.5 458.2,779.5 458.2,778.5 461.9,778.5 461.9,779.5 461.2,779.5 461.2,782.1" fill="#b9cbea" fill-opacity="0.6"/><polygon points="458.4,797.7 459.3,795.3 458.5,795.0 458.9,794.1 462.5,795.4 462.1,796.3 461.4,796.0 460.5,798.5" fill="#b9cbea" fill-opacity="0.6"/><polygon points="458.9,814.3 458.9,811.7 458.2,811.7 458.2,810.7 461.9,810.7 461.9,811.7 461.2,811.7 461.2,814.3" fill="#b9cbea" fill-opacity="0.6"/><polygon points="118.9,591.2 114.6,590.8 114.5,591.6 112.8,591.4 113.2,587.6 114.9,587.8 114.8,588.6 119.1,589.0" fill="#d5dde9" fill-opacity="0.95"/><polygon points="132.9,594.0 129.9,591.5 129.4,592.1 128.2,591.1 130.6,588.2 131.8,589.2 131.3,589.8 134.3,592.3" fill="#d5dde9" fill-opacity="0.95"/><polygon points="164.4,594.0 161.4,591.5 160.9,592.1 159.7,591.1 162.1,588.2 163.3,589.2 162.8,589.8 165.8,592.3" fill="#d5dde9" fill-opacity="0.95"/><polygon points="177.7,593.9 176.1,591.1 175.4,591.5 174.7,590.4 178.0,588.5 178.7,589.6 178.0,590.0 179.6,592.8" fill="#b4c6e6" fill-opacity="0.95"/><polygon points="192.7,593.7 191.7,590.9 190.9,591.2 190.5,590.2 194.1,588.9 194.5,589.9 193.7,590.2 194.7,592.9" fill="#b4c6e6" fill-opacity="0.95"/><polygon points="208.3,593.6 207.8,590.7 207.0,590.9 206.8,589.8 210.5,589.1 210.7,590.2 209.9,590.3 210.4,593.2" fill="#b4c6e6" fill-opacity="0.95"/><polygon points="222.2,591.9 221.8,589.4 221.0,589.6 220.8,588.6 224.6,587.9 224.7,588.9 223.9,589.1 224.4,591.5" fill="#b4c6e6" fill-opacity="0.95"/><polygon points="118.3,606.5 114.7,605.9 114.6,606.7 113.2,606.4 113.9,602.7 115.2,602.9 115.1,603.7 118.7,604.4" fill="#d5dde9" fill-opacity="0.95"/><polygon points="129.7,609.5 128.6,606.4 127.9,606.7 127.4,605.5 131.0,604.2 131.4,605.4 130.7,605.7 131.8,608.7" fill="#b4c6e6" fill-opacity="0.95"/><polygon points="145.7,609.5 144.6,606.4 143.9,606.7 143.4,605.5 147.0,604.2 147.4,605.4 146.7,605.7 147.8,608.7" fill="#b4c6e6" fill-opacity="0.95"/><polygon points="161.8,607.6 159.5,604.9 158.8,605.4 157.9,604.3 160.8,601.9 161.7,602.9 161.1,603.5 163.4,606.2" fill="#d5dde9" fill-opacity="0.95"/><polygon points="176.2,609.0 173.7,607.5 173.3,608.2 172.3,607.6 174.2,604.4 175.2,604.9 174.8,605.6 177.3,607.0" fill="#b4c6e6" fill-opacity="0.95"/><polygon points="203.3,607.1 206.5,605.5 206.2,604.8 207.5,604.2 209.1,607.7 207.8,608.3 207.5,607.5 204.2,609.1" fill="#b4c6e6" fill-opacity="0.95"/><polygon points="216.3,606.9 219.9,606.2 219.8,605.4 221.1,605.2 221.8,608.9 220.4,609.2 220.3,608.4 216.7,609.0" fill="#b4c6e6" fill-opacity="0.95"/><polygon points="223.9,603.8 225.7,601.6 225.1,601.1 225.8,600.2 228.7,602.7 228.0,603.5 227.4,603.0 225.6,605.2" fill="#b4c6e6" fill-opacity="0.95"/><polygon points="98.6,608.4 102.4,603.8 101.8,603.2 103.1,601.7 106.0,604.2 104.7,605.7 104.1,605.2 100.3,609.8" fill="#efe56a" fill-opacity="0.95"/><polygon points="100.9,615.1 104.2,609.5 103.5,609.1 104.5,607.4 107.8,609.3 106.8,611.0 106.1,610.6 102.8,616.2" fill="#e9e23f" fill-opacity="0.95"/><polygon points="97.8,622.8 100.4,616.3 99.7,616.0 100.4,614.1 103.9,615.5 103.2,617.4 102.5,617.1 99.8,623.6" fill="#efe56a" fill-opacity="0.95"/><polygon points="99.9,629.8 100.6,625.5 99.9,625.4 100.1,623.7 103.9,624.4 103.6,626.0 102.8,625.9 102.1,630.1" fill="#e6e6a6" fill-opacity="0.95"/><polygon points="97.0,642.3 97.6,638.7 96.8,638.6 97.1,637.2 100.8,637.9 100.6,639.2 99.8,639.1 99.1,642.7" fill="#d5dde9" fill-opacity="0.95"/><polygon points="96.6,652.3 97.1,648.8 96.3,648.6 96.5,647.3 100.2,647.8 100.0,649.2 99.2,649.1 98.7,652.6" fill="#d5dde9" fill-opacity="0.95"/><polygon points="96.2,662.4 96.5,658.8 95.7,658.7 95.8,657.3 99.6,657.7 99.5,659.1 98.7,659.0 98.4,662.6" fill="#d5dde9" fill-opacity="0.95"/><polygon points="95.1,673.9 95.5,669.6 94.7,669.5 94.9,667.8 98.7,668.2 98.5,669.9 97.7,669.8 97.3,674.1" fill="#e2e4b0" fill-opacity="0.95"/><polygon points="95.0,684.1 92.9,680.4 92.2,680.8 91.4,679.4 94.6,677.5 95.5,678.9 94.8,679.3 97.0,683.0" fill="#efe56a" fill-opacity="0.95"/><polygon points="98.6,691.5 95.7,687.4 95.1,687.8 93.9,686.2 97.0,684.0 98.2,685.6 97.5,686.1 100.4,690.2" fill="#ecea98" fill-opacity="0.95"/><polygon points="98.3,701.7 96.5,698.6 95.8,699.0 95.1,697.8 98.4,695.9 99.1,697.1 98.4,697.5 100.2,700.6" fill="#d5dde9" fill-opacity="0.95"/><polygon points="109.7,617.0 112.2,615.6 111.8,614.9 112.8,614.4 114.7,617.6 113.7,618.2 113.3,617.5 110.8,619.0" fill="#b4c6e6" fill-opacity="0.95"/><polygon points="125.7,615.7 128.5,614.7 128.2,613.9 129.2,613.5 130.5,617.1 129.5,617.5 129.2,616.7 126.5,617.7" fill="#b4c6e6" fill-opacity="0.95"/><polygon points="142.0,614.4 144.5,613.7 144.3,613.0 145.2,612.7 146.2,616.4 145.2,616.6 145.0,615.9 142.6,616.5" fill="#b4c6e6" fill-opacity="0.95"/><polygon points="253.5,589.3 253.4,584.6 252.6,584.6 252.5,582.8 256.3,582.7 256.3,584.5 255.5,584.5 255.7,589.2" fill="#d5dde9" fill-opacity="0.95"/><polygon points="269.7,589.1 269.3,584.8 268.5,584.9 268.3,583.2 272.1,582.8 272.3,584.5 271.5,584.6 271.9,588.9" fill="#d5dde9" fill-opacity="0.95"/><polygon points="253.4,604.7 252.7,601.1 251.9,601.2 251.7,599.9 255.4,599.2 255.7,600.6 254.9,600.7 255.5,604.3" fill="#d5dde9" fill-opacity="0.95"/><polygon points="270.0,604.6 267.7,599.1 267.0,599.4 266.2,597.5 269.8,596.1 270.5,597.9 269.8,598.2 272.0,603.8" fill="#efe56a" fill-opacity="0.95"/><polygon points="282.7,613.6 281.5,606.7 280.7,606.9 280.3,604.9 284.1,604.2 284.4,606.2 283.6,606.3 284.9,613.2" fill="#e7c24e" fill-opacity="0.95"/><polygon points="253.3,620.7 252.1,617.3 251.3,617.6 250.9,616.3 254.4,615.0 254.9,616.3 254.2,616.6 255.4,620.0" fill="#d5dde9" fill-opacity="0.95"/><polygon points="269.8,621.2 266.4,615.7 265.7,616.1 264.6,614.4 267.9,612.4 268.9,614.1 268.2,614.5 271.7,620.0" fill="#efe56a" fill-opacity="0.95"/><polygon points="253.8,637.1 251.3,633.5 250.7,634.0 249.7,632.6 252.8,630.5 253.8,631.8 253.1,632.3 255.6,635.8" fill="#d5dde9" fill-opacity="0.95"/><polygon points="269.7,638.3 265.1,633.7 264.6,634.3 263.2,632.8 265.8,630.2 267.3,631.6 266.7,632.1 271.3,636.7" fill="#efe56a" fill-opacity="0.95"/><polygon points="254.0,653.1 251.9,649.4 251.2,649.8 250.4,648.4 253.6,646.5 254.5,647.9 253.8,648.3 256.0,652.0" fill="#d5dde9" fill-opacity="0.95"/><polygon points="270.0,653.5 266.3,651.3 265.9,652.0 264.5,651.1 266.4,647.9 267.8,648.7 267.4,649.4 271.1,651.5" fill="#d5dde9" fill-opacity="0.95"/><polygon points="253.1,668.8 252.8,664.9 252.0,665.0 251.9,663.4 255.7,663.1 255.8,664.6 255.0,664.7 255.3,668.6" fill="#e3e5b3" fill-opacity="0.95"/><polygon points="245.6,669.6 245.3,666.0 244.5,666.1 244.4,664.7 248.2,664.3 248.3,665.7 247.5,665.8 247.8,669.4" fill="#e3e5b3" fill-opacity="0.95"/><polygon points="270.1,670.2 267.0,668.4 266.6,669.1 265.4,668.4 267.3,665.1 268.5,665.8 268.1,666.5 271.2,668.3" fill="#d5dde9" fill-opacity="0.95"/><polygon points="278.4,671.0 284.1,669.4 283.9,668.6 285.9,668.1 286.9,671.8 284.9,672.3 284.7,671.5 278.9,673.1" fill="#efe56a" fill-opacity="0.95"/><polygon points="282.4,682.8 289.0,680.7 288.8,679.9 290.7,679.3 291.9,682.9 290.0,683.5 289.7,682.8 283.1,684.9" fill="#efe56a" fill-opacity="0.95"/><polygon points="296.4,685.5 303.0,683.1 302.7,682.4 304.6,681.7 305.9,685.2 304.0,685.9 303.7,685.2 297.1,687.6" fill="#efe56a" fill-opacity="0.95"/><polygon points="310.6,687.1 316.7,684.6 316.4,683.9 318.2,683.1 319.7,686.7 317.8,687.4 317.5,686.7 311.5,689.1" fill="#efe56a" fill-opacity="0.95"/><polygon points="325.9,686.8 330.3,684.3 329.9,683.6 331.6,682.6 333.5,685.9 331.8,686.9 331.4,686.2 327.0,688.7" fill="#efe56a" fill-opacity="0.95"/><polygon points="338.4,687.3 341.1,685.0 340.6,684.3 341.7,683.4 344.1,686.3 343.1,687.2 342.5,686.6 339.8,688.9" fill="#b4c6e6" fill-opacity="0.95"/><polygon points="346.5,686.3 347.1,682.7 346.3,682.6 346.6,681.2 350.3,681.9 350.1,683.2 349.3,683.1 348.6,686.7" fill="#b4c6e6" fill-opacity="0.95"/><polygon points="267.3,681.4 270.9,680.7 270.8,679.9 272.1,679.7 272.8,683.4 271.4,683.7 271.3,682.9 267.7,683.5" fill="#d5dde9" fill-opacity="0.95"/><polygon points="273.3,685.9 276.8,685.2 276.7,684.4 278.1,684.1 278.8,687.8 277.5,688.1 277.3,687.3 273.8,688.1" fill="#d5dde9" fill-opacity="0.95"/><polygon points="259.8,685.3 262.7,684.8 262.5,684.0 263.6,683.8 264.3,687.5 263.2,687.7 263.1,686.9 260.2,687.4" fill="#b4c6e6" fill-opacity="0.95"/><polygon points="365.2,676.3 364.8,671.7 364.0,671.7 363.8,669.9 367.6,669.6 367.8,671.4 367.0,671.5 367.4,676.1" fill="#efe56a" fill-opacity="0.95"/><polygon points="376.0,680.2 377.5,677.7 376.8,677.3 377.4,676.3 380.6,678.2 380.1,679.2 379.4,678.8 378.0,681.3" fill="#b4c6e6" fill-opacity="0.95"/><polygon points="300.6,643.2 297.5,641.4 297.1,642.1 295.9,641.4 297.8,638.1 299.0,638.8 298.6,639.5 301.7,641.3" fill="#d5dde9" fill-opacity="0.95"/><polygon points="215.8,681.8 219.2,680.6 218.9,679.8 220.2,679.4 221.5,682.9 220.2,683.4 219.9,682.7 216.5,683.9" fill="#d5dde9" fill-opacity="0.95"/><polygon points="223.5,687.5 226.7,686.7 226.5,685.9 227.7,685.6 228.7,689.3 227.4,689.6 227.2,688.8 224.1,689.6" fill="#d5dde9" fill-opacity="0.95"/><polygon points="193.9,686.6 196.8,686.3 196.7,685.5 197.8,685.4 198.2,689.2 197.0,689.3 197.0,688.5 194.1,688.8" fill="#b4c6e6" fill-opacity="0.95"/><polygon points="204.9,686.6 207.8,686.3 207.7,685.5 208.8,685.4 209.2,689.2 208.0,689.3 208.0,688.5 205.1,688.8" fill="#b4c6e6" fill-opacity="0.95"/><polygon points="406.5,568.2 407.9,561.3 407.2,561.2 407.6,559.2 411.3,560.0 410.9,561.9 410.1,561.8 408.6,568.6" fill="#e9e23f" fill-opacity="0.95"/><polygon points="407.5,585.2 408.9,578.3 408.2,578.2 408.6,576.2 412.3,577.0 411.9,578.9 411.1,578.8 409.6,585.6" fill="#e9e23f" fill-opacity="0.95"/><polygon points="405.3,600.1 407.0,593.3 406.3,593.1 406.7,591.2 410.4,592.1 409.9,594.0 409.2,593.8 407.5,600.6" fill="#efe56a" fill-opacity="0.95"/><polygon points="401.7,613.5 403.6,607.8 402.8,607.5 403.4,605.6 407.0,606.8 406.4,608.7 405.7,608.4 403.8,614.1" fill="#efe56a" fill-opacity="0.95"/><polygon points="412.3,620.1 414.1,613.3 413.3,613.1 413.8,611.2 417.5,612.1 417.0,614.1 416.2,613.9 414.4,620.6" fill="#e8b84a" fill-opacity="0.95"/><polygon points="402.3,633.8 404.9,627.3 404.2,627.0 404.9,625.1 408.4,626.5 407.7,628.4 407.0,628.1 404.3,634.6" fill="#efe56a" fill-opacity="0.95"/><polygon points="413.0,636.6 415.2,630.5 414.5,630.2 415.2,628.4 418.7,629.7 418.1,631.5 417.3,631.3 415.1,637.4" fill="#efe56a" fill-opacity="0.95"/><polygon points="427.9,620.5 427.9,614.5 427.1,614.5 427.1,612.5 430.9,612.5 430.9,614.5 430.1,614.5 430.1,620.5" fill="#efe56a" fill-opacity="0.95"/><polygon points="279.9,621.2 275.4,612.8 273.6,613.8 274.0,607.4 279.5,610.7 277.7,611.6 282.2,620.0" fill="#e22f1c"/><polygon points="286.4,654.4 277.4,653.8 277.3,655.6 272.5,652.2 277.7,649.6 277.6,651.4 286.6,652.0" fill="#ea861c"/><polygon points="303.4,670.7 295.1,674.2 295.8,675.8 290.1,675.0 293.5,670.3 294.2,672.0 302.5,668.5" fill="#ea861c"/></g><rect x="93" y="329.5" width="372.3" height="487.29999999999995" fill="none" stroke="#1c1c1e" stroke-width="1.3" rx="1.5"/><polygon points="207.9,332.7 402.7,329.8 402.7,382.6 399.5,440.0 392.6,498.5 278.3,500.4 275.7,380.1 209.4,385.8" fill="#cd5c5c" stroke="#8b0a0a" stroke-width="1.4" stroke-linejoin="round"/><polygon points="319.0,509.8 383.7,515.2 402.7,538.9 402.0,572.6 396.7,631.0 371.1,652.5 308.0,646.8 287.4,624.7 292.2,560.0 294.0,531.0" fill="#cd5c5c" stroke="#141414" stroke-width="1.4" stroke-linejoin="round"/><polygon points="103.7,621.6 238.8,611.5 244.2,672.7 103.7,683.8" fill="#cd5c5c" stroke="#8b0a0a" stroke-width="1.4" stroke-linejoin="round"/><polygon points="223.6,693.2 375.2,687.9 364.1,816.4 278.3,816.4 278.3,749.4 222.1,750.4" fill="#cd5c5c" stroke="#8b0a0a" stroke-width="1.4" stroke-linejoin="round"/></svg>
<div class="b" style="left:513.5px;top:282.0px;width:48.5px;height:48.9px;background:#e8413c;"></div>
<div class="b" style="left:513.5px;top:330.6px;width:48.5px;height:48.9px;background:#e4613b;"></div>
<div class="b" style="left:513.5px;top:379.3px;width:48.5px;height:48.9px;background:#dd8636;"></div>
<div class="b" style="left:513.5px;top:427.9px;width:48.5px;height:48.9px;background:#cb9b36;"></div>
<div class="b" style="left:513.5px;top:476.6px;width:48.5px;height:48.9px;background:#a8ad35;"></div>
<div class="b" style="left:513.5px;top:525.2px;width:48.5px;height:48.9px;background:#85b936;"></div>
<div class="b" style="left:513.5px;top:573.9px;width:48.5px;height:48.9px;background:#69b85c;"></div>
<div class="b" style="left:513.5px;top:622.5px;width:48.5px;height:48.9px;background:#4ab494;"></div>
<div class="b" style="left:513.5px;top:671.2px;width:48.5px;height:48.9px;background:#40a6aa;"></div>
<div class="b" style="left:513.5px;top:719.8px;width:48.5px;height:48.9px;background:#447cac;"></div>
<div class="b" style="left:513.5px;top:768.5px;width:48.5px;height:48.9px;background:#455aa8;"></div>
<div class="t" style="left:570.80px;top:262.96px;font:22.5px/1 'DejaVu Sans', sans-serif;color:#000;letter-spacing:0.260px;">m/s</div>
<div class="t" style="left:571.00px;top:312.16px;font:22.5px/1 'DejaVu Sans', sans-serif;color:#000;">15.00&lt;</div>
<div class="t" style="left:571.00px;top:360.81px;font:22.5px/1 'DejaVu Sans', sans-serif;color:#000;">13.50</div>
<div class="t" style="left:571.00px;top:409.46px;font:22.5px/1 'DejaVu Sans', sans-serif;color:#000;">12.00</div>
<div class="t" style="left:571.00px;top:458.11px;font:22.5px/1 'DejaVu Sans', sans-serif;color:#000;">10.50</div>
<div class="t" style="left:571.00px;top:506.76px;font:22.5px/1 'DejaVu Sans', sans-serif;color:#000;">9.00</div>
<div class="t" style="left:571.00px;top:555.42px;font:22.5px/1 'DejaVu Sans', sans-serif;color:#000;">7.50</div>
<div class="t" style="left:571.00px;top:604.06px;font:22.5px/1 'DejaVu Sans', sans-serif;color:#000;">6.00</div>
<div class="t" style="left:571.00px;top:652.72px;font:22.5px/1 'DejaVu Sans', sans-serif;color:#000;">4.50</div>
<div class="t" style="left:571.00px;top:701.37px;font:22.5px/1 'DejaVu Sans', sans-serif;color:#000;">3.00</div>
<div class="t" style="left:571.00px;top:750.01px;font:22.5px/1 'DejaVu Sans', sans-serif;color:#000;">1.50</div>
<div class="t" style="left:571.00px;top:798.67px;font:22.5px/1 'DejaVu Sans', sans-serif;color:#000;">&lt;0.00</div>
<div class="t" style="left:94.30px;top:866.47px;font:32.9px/1 'DejaVu Sans', sans-serif;color:#000;letter-spacing:0.215px;">Wind Velocity</div>
<svg width="60" height="60" style="left:95px;top:880px" viewBox="95 880 60 60"><path d="M102.8 891 L102.8 928.5 L139 928.5" fill="none" stroke="#707070" stroke-width="1.2"/></svg>
<div class="t" style="left:103.50px;top:881.50px;font:13px/1 'DejaVu Sans', sans-serif;color:#6a6a6a;">y</div>
<div class="t" style="left:142.50px;top:918.66px;font:14px/1 'DejaVu Sans', sans-serif;color:#555;">x</div>
<div class="b" style="left:644.3px;top:0px;width:630px;height:31px;background:#fff;"></div>
<div class="b" style="left:644.3px;top:31px;width:630px;height:34px;background:#f0f0f0;"></div>
<div class="b" style="left:644.3px;top:65px;width:630px;height:135px;background:#ebebeb;"></div>
<div class="b" style="left:639.3px;top:0px;width:5px;height:960px;background:linear-gradient(90deg,rgba(0,0,0,0),rgba(0,0,0,.13));"></div>
<div class="b" style="left:644.3px;top:0px;width:0.9px;height:200px;background:#a2a2a2;"></div>
<div class="t" style="left:654.00px;top:5.33px;font:15.8px/1 'Liberation Sans', sans-serif;color:#999;letter-spacing:-0.579px;">Grasshopper - Outdoor_CFD update*</div>
<div class="t" style="left:659.70px;top:41.35px;font:15.3px/1 'Liberation Sans', sans-serif;color:#000;letter-spacing:-0.313px;">File</div>
<div class="t" style="left:704.20px;top:41.35px;font:15.3px/1 'Liberation Sans', sans-serif;color:#000;letter-spacing:-0.041px;">Edit</div>
<div class="t" style="left:750.20px;top:41.35px;font:15.3px/1 'Liberation Sans', sans-serif;color:#000;letter-spacing:0.003px;">View</div>
<div class="t" style="left:803.20px;top:41.35px;font:15.3px/1 'Liberation Sans', sans-serif;color:#000;letter-spacing:0.005px;">Display</div>
<div class="t" style="left:873.20px;top:41.35px;font:15.3px/1 'Liberation Sans', sans-serif;color:#000;letter-spacing:0.064px;">Solution</div>
<div class="t" style="left:950.20px;top:41.35px;font:15.3px/1 'Liberation Sans', sans-serif;color:#000;letter-spacing:0.108px;">Help</div>
<div class="b" style="left:644.3px;top:92.5px;width:630px;height:1px;background:#9a9a9a;"></div>
<svg width="70" height="32" style="left:868px;top:62px" viewBox="868 62 70 32"><path d="M868 92.5 Q873.5 92.5 873.5 87 L873.5 72 Q873.5 66 879.5 66 L924 66 Q930 66 930 72 L930 87 Q930 92.5 936 92.5" fill="#fff" stroke="#9a9a9a" stroke-width="1"/><rect x="874" y="88" width="55.5" height="6" fill="#fff"/></svg>
<div class="t" style="left:654.30px;top:74.48px;font:12.9px/1 'Liberation Sans', sans-serif;color:#555;letter-spacing:0.143px;">Params</div>
<div class="t" style="left:720.60px;top:74.48px;font:12.9px/1 'Liberation Sans', sans-serif;color:#555;letter-spacing:0.114px;">Maths</div>
<div class="t" style="left:776.30px;top:74.48px;font:12.9px/1 'Liberation Sans', sans-serif;color:#555;letter-spacing:0.397px;">Sets</div>
<div class="t" style="left:824.30px;top:74.48px;font:12.9px/1 'Liberation Sans', sans-serif;color:#555;letter-spacing:0.405px;">Vector</div>
<div class="t" style="left:883.30px;top:72.28px;font:12.9px/1 'Liberation Sans', sans-serif;color:#000;letter-spacing:0.078px;">Curve</div>
<div class="t" style="left:938.00px;top:74.48px;font:12.9px/1 'Liberation Sans', sans-serif;color:#555;letter-spacing:0.263px;">Surface</div>
<div class="t" style="left:1005.30px;top:74.48px;font:12.9px/1 'Liberation Sans', sans-serif;color:#555;letter-spacing:0.364px;">Mesh</div>
<div class="t" style="left:1057.30px;top:74.48px;font:12.9px/1 'Liberation Sans', sans-serif;color:#555;letter-spacing:0.259px;">Intersect</div>
<div class="t" style="left:1129.30px;top:74.48px;font:12.9px/1 'Liberation Sans', sans-serif;color:#555;letter-spacing:0.078px;">Transform</div>
<div class="t" style="left:1209.30px;top:74.48px;font:12.9px/1 'Liberation Sans', sans-serif;color:#555;letter-spacing:0.100px;">Display</div>
<div class="b" style="left:649px;top:96px;width:216px;height:91px;border:1px solid #8c8c8c;border-radius:6px;box-shadow:0 0 0 1.2px rgba(255,255,255,.75);background:linear-gradient(#ededed,#dcdcdc 60%,#d2d2d2 80%);overflow:hidden;"><div class="b" style="left:76px;top:4px;width:1px;height:66px;background:linear-gradient(rgba(0,0,0,0),rgba(0,0,0,.18),rgba(0,0,0,0))"></div><div class="b" style="left:124px;top:4px;width:1px;height:66px;background:linear-gradient(rgba(0,0,0,0),rgba(0,0,0,.18),rgba(0,0,0,0))"></div><div class="b" style="left:170.5px;top:4px;width:1px;height:66px;background:linear-gradient(rgba(0,0,0,0),rgba(0,0,0,.18),rgba(0,0,0,0))"></div><div class="b" style="left:-1px;top:72px;width:216px;height:19px;background:linear-gradient(#3a3a3a,#111);"></div></div>
<div class="t" style="left:727.05px;top:170.88px;font:12.9px/1 'Liberation Sans', sans-serif;color:#fff;letter-spacing:-0.192px;">Analysis</div>
<svg width="9" height="9" style="left:851.5px;top:173.5px" viewBox="0 0 9 9"><path d="M3.5 0 L5.5 0 L5.5 3 L9 3 L4.5 8.5 L0 3 L3.5 3 Z" fill="#8c8c8c"/><rect x="0" y="3" width="9" height="1.6" fill="#8c8c8c"/></svg>
<div class="b" style="left:869.5px;top:96px;width:86.5px;height:91px;border:1px solid #8c8c8c;border-radius:6px;box-shadow:0 0 0 1.2px rgba(255,255,255,.75);background:linear-gradient(#ededed,#dcdcdc 60%,#d2d2d2 80%);overflow:hidden;"><div class="b" style="left:41.0px;top:4px;width:1px;height:66px;background:linear-gradient(rgba(0,0,0,0),rgba(0,0,0,.18),rgba(0,0,0,0))"></div><div class="b" style="left:-1px;top:72px;width:86.5px;height:19px;background:linear-gradient(#3a3a3a,#111);"></div></div>
<div class="t" style="left:884.10px;top:170.88px;font:12.9px/1 'Liberation Sans', sans-serif;color:#fff;letter-spacing:-0.145px;">Division</div>
<svg width="9" height="9" style="left:942.5px;top:173.5px" viewBox="0 0 9 9"><path d="M3.5 0 L5.5 0 L5.5 3 L9 3 L4.5 8.5 L0 3 L3.5 3 Z" fill="#8c8c8c"/><rect x="0" y="3" width="9" height="1.6" fill="#8c8c8c"/></svg>
<div class="b" style="left:960.5px;top:96px;width:133.5px;height:91px;border:1px solid #8c8c8c;border-radius:6px;box-shadow:0 0 0 1.2px rgba(255,255,255,.75);background:linear-gradient(#ededed,#dcdcdc 60%,#d2d2d2 80%);overflow:hidden;"><div class="b" style="left:41.0px;top:4px;width:1px;height:66px;background:linear-gradient(rgba(0,0,0,0),rgba(0,0,0,.18),rgba(0,0,0,0))"></div><div class="b" style="left:87.5px;top:4px;width:1px;height:66px;background:linear-gradient(rgba(0,0,0,0),rgba(0,0,0,.18),rgba(0,0,0,0))"></div><div class="b" style="left:-1px;top:72px;width:133.5px;height:19px;background:linear-gradient(#3a3a3a,#111);"></div></div>
<div class="t" style="left:997.00px;top:170.88px;font:12.9px/1 'Liberation Sans', sans-serif;color:#fff;letter-spacing:-0.184px;">Primitive</div>
<svg width="9" height="9" style="left:1080.5px;top:173.5px" viewBox="0 0 9 9"><path d="M3.5 0 L5.5 0 L5.5 3 L9 3 L4.5 8.5 L0 3 L3.5 3 Z" fill="#8c8c8c"/><rect x="0" y="3" width="9" height="1.6" fill="#8c8c8c"/></svg>
<div class="b" style="left:1098px;top:96px;width:121.5px;height:91px;border:1px solid #8c8c8c;border-radius:6px;box-shadow:0 0 0 1.2px rgba(255,255,255,.75);background:linear-gradient(#ededed,#dcdcdc 60%,#d2d2d2 80%);overflow:hidden;"><div class="b" style="left:76px;top:4px;width:1px;height:66px;background:linear-gradient(rgba(0,0,0,0),rgba(0,0,0,.18),rgba(0,0,0,0))"></div><div class="b" style="left:-1px;top:72px;width:121.5px;height:19px;background:linear-gradient(#3a3a3a,#111);"></div></div>
<div class="t" style="left:1135.00px;top:170.88px;font:12.9px/1 'Liberation Sans', sans-serif;color:#fff;letter-spacing:0.023px;">Spline</div>
<svg width="9" height="9" style="left:1206.0px;top:173.5px" viewBox="0 0 9 9"><path d="M3.5 0 L5.5 0 L5.5 3 L9 3 L4.5 8.5 L0 3 L3.5 3 Z" fill="#8c8c8c"/><rect x="0" y="3" width="9" height="1.6" fill="#8c8c8c"/></svg>
<div class="b" style="left:1224px;top:96px;width:76px;height:91px;border:1px solid #8c8c8c;border-radius:6px;box-shadow:0 0 0 1.2px rgba(255,255,255,.75);background:linear-gradient(#ededed,#dcdcdc 60%,#d2d2d2 80%);overflow:hidden;"><div class="b" style="left:-1px;top:72px;width:76px;height:19px;background:linear-gradient(#3a3a3a,#111);"></div></div>
<div class="b" style="left:644.3px;top:197px;width:630px;height:1px;background:#f4f4f4;"></div>
<div class="b" style="left:646.1px;top:199.6px;width:630px;height:1.4px;background:#6e6e6e;"></div>
<div class="b" style="left:647px;top:200.5px;width:630px;height:38.4px;background:linear-gradient(#fdfdfd,#f6f6f6 50%,#efefef);"></div>
<div class="b" style="left:722px;top:205px;width:1px;height:30px;background:#c8c8c8;"></div>
<div class="b" style="left:727px;top:206.5px;width:180px;height:27.5px;background:#fff;border:1px solid #7a7a7a;"></div>
<div class="t" style="left:730.00px;top:212.35px;font:15.3px/1 'Liberation Sans', sans-serif;color:#000;letter-spacing:-0.874px;">77%</div>
<svg width="12" height="8" style="left:891px;top:217px"><path d="M1 1.2 L5.7 6 L10.4 1.2" fill="none" stroke="#333" stroke-width="1.1"/></svg>
<div class="b" style="left:647px;top:238.9px;width:630px;height:721.1px;background:#d4cfc7;"></div>
<div class="b" style="left:647px;top:472px;width:17px;height:1px;background:#bcb8b0;"></div>
<div class="b" style="left:647px;top:510px;width:17px;height:1px;background:#bcb8b0;"></div>
<div class="b" style="left:647px;top:548px;width:17px;height:1px;background:#bcb8b0;"></div>
<div class="b" style="left:647px;top:586px;width:17px;height:1px;background:#bcb8b0;"></div>
<div class="b" style="left:647px;top:625px;width:17px;height:1px;background:#bcb8b0;"></div>
<div class="b" style="left:647px;top:663px;width:17px;height:1px;background:#bcb8b0;"></div>
<div class="b" style="left:647px;top:701px;width:17px;height:1px;background:#bcb8b0;"></div>
<div class="b" style="left:647px;top:739px;width:17px;height:1px;background:#bcb8b0;"></div>
<div class="b" style="left:647px;top:778px;width:17px;height:1px;background:#bcb8b0;"></div>
<div class="b" style="left:647px;top:816px;width:17px;height:1px;background:#bcb8b0;"></div>
<div class="b" style="left:647px;top:854px;width:17px;height:1px;background:#bcb8b0;"></div>
<div class="b" style="left:647px;top:892px;width:17px;height:1px;background:#bcb8b0;"></div>
<div class="b" style="left:647px;top:930px;width:17px;height:1px;background:#bcb8b0;"></div>
<div class="b" style="left:644.3px;top:200.5px;width:1.9px;height:760px;background:#e6e6e6;"></div>
<div class="b" style="left:646.1px;top:200.5px;width:1px;height:760px;background:#777;"></div>
<svg width="620.9" height="231" style="left:647.1px;top:239px;overflow:hidden" viewBox="647.1 239 620.9 231"><defs><linearGradient id="cg" x1="0" y1="0" x2="0" y2="1"><stop offset="0" stop-color="#ebebeb"/><stop offset="1" stop-color="#c6c6c6"/></linearGradient><linearGradient id="pg" x1="0" y1="0" x2="0" y2="1"><stop offset="0" stop-color="#abaabb"/><stop offset="1" stop-color="#8b8a9b"/></linearGradient><linearGradient id="kg" x1="0" y1="0" x2="1" y2="0"><stop offset="0" stop-color="#323232"/><stop offset="0.5" stop-color="#474747"/><stop offset="1" stop-color="#2c2c2c"/></linearGradient></defs><rect x="727.0" y="239" width="1" height="220" fill="#b3afa7"/><rect x="843.0" y="239" width="1" height="220" fill="#b3afa7"/><rect x="958.0" y="239" width="1" height="220" fill="#b3afa7"/><rect x="1073.0" y="239" width="1" height="220" fill="#b3afa7"/><rect x="1188.0" y="239" width="1" height="220" fill="#b3afa7"/><rect x="646" y="243.0" width="622" height="1" fill="#bcb8b0"/><rect x="646" y="281.0" width="622" height="1" fill="#bcb8b0"/><rect x="646" y="320.0" width="622" height="1" fill="#bcb8b0"/><rect x="646" y="358.0" width="622" height="1" fill="#bcb8b0"/><rect x="646" y="396.0" width="622" height="1" fill="#bcb8b0"/><rect x="646" y="434.0" width="622" height="1" fill="#bcb8b0"/><path d="M752 338 L824 338" fill="none" stroke="#5a5a5a" stroke-width="4" stroke-linecap="round"/><path d="M752 338 L824 338" fill="none" stroke="#d9d5ce" stroke-width="1.4" stroke-linecap="round"/><path d="M753 347 C785 347 795 353.5 824 353.5" fill="none" stroke="#5a5a5a" stroke-width="2.2" stroke-linecap="round"/><path d="M646 369.2 L824 369.2" fill="none" stroke="#5a5a5a" stroke-width="2.6" stroke-linecap="round"/><path d="M641 468 C700 410 760 384 824 384" fill="none" stroke="#5a5a5a" stroke-width="4" stroke-linecap="round"/><path d="M641 468 C700 410 760 384 824 384" fill="none" stroke="#d9d5ce" stroke-width="1.4" stroke-linecap="round"/><path d="M789 470 C789 425 800 414.6 824 414.6" fill="none" stroke="#5a5a5a" stroke-width="2.2" stroke-linecap="round"/><path d="M792 470 C793 440 805 430 824 430" fill="none" stroke="#5a5a5a" stroke-width="2.2" stroke-linecap="round"/><path d="M1002 368.5 C1030 366 1012 345 1006 320 C1002 300 1010 296 1025 296" fill="none" stroke="#5a5a5a" stroke-width="2.2" stroke-linecap="round"/><path d="M1002 353.4 L1028 354" fill="none" stroke="#5a5a5a" stroke-width="2.2" stroke-linecap="round"/><path d="M1002 399.5 L1027 399.5" fill="none" stroke="#5a5a5a" stroke-width="4" stroke-linecap="round"/><path d="M1002 399.5 L1027 399.5" fill="none" stroke="#d9d5ce" stroke-width="1.4" stroke-linecap="round"/><path d="M915 470 C960 440 985 415 1027 400" fill="none" stroke="#5a5a5a" stroke-width="4" stroke-linecap="round"/><path d="M915 470 C960 440 985 415 1027 400" fill="none" stroke="#d9d5ce" stroke-width="1.4" stroke-linecap="round"/><path d="M1123 352.5 C1170 335 1220 322 1268 317.5" fill="none" stroke="#5a5a5a" stroke-width="4" stroke-linecap="round"/><path d="M1123 352.5 C1170 335 1220 322 1268 317.5" fill="none" stroke="#d9d5ce" stroke-width="1.4" stroke-linecap="round"/><path d="M1151 385 C1190 400 1215 430 1236 470" fill="none" stroke="#5a5a5a" stroke-width="2.4" stroke-linecap="round"/><path d="M1151 374 C1180 379 1200 380 1224 380" fill="none" stroke="#9a978f" stroke-width="0.8" stroke-linecap="round"/><path d="M1206 432.5 C1215 432 1215 426 1224 425.6" fill="none" stroke="#5a5a5a" stroke-width="2.2" stroke-linecap="round"/></svg>
<div class="b" style="left:748.8px;top:303.8px;width:6.4px;height:7.4px;border-radius:50%;background:#fff;border:1.7px solid #1a1a1a;"></div><div class="b" style="left:748.8px;top:343.2px;width:6.4px;height:7.4px;border-radius:50%;background:#fff;border:1.7px solid #1a1a1a;"></div><div class="b" style="left:822.0px;top:334.5px;width:6.4px;height:7.4px;border-radius:50%;background:#fff;border:1.7px solid #1a1a1a;"></div><div class="b" style="left:822.0px;top:349.8px;width:6.4px;height:7.4px;border-radius:50%;background:#fff;border:1.7px solid #1a1a1a;"></div><div class="b" style="left:822.0px;top:365.2px;width:6.4px;height:7.4px;border-radius:50%;background:#fff;border:1.7px solid #1a1a1a;"></div><div class="b" style="left:822.0px;top:380.5px;width:6.4px;height:7.4px;border-radius:50%;background:#fff;border:1.7px solid #1a1a1a;"></div><div class="b" style="left:822.0px;top:395.8px;width:6.4px;height:7.4px;border-radius:50%;background:#fff;border:1.7px solid #1a1a1a;"></div><div class="b" style="left:822.0px;top:411.1px;width:6.4px;height:7.4px;border-radius:50%;background:#fff;border:1.7px solid #1a1a1a;"></div><div class="b" style="left:822.0px;top:426.7px;width:6.4px;height:7.4px;border-radius:50%;background:#fff;border:1.7px solid #1a1a1a;"></div><div class="b" style="left:997.8px;top:334.5px;width:6.4px;height:7.4px;border-radius:50%;background:#fff;border:1.7px solid #1a1a1a;"></div><div class="b" style="left:997.8px;top:349.8px;width:6.4px;height:7.4px;border-radius:50%;background:#fff;border:1.7px solid #1a1a1a;"></div><div class="b" style="left:997.8px;top:365.2px;width:6.4px;height:7.4px;border-radius:50%;background:#fff;border:1.7px solid #1a1a1a;"></div><div class="b" style="left:997.8px;top:380.5px;width:6.4px;height:7.4px;border-radius:50%;background:#fff;border:1.7px solid #1a1a1a;"></div><div class="b" style="left:997.8px;top:395.8px;width:6.4px;height:7.4px;border-radius:50%;background:#fff;border:1.7px solid #1a1a1a;"></div><div class="b" style="left:997.8px;top:411.1px;width:6.4px;height:7.4px;border-radius:50%;background:#fff;border:1.7px solid #1a1a1a;"></div><div class="b" style="left:997.8px;top:426.7px;width:6.4px;height:7.4px;border-radius:50%;background:#fff;border:1.7px solid #1a1a1a;"></div><div class="b" style="left:1022.0px;top:292.3px;width:6.4px;height:7.4px;border-radius:50%;background:#fff;border:1.7px solid #1a1a1a;"></div><div class="b" style="left:1145.3999999999999px;top:292.3px;width:6.4px;height:7.4px;border-radius:50%;background:#fff;border:1.7px solid #1a1a1a;"></div><div class="b" style="left:1024.1px;top:395.8px;width:6.4px;height:7.4px;border-radius:50%;background:#fff;border:1.7px solid #1a1a1a;"></div><div class="b" style="left:1147.8px;top:395.8px;width:6.4px;height:7.4px;border-radius:50%;background:#fff;border:1.7px solid #1a1a1a;"></div><div class="b" style="left:1162.0px;top:429.0px;width:6.4px;height:7.4px;border-radius:50%;background:#fff;border:1.7px solid #1a1a1a;"></div><div class="b" style="left:1201.3999999999999px;top:429.0px;width:6.4px;height:7.4px;border-radius:50%;background:#fff;border:1.7px solid #1a1a1a;"></div><div class="b" style="left:1222.0px;top:376.3px;width:6.4px;height:7.4px;border-radius:50%;background:#fff;border:1.7px solid #1a1a1a;"></div><div class="b" style="left:1222.0px;top:421.90000000000003px;width:6.4px;height:7.4px;border-radius:50%;background:#fff;border:1.7px solid #1a1a1a;"></div>
<div class="b" style="left:647px;top:287px;width:104.5px;height:81.5px;background:linear-gradient(#ececec,#c8c8c8);border:1px solid #444;border-left:none;border-radius:0 3px 3px 0;box-shadow:0 1px 2px rgba(0,0,0,.35);"></div>
<div class="b" style="left:698.3px;top:288.3px;width:20px;height:79px;background:linear-gradient(90deg,#2c2c2c,#474747 50%,#2a2a2a);border:1px solid #111;border-radius:3px;"></div>
<div class="t" style="left:698.3px;top:288.3px;width:20px;height:79px;"><div style="position:absolute;left:50%;top:50%;transform:translate(-50%,-50%) rotate(-90deg);font:bold 8.5px/1 'DejaVu Sans',sans-serif;color:#fff;white-space:pre;letter-spacing:-0.2px;">Steady Incom p</div></div>
<div class="b" style="left:647.2px;top:288px;width:47.8px;height:80px;overflow:hidden"><div style="position:absolute;right:0;top:4.89px;font:7.7px/1 'DejaVu Sans',sans-serif;color:#222;white-space:pre;letter-spacing:-0.217px">turbulence_prop_</div><div style="position:absolute;right:0;top:20.19px;font:7.7px/1 'DejaVu Sans',sans-serif;color:#222;white-space:pre;letter-spacing:-0.232px">fv_schemes_</div><div style="position:absolute;right:0;top:35.59px;font:7.7px/1 'DejaVu Sans',sans-serif;color:#222;white-space:pre;letter-spacing:-0.197px">fv_solution_</div><div style="position:absolute;right:0;top:51.19px;font:7.7px/1 'DejaVu Sans',sans-serif;color:#222;white-space:pre;letter-spacing:-0.198px">residual_control_</div><div style="position:absolute;right:0;top:66.99px;font:7.7px/1 'DejaVu Sans',sans-serif;color:#222;white-space:pre;letter-spacing:-0.199px">relaxation_factors_</div></div>
<div class="t" style="left:721.00px;top:304.49px;font:7.7px/1 'DejaVu Sans', sans-serif;color:#222;letter-spacing:-0.204px;">report</div>
<div class="t" style="left:721.00px;top:343.89px;font:7.7px/1 'DejaVu Sans', sans-serif;color:#222;letter-spacing:-0.205px;">recipe</div>


<div class="b" style="left:825.2px;top:329.4px;width:175.3px;height:110.2px;background:linear-gradient(#ececec,#c6c6c6);border:1px solid #444;border-radius:3px;box-shadow:0 1px 2px rgba(0,0,0,.35);"></div>
<div class="b" style="left:914px;top:331px;width:20px;height:107.5px;background:linear-gradient(90deg,#2c2c2c,#474747 50%,#2a2a2a);border:1px solid #111;border-radius:3.5px;"></div>
<div class="t" style="left:914px;top:331px;width:20px;height:107.5px;"><div style="position:absolute;left:50%;top:50%;transform:translate(-50%,-50%) rotate(-90deg);font:bold 9.2px/1 'DejaVu Sans',sans-serif;color:#fff;white-space:pre;">solution</div></div>
<div class="t" style="left:889.37px;top:335.19px;font:7.7px/1 'DejaVu Sans', sans-serif;color:#222;letter-spacing:-0.224px;">_case</div>

<div class="t" style="left:883.65px;top:350.49px;font:7.7px/1 'DejaVu Sans', sans-serif;color:#222;letter-spacing:-0.205px;">_recipe</div>

<div class="t" style="left:831.09px;top:365.89px;font:7.7px/1 'DejaVu Sans', sans-serif;color:#222;letter-spacing:-0.227px;">decompose_par_dict_</div>

<div class="t" style="left:861.48px;top:381.19px;font:7.7px/1 'DejaVu Sans', sans-serif;color:#222;letter-spacing:-0.204px;">solution_par_</div>

<div class="t" style="left:874.67px;top:396.49px;font:7.7px/1 'DejaVu Sans', sans-serif;color:#222;letter-spacing:-0.193px;">_interval_</div>

<div class="t" style="left:887.80px;top:411.79px;font:7.7px/1 'DejaVu Sans', sans-serif;color:#222;letter-spacing:-0.201px;">_write</div>

<div class="t" style="left:893.90px;top:427.39px;font:7.7px/1 'DejaVu Sans', sans-serif;color:#222;letter-spacing:-0.218px;">run_</div>

<div class="t" style="left:936.50px;top:335.19px;font:7.7px/1 'DejaVu Sans', sans-serif;color:#222;letter-spacing:-0.204px;">report</div>

<div class="t" style="left:936.50px;top:350.49px;font:7.7px/1 'DejaVu Sans', sans-serif;color:#222;letter-spacing:-0.198px;">solution</div>

<div class="t" style="left:936.50px;top:365.89px;font:7.7px/1 'DejaVu Sans', sans-serif;color:#222;letter-spacing:-0.206px;">is_running</div>

<div class="t" style="left:936.50px;top:381.19px;font:7.7px/1 'DejaVu Sans', sans-serif;color:#222;letter-spacing:-0.221px;">timestep</div>

<div class="t" style="left:936.50px;top:396.49px;font:7.7px/1 'DejaVu Sans', sans-serif;color:#222;letter-spacing:-0.190px;">residual_fields</div>

<div class="t" style="left:936.50px;top:411.79px;font:7.7px/1 'DejaVu Sans', sans-serif;color:#222;letter-spacing:-0.206px;">residual_values</div>

<div class="t" style="left:936.50px;top:427.39px;font:7.7px/1 'DejaVu Sans', sans-serif;color:#222;letter-spacing:-0.181px;">log_files</div>

<div class="b" style="left:1025.2px;top:276.6px;width:123.2px;height:37.2px;background:#fff;border:1px solid #444;border-radius:3px;box-shadow:0 1px 2px rgba(0,0,0,.3);overflow:hidden;"></div>
<div class="b" style="left:1026.2px;top:277.6px;width:121.2px;height:13.6px;background:#dcdcdc;"></div>
<div class="b" style="left:1035.6px;top:277.6px;width:1px;height:35px;background:#e2e2e2;"></div>
<div class="t" style="left:1114.00px;top:281.17px;font:7.6px/1 'Liberation Mono', monospace;color:#444;letter-spacing:0.139px;">{0;0}</div>
<div class="t" style="left:1028.70px;top:293.32px;font:7.8px/1 'Liberation Mono', monospace;color:#333;">0</div>
<div class="t" style="left:1037.50px;top:293.32px;font:7.8px/1 'Liberation Mono', monospace;color:#333;letter-spacing:0.369px;">True</div>


<div class="b" style="left:1027.3px;top:352.7px;width:123.4px;height:94.4px;background:#fff;border:1px solid #444;border-radius:3px;box-shadow:0 1px 2px rgba(0,0,0,.3);"></div>
<div class="b" style="left:1028.3px;top:353.7px;width:121.4px;height:13.4px;background:#dcdcdc;"></div>
<div class="t" style="left:1030.60px;top:369.52px;font:7.8px/1 'Liberation Mono', monospace;color:#444;">0</div>
<div class="t" style="left:1039.80px;top:369.52px;font:7.8px/1 'Liberation Mono', monospace;color:#333;letter-spacing:0.328px;">Ux</div>
<div class="b" style="left:1028.3px;top:378.9px;width:121.4px;height:12.2px;background:#f3f3f3;"></div>
<div class="t" style="left:1030.60px;top:381.72px;font:7.8px/1 'Liberation Mono', monospace;color:#444;">1</div>
<div class="t" style="left:1039.80px;top:381.72px;font:7.8px/1 'Liberation Mono', monospace;color:#333;letter-spacing:0.328px;">Uy</div>
<div class="t" style="left:1030.60px;top:394.02px;font:7.8px/1 'Liberation Mono', monospace;color:#444;">2</div>
<div class="t" style="left:1039.80px;top:394.02px;font:7.8px/1 'Liberation Mono', monospace;color:#333;letter-spacing:0.328px;">Uz</div>
<div class="b" style="left:1028.3px;top:403.4px;width:121.4px;height:12.2px;background:#f3f3f3;"></div>
<div class="t" style="left:1030.60px;top:406.22px;font:7.8px/1 'Liberation Mono', monospace;color:#444;">3</div>
<div class="t" style="left:1039.80px;top:406.22px;font:7.8px/1 'Liberation Mono', monospace;color:#333;letter-spacing:0.328px;">p</div>
<div class="t" style="left:1030.60px;top:418.52px;font:7.8px/1 'Liberation Mono', monospace;color:#444;">4</div>
<div class="t" style="left:1039.80px;top:418.52px;font:7.8px/1 'Liberation Mono', monospace;color:#333;letter-spacing:0.328px;">k</div>
<div class="b" style="left:1028.3px;top:427.9px;width:121.4px;height:12.2px;background:#f3f3f3;"></div>
<div class="t" style="left:1030.60px;top:430.72px;font:7.8px/1 'Liberation Mono', monospace;color:#444;">5</div>
<div class="t" style="left:1039.80px;top:430.72px;font:7.8px/1 'Liberation Mono', monospace;color:#333;letter-spacing:0.328px;">epsilon</div>
<div class="b" style="left:1038px;top:353.7px;width:1px;height:92.4px;background:#e2e2e2;"></div>
<div class="t" style="left:1106.50px;top:356.77px;font:7.6px/1 'Liberation Mono', monospace;color:#444;letter-spacing:0.225px;">{0;0;0}</div>


<div class="b" style="left:1165.2px;top:424.1px;width:39.2px;height:17.6px;background:#fff;border:1px solid #444;border-radius:3.5px;box-shadow:0 1px 1px rgba(0,0,0,.3);"></div>
<div class="t" style="left:1181.50px;top:429.83px;font:7.4px/1 'Liberation Mono', monospace;color:#333;">U</div>


<div class="b" style="left:1225.6px;top:355.6px;width:60px;height:94.6px;background:linear-gradient(#acabbc,#8b8a9b);border:1px solid #3c3c44;border-radius:3px;"></div>
<div class="t" style="left:1231.50px;top:376.99px;font:7.7px/1 'DejaVu Sans', sans-serif;color:#1a1a1a;letter-spacing:-0.198px;">_solution</div>
<div class="t" style="left:1245.00px;top:422.59px;font:7.7px/1 'DejaVu Sans', sans-serif;color:#1a1a1a;letter-spacing:-0.177px;">_field</div>


<svg width="622" height="100" style="left:645px;top:92px;filter:drop-shadow(0 0.6px 0.7px rgba(0,0,0,.35))" viewBox="645 92 622 100"><defs><linearGradient id="og" x1="0" y1="0" x2="0" y2="1"><stop offset="0" stop-color="#ffd21a"/><stop offset="1" stop-color="#ff8a00"/></linearGradient><linearGradient id="cv" x1="0" y1="1" x2="1" y2="0"><stop offset="0" stop-color="#111"/><stop offset="0.22" stop-color="#111"/><stop offset="0.3" stop-color="#e01010"/><stop offset="0.42" stop-color="#ffb000"/><stop offset="0.5" stop-color="#ffdd40"/><stop offset="0.6" stop-color="#ffb000"/><stop offset="0.72" stop-color="#e01010"/><stop offset="0.82" stop-color="#111"/><stop offset="1" stop-color="#111"/></linearGradient></defs><g transform="translate(645,92) scale(0.12626)" fill="none" stroke-linecap="round" stroke-linejoin="round"><rect x="110" y="108" width="152" height="154" stroke="#7a7a7a" stroke-width="9"/><circle cx="185" cy="185" r="52" stroke="#7d0a0a" stroke-width="18"/><circle cx="110" cy="108" r="19" fill="#fff" stroke="#111" stroke-width="8"/><circle cx="262" cy="108" r="19" fill="#fff" stroke="#111" stroke-width="8"/><circle cx="110" cy="262" r="19" fill="#fff" stroke="#111" stroke-width="8"/><circle cx="262" cy="262" r="19" fill="#fff" stroke="#111" stroke-width="8"/><path d="M385 262 C485 262 440 110 540 108" stroke="#7d0a0a" stroke-width="19"/><circle cx="385" cy="262" r="22" fill="#fff" stroke="#111" stroke-width="8"/><circle cx="540" cy="108" r="22" fill="#fff" stroke="#111" stroke-width="8"/><path d="M935 182 C870 195 845 230 832 282" stroke="#7d0a0a" stroke-width="19"/><path d="M762 113 L835 182" stroke="#111" stroke-width="8"/><path d="M850 196 L816 184 L836 163 Z" fill="#111"/><circle cx="762" cy="113" r="18" fill="#fff" stroke="#111" stroke-width="8"/><circle cx="865" cy="215" r="18" fill="#fff" stroke="#111" stroke-width="8"/><circle cx="180" cy="457" r="80" stroke="#7d0a0a" stroke-width="20"/><path d="M80 457 L285 457 M180 355 L180 560" stroke="#111" stroke-width="7" stroke-dasharray="8 12"/><circle cx="180" cy="457" r="9" stroke="#111" stroke-width="7"/><path d="M380 440 L440 380 L545 380 L545 545 L380 545 Z" stroke="#7d0a0a" stroke-width="20"/><path d="M440 457 L474 457 M457 440 L457 474" stroke="#111" stroke-width="9"/><circle cx="380" cy="440" r="19" fill="#fff" stroke="#111" stroke-width="8"/><circle cx="440" cy="380" r="19" fill="#fff" stroke="#111" stroke-width="8"/><circle cx="545" cy="380" r="19" fill="#fff" stroke="#111" stroke-width="8"/><circle cx="545" cy="545" r="19" fill="#fff" stroke="#111" stroke-width="8"/><circle cx="380" cy="545" r="19" fill="#fff" stroke="#111" stroke-width="8"/><path d="M795 440 L735 462" stroke="#1a9a1a" stroke-width="16"/><path d="M722 467 L751 439 L762 470 Z" fill="#1a9a1a"/><path d="M795 440 L832 375" stroke="#d01818" stroke-width="12"/><path d="M843 352 L840 392 L811 377 Z" fill="#d01818"/><path d="M770 545 C775 470 820 420 915 410" stroke="#111" stroke-width="17"/><path d="M850 488 L825 462" stroke="#111" stroke-width="8"/><path d="M815 452 L843 463 L826 480 Z" fill="#111"/><circle cx="770" cy="545" r="19" fill="#fff" stroke="#111" stroke-width="8"/><circle cx="915" cy="410" r="19" fill="#fff" stroke="#111" stroke-width="8"/></g><g transform="translate(775,92) scale(0.12626)" fill="none" stroke-linecap="round" stroke-linejoin="round"><path d="M112 88 L112 195 Q112 218 140 214 M78 128 L148 128" stroke="#111" stroke-width="17"/><path d="M80 275 C200 270 150 95 275 95" stroke="#7d0a0a" stroke-width="19"/><path d="M150 252 L240 162" stroke="#111" stroke-width="8"/><path d="M262 142 L248 177 L227 156 Z" fill="#111"/><circle cx="150" cy="252" r="20" fill="#fff" stroke="#111" stroke-width="8"/><path d="M85 555 C100 450 170 385 275 372" stroke="url(#cv)" stroke-width="19"/><path d="M80 365 L120 405 M205 490 L165 450" stroke="#111" stroke-width="8"/><path d="M125 410 L97 399 L114 382 Z" fill="#111"/><path d="M160 445 L188 456 L171 473 Z" fill="#111"/><circle cx="140" cy="425" r="20" fill="#fff" stroke="#111" stroke-width="8"/><path d="M505 270 C520 200 570 160 640 145" stroke="#7d0a0a" stroke-width="19"/><path d="M460 270 L485 270 M470 207 L492 215 M510 148 L528 163 M570 108 L580 130" stroke="#111" stroke-width="8"/><circle cx="590" cy="153" r="18" fill="#fff" stroke="#111" stroke-width="8"/><path d="M550 560 L550 500 Q555 430 630 420 M530 560 L570 560 M630 405 L630 440" stroke="#7d0a0a" stroke-width="18"/><path d="M500 530 Q500 400 600 385" stroke="#111" stroke-width="8"/><path d="M632 383 L599 401 L596 371 Z" fill="#111"/><path d="M500 562 L485 527 L515 527 Z" fill="#111"/><path d="M825 258 L888 228 L907 145 L970 113" stroke="#7d0a0a" stroke-width="18"/><circle cx="825" cy="258" r="19" fill="#fff" stroke="#111" stroke-width="8"/><circle cx="888" cy="228" r="19" fill="#fff" stroke="#111" stroke-width="8"/><circle cx="907" cy="145" r="19" fill="#fff" stroke="#111" stroke-width="8"/><circle cx="970" cy="113" r="19" fill="#fff" stroke="#111" stroke-width="8"/><path d="M805 545 C815 470 880 400 985 378" stroke="#111" stroke-width="17" stroke-dasharray="22 22" stroke-linecap="butt"/><path d="M800 440 C850 415 880 395 930 385" stroke="#111" stroke-width="12" stroke-dasharray="12 20" stroke-linecap="butt"/></g><g transform="translate(905,92) scale(0.12626)" fill="none" stroke-linecap="round" stroke-linejoin="round"><path d="M160 283 L182 245 L300 245 L322 283 Z" fill="url(#og)" stroke="#c02a10" stroke-width="7"/><path d="M160 245 L182 207 L300 207 L322 245 Z" fill="url(#og)" stroke="#c02a10" stroke-width="7"/><path d="M160 206 L182 168 L300 168 L322 206 Z" fill="url(#og)" stroke="#c02a10" stroke-width="7"/><path d="M240 88 L240 150" stroke="#111" stroke-width="18" stroke-linecap="butt"/><path d="M232 208 L248 208 M232 247 L248 247" stroke="#111" stroke-width="9"/><circle cx="240" cy="165" r="15" fill="#fff" stroke="#111" stroke-width="8"/><rect x="228" y="382" width="92" height="88" fill="url(#og)" stroke="#c02a10" stroke-width="7"/><rect x="206" y="404" width="92" height="88" fill="url(#og)" stroke="#c02a10" stroke-width="7"/><rect x="184" y="426" width="92" height="88" fill="url(#og)" stroke="#c02a10" stroke-width="7"/><rect x="162" y="448" width="92" height="88" fill="url(#og)" stroke="#c02a10" stroke-width="7"/><path d="M145 555 L208 497 M318 385 L335 370" stroke="#111" stroke-width="17"/><path d="M215 505 L250 535 L215 535 Z" fill="#f0642a"/><path d="M527 245 L662 113" stroke="#111" stroke-width="16"/><circle cx="527" cy="245" r="19" fill="#fff" stroke="#111" stroke-width="8"/><circle cx="662" cy="113" r="19" fill="#fff" stroke="#111" stroke-width="8"/><rect x="872" y="97" width="178" height="176" fill="url(#og)" stroke="#c02a10" stroke-width="7"/><path d="M962 100 L962 185 L1048 185" stroke="#c02a10" stroke-width="12"/><circle cx="962" cy="185" r="62" stroke="#111" stroke-width="18"/><path d="M527 523 L640 410" stroke="#111" stroke-width="16"/><path d="M682 370 L655 440 L612 397 Z" fill="#111"/><path d="M527 525 L680 525 M610 470 Q628 495 628 525" stroke="#555" stroke-width="5"/><circle cx="527" cy="523" r="19" fill="#fff" stroke="#111" stroke-width="8"/><circle cx="960" cy="462" r="72" stroke="#111" stroke-width="18"/><circle cx="888" cy="462" r="19" fill="#fff" stroke="#111" stroke-width="8"/><circle cx="1032" cy="462" r="19" fill="#fff" stroke="#111" stroke-width="8"/><circle cx="908" cy="513" r="19" fill="#fff" stroke="#111" stroke-width="8"/></g><g transform="translate(1035,92) scale(0.12626)" fill="none" stroke-linecap="round" stroke-linejoin="round"><path d="M250 237 C190 215 215 110 300 110 C350 110 375 150 375 185" stroke="#111" stroke-width="17"/><circle cx="230" cy="185" r="19" fill="#fff" stroke="#111" stroke-width="8"/><circle cx="375" cy="185" r="19" fill="#fff" stroke="#111" stroke-width="8"/><circle cx="250" cy="237" r="19" fill="#fff" stroke="#111" stroke-width="8"/><path d="M222 513 C300 560 360 500 345 440 C335 400 300 390 252 390 L370 390" stroke="#111" stroke-width="17"/><path d="M405 390 L367 407 L367 373 Z" fill="#111"/><circle cx="222" cy="513" r="19" fill="#fff" stroke="#111" stroke-width="8"/><circle cx="252" cy="390" r="19" fill="#fff" stroke="#111" stroke-width="8"/><path d="M726 113 L610 113 M726 113 C610 113 700 258 580 258 L700 258" stroke="#111" stroke-width="16"/><path d="M572 108 L607 93 L607 123 Z" fill="#111"/><path d="M742 262 L707 277 L707 247 Z" fill="#111"/><circle cx="726" cy="113" r="19" fill="#fff" stroke="#111" stroke-width="8"/><circle cx="580" cy="258" r="19" fill="#fff" stroke="#111" stroke-width="8"/><path d="M858 113 L1003 113 L1003 258 L858 258" stroke="#8a8a8a" stroke-width="4"/><path d="M858 113 C990 113 990 258 858 258" stroke="#111" stroke-width="17"/><circle cx="858" cy="113" r="19" fill="#fff" stroke="#111" stroke-width="8"/><circle cx="1003" cy="113" r="19" fill="#fff" stroke="#111" stroke-width="8"/><circle cx="1003" cy="258" r="19" fill="#fff" stroke="#111" stroke-width="8"/><circle cx="858" cy="258" r="19" fill="#fff" stroke="#111" stroke-width="8"/><path d="M610 380 C720 380 760 470 722 515 C690 555 600 550 572 493 C555 450 610 425 642 440" stroke="#111" stroke-width="16"/><circle cx="610" cy="380" r="17" fill="#fff" stroke="#111" stroke-width="8"/><circle cx="642" cy="440" r="17" fill="#fff" stroke="#111" stroke-width="8"/><circle cx="725" cy="470" r="17" fill="#fff" stroke="#111" stroke-width="8"/><circle cx="570" cy="493" r="17" fill="#fff" stroke="#111" stroke-width="8"/><circle cx="652" cy="545" r="17" fill="#fff" stroke="#111" stroke-width="8"/><path d="M868 390 L1003 390 L1003 463 L930 463 L868 523" stroke="#111" stroke-width="16"/><circle cx="868" cy="390" r="19" fill="#fff" stroke="#111" stroke-width="8"/><circle cx="1003" cy="390" r="19" fill="#fff" stroke="#111" stroke-width="8"/><circle cx="1003" cy="463" r="19" fill="#fff" stroke="#111" stroke-width="8"/><circle cx="930" cy="463" r="19" fill="#fff" stroke="#111" stroke-width="8"/><circle cx="868" cy="523" r="19" fill="#fff" stroke="#111" stroke-width="8"/></g><g transform="translate(1107,92) scale(0.12626)" fill="none" stroke-linecap="round" stroke-linejoin="round"><path d="M640 258 L668 197 M792 197 L822 258" stroke="#b01010" stroke-width="19"/><path d="M668 197 C700 130 720 120 730 120 C745 120 765 140 792 197" stroke="#111" stroke-width="17"/><circle cx="668" cy="197" r="17" fill="#fff" stroke="#111" stroke-width="8"/><circle cx="792" cy="197" r="17" fill="#fff" stroke="#111" stroke-width="8"/><path d="M650 380 C690 460 710 480 728 480 C745 480 770 455 815 423" stroke="#111" stroke-width="17"/><path d="M700 490 L752 490 L752 515 L778 515 L726 560 L674 515 L700 515 Z" fill="#fff" stroke="#222" stroke-width="5"/><circle cx="650" cy="380" r="17" fill="#fff" stroke="#111" stroke-width="8"/><circle cx="815" cy="423" r="17" fill="#fff" stroke="#111" stroke-width="8"/><path d="M1012 92 C1060 100 1065 150 1055 195 C1045 250 1080 275 1110 262 C1130 252 1140 240 1140 228" stroke="#111" stroke-width="17"/><path d="M1065 120 L1100 175 M1098 120 L1068 175 M1055 148 L1108 148 M1015 195 L1050 245 M1048 195 L1018 245 M1008 220 L1058 220" stroke="#777" stroke-width="4"/><path d="M1020 470 C1040 400 1100 385 1120 380" stroke="#c01010" stroke-width="17"/><path d="M1120 380 C1180 385 1190 470 1150 490 C1110 500 1100 450 1060 460" stroke="#111" stroke-width="18"/><path d="M1060 460 C1010 480 1010 530 1070 545" stroke="#c01010" stroke-width="16"/><path d="M985 470 C985 420 1020 385 1080 372" stroke="#e02a2a" stroke-width="6"/><path d="M1255 175 L1275 175 M1255 230 L1275 230" stroke="#c01010" stroke-width="8"/></g></svg>
<svg width="420" height="50" style="left:645px;top:195px" viewBox="645 195 420 50"><defs><linearGradient id="fg" x1="0" y1="0" x2="0" y2="1"><stop offset="0" stop-color="#6fb13c"/><stop offset="0.5" stop-color="#86c552"/><stop offset="1" stop-color="#a2d873"/></linearGradient><linearGradient id="sb" x1="0" y1="0" x2="0" y2="1"><stop offset="0" stop-color="#3f9cf4"/><stop offset="1" stop-color="#0b4fd0"/></linearGradient><radialGradient id="ey" cx="0.5" cy="0.5" r="0.5"><stop offset="0.35" stop-color="#7fd6f6"/><stop offset="0.8" stop-color="#3aa4dc"/><stop offset="1" stop-color="#1a6aa8"/></radialGradient><linearGradient id="pn" x1="0" y1="0" x2="1" y2="1"><stop offset="0" stop-color="#f44"/><stop offset="1" stop-color="#b00"/></linearGradient></defs><g transform="translate(645,195) scale(0.12626)"><path d="M80 95 L195 95 L215 112 L215 200 L80 200 Z" fill="#f2f2f2" stroke="#8d8d8d" stroke-width="7"/><path d="M52 300 L52 200 L110 195 L140 160 L235 160 L235 300 Z" fill="url(#fg)" stroke="#3c7a1c" stroke-width="8" stroke-linejoin="round"/><path d="M345 92 L530 92 Q543 92 543 105 L543 300 L505 300 L505 290 L370 290 L370 300 L345 300 Q330 300 330 285 L330 105 Q330 92 345 92 Z" fill="url(#sb)" stroke="#0a2f9a" stroke-width="8"/><rect x="368" y="100" width="140" height="82" fill="#dcdcdc" stroke="#9a9a9a" stroke-width="5"/><path d="M380 125 L496 125 M380 150 L496 150" stroke="#bdbdbd" stroke-width="6"/><rect x="372" y="225" width="105" height="70" fill="#c9c9c9" stroke="#555" stroke-width="5"/><rect x="388" y="238" width="36" height="50" fill="#1a6cf0"/></g><g transform="translate(890,195) scale(0.12626)"><path d="M185 165 L185 92 L262 92 L262 118 L215 118 L215 165 Z M398 165 L398 92 L320 92 L320 118 L368 118 L368 165 Z M185 225 L185 300 L262 300 L262 272 L215 272 L215 225 Z M398 225 L398 300 L320 300 L320 272 L368 272 L368 225 Z" fill="#222" stroke="#111" stroke-width="4"/><path d="M270 175 L312 217 M312 175 L270 217" stroke="#111" stroke-width="13"/><path d="M472 190 L518 190 L495 213 Z M877 190 L922 190 L900 213 Z" fill="#111"/><path d="M588 198 Q690 95 805 198 Q690 300 588 198 Z" fill="#f4f4f4" stroke="#333" stroke-width="10"/><circle cx="697" cy="195" r="58" fill="url(#ey)" stroke="#1a5a90" stroke-width="5"/><circle cx="697" cy="195" r="24" fill="#0a0a14"/><circle cx="680" cy="178" r="9" fill="#fff" fill-opacity="0.8"/><path d="M1070 240 L1175 108 L1192 122 L1195 205 L1100 280 Z" fill="url(#pn)"/><path d="M1070 240 L1100 280 L1060 290 Z" fill="#e8b84a"/><path d="M1175 108 L1192 122 L1195 205 L1180 215 Z" fill="#c11"/><path d="M1000 150 C1040 190 1000 230 990 265 C985 295 1040 300 1068 285" fill="none" stroke="#4a0a0a" stroke-width="12" stroke-linecap="round"/></g></svg>
<div class="b" style="left:663px;top:458px;width:620px;height:520px;background:#000;box-shadow:0 2px 10px 1px rgba(0,0,0,.45);"></div>
<div class="b" style="left:663px;top:458px;width:620px;height:37px;background:#fff;"></div>
<svg width="22" height="18" style="left:672px;top:467px" viewBox="0 0 22 18"><rect x="0.5" y="0.5" width="20" height="16" fill="#000" stroke="#8a8f99"/><rect x="1" y="1" width="19" height="2.2" fill="#b9c3d6"/><text x="2.2" y="12.5" font-family="'Liberation Sans',sans-serif" font-size="8" font-weight="bold" fill="#e8e8e8">C:\_</text></svg>
<div class="t" style="left:697.20px;top:469.09px;font:15.6px/1 'Liberation Sans', sans-serif;color:#000;letter-spacing:-0.469px;">C:\WINDOWS\system32\cmd.exe</div>
<div class="b" style="left:664.6px;top:495px;width:610px;height:465px;overflow:hidden;font:14.6px/20px 'DejaVu Sans Mono',monospace;color:#ccc;white-space:pre;letter-spacing:0.190px;"><div style="margin-top:20.5px">smoothSolver:  Solving for Ux, Initial residual = 0.015005014, Final residual = 0.00012
smoothSolver:  Solving for Uy, Initial residual = 0.0019309874, Final residual = 0.0001
smoothSolver:  Solving for Uz, Initial residual = 0.015897851, Final residual = 0.00013
GAMG:  Solving for p, Initial residual = 0.059746163, Final residual = 0.00051
GAMG:  Solving for p, Initial residual = 0.0046085514, Final residual = 4.1e-05
GAMG:  Solving for p, Initial residual = 0.00049567221, Final residual = 4.5e-06
time step continuity errors : sum local = 1.5786275e-007, global = -1.2e-009
smoothSolver:  Solving for epsilon, Initial residual = 0.0037969752, Final residual
smoothSolver:  Solving for k, Initial residual = 0.010953667, Final residual = 0.0001
ExecutionTime = 13481.479 s  ClockTime = 13481 s

fieldMinMax fieldMinMax write:
    min(mag(U)) = 0 in cell 0 at location (532.34521 104.67235 63)
    max(mag(U)) = 19.571039 in cell 310265 at location (381.20013 101.5
    min(p) = -66.792437 in cell 59414 at location (531.80989 117.80113 
    max(p) = 236.54122 in cell 65434 at location (482.48841 -228.12345 
    min(k) = 0.0094088994 in cell 19614 at location (491.37903 49.12345
    max(k) = 15.571633 in cell 4597 at location (543.55058 101.67994 12
    min(epsilon) = 0.0045700316 in cell 258944 at location (3.8493712 1
    max(epsilon) = 17.755849 in cell 158816 at location (530.74695 104.

Time = 50</div></div>
</body></html>
